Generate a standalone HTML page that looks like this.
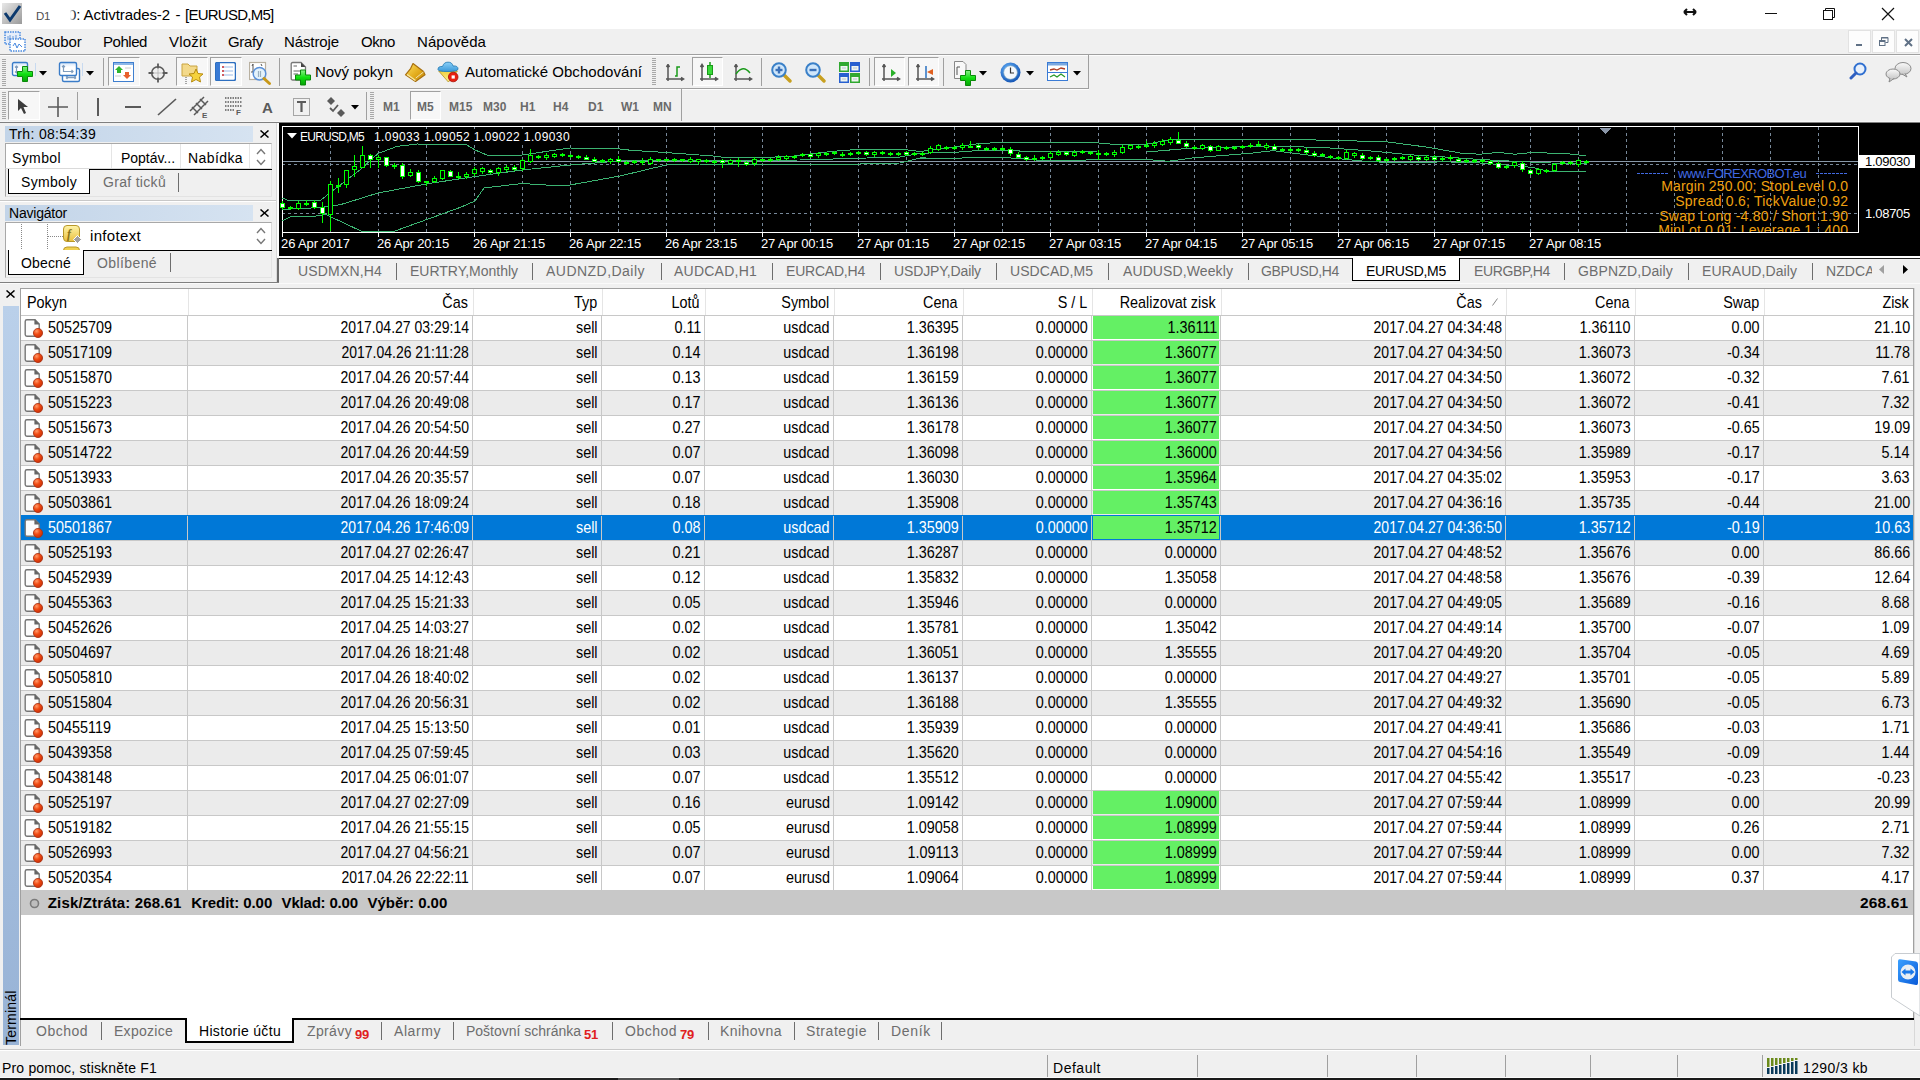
<!DOCTYPE html><html><head><meta charset="utf-8"><style>
html,body{margin:0;padding:0;}
body{width:1920px;height:1080px;overflow:hidden;position:relative;background:#f0f0f0;font-family:"Liberation Sans",sans-serif;}
.t{position:absolute;white-space:nowrap;}
.r{position:absolute;}
</style></head><body>

<div class="r" style="left:0px;top:0px;width:1920px;height:29px;background:#fff;"></div>
<svg class="r" style="left:2px;top:3px;" width="20" height="21" viewBox="0 0 20 21"><defs><linearGradient id="gi" x1="0" y1="0" x2="1" y2="1"><stop offset="0" stop-color="#e8e8e8"/><stop offset="1" stop-color="#9a9a9a"/></linearGradient></defs><rect x="0" y="0" width="20" height="21" fill="url(#gi)"/><path d="M3 10 L8 17 L18 3" stroke="#0d3a6e" stroke-width="3" fill="none"/></svg>
<div class="t" style="top:8.75px;font-size:11.5px;line-height:15.5px;color:#505050;letter-spacing:-0.351px;left:36px;">D1</div>
<div class="t" style="top:5.00px;font-size:15px;line-height:19px;color:#000;letter-spacing:-0.086px;left:68px;">0: Activtrades-2</div>
<div class="t" style="top:5.00px;font-size:15px;line-height:19px;color:#000;left:175.5px;">-</div>
<div class="t" style="top:5.00px;font-size:15px;line-height:19px;color:#000;letter-spacing:-0.744px;left:185px;">[EURUSD,M5]</div>
<div class="r" style="left:50px;top:0px;width:26px;height:29px;background:linear-gradient(90deg,#fff 76%,rgba(255,255,255,0));"></div>
<svg class="r" style="left:1683px;top:7px;" width="14" height="10" viewBox="0 0 14 10"><path d="M1 5 H13 M1 5 L4 2 M1 5 L4 8 M13 5 L10 2 M13 5 L10 8" stroke="#111" stroke-width="2" fill="none"/></svg>
<div class="r" style="left:1765px;top:13px;width:12px;height:1px;background:#111;"></div>
<svg class="r" style="left:1822px;top:7px;" width="14" height="14" viewBox="0 0 14 14"><rect x="1.5" y="3.5" width="9" height="9" fill="none" stroke="#111"/><path d="M3.5 3.5 V1.5 H12.5 V10.5 H10.5" fill="none" stroke="#111"/></svg>
<svg class="r" style="left:1881px;top:7px;" width="14" height="14" viewBox="0 0 14 14"><path d="M1 1 L13 13 M13 1 L1 13" stroke="#111" stroke-width="1.2"/></svg>
<svg class="r" style="left:4px;top:31px;" width="22" height="21" viewBox="0 0 22 21"><rect x="1" y="1" width="15" height="12" fill="#e6eefa" stroke="#4a8ae0" stroke-width="1.5" stroke-dasharray="1.5 1"/><path d="M4 5 V9 M6 4 V8 M9 5 V10 M12 4 V8" stroke="#6a9ad8" stroke-width="1"/><rect x="6" y="8" width="15" height="12" fill="#fff" stroke="#4a8ae0" stroke-width="1.5" stroke-dasharray="1.5 1"/><path d="M9 15 L11 12 L13 17 L15 13 L18 16" stroke="#4a8ae0" fill="none"/></svg>
<div class="t" style="top:32.30px;font-size:15px;line-height:19px;color:#000;letter-spacing:-0.145px;left:34px;">Soubor</div>
<div class="t" style="top:32.30px;font-size:15px;line-height:19px;color:#000;letter-spacing:-0.451px;left:103px;">Pohled</div>
<div class="t" style="top:32.30px;font-size:15px;line-height:19px;color:#000;letter-spacing:0.220px;left:169px;">Vložit</div>
<div class="t" style="top:32.30px;font-size:15px;line-height:19px;color:#000;letter-spacing:-0.335px;left:228px;">Grafy</div>
<div class="t" style="top:32.30px;font-size:15px;line-height:19px;color:#000;letter-spacing:-0.107px;left:284px;">Nástroje</div>
<div class="t" style="top:32.30px;font-size:15px;line-height:19px;color:#000;letter-spacing:-0.463px;left:361px;">Okno</div>
<div class="t" style="top:32.30px;font-size:15px;line-height:19px;color:#000;letter-spacing:0.076px;left:417px;">Nápověda</div>
<div class="r" style="left:1848px;top:30px;width:23px;height:23px;background:#fdfdfd;box-sizing:border-box;border:1px solid #e2e2e2;"></div>
<div class="r" style="left:1872px;top:30px;width:23px;height:23px;background:#fdfdfd;box-sizing:border-box;border:1px solid #e2e2e2;"></div>
<div class="r" style="left:1896px;top:30px;width:23px;height:23px;background:#fdfdfd;box-sizing:border-box;border:1px solid #e2e2e2;"></div>
<div class="r" style="left:1856px;top:44px;width:6px;height:2px;background:#5f7085;"></div>
<svg class="r" style="left:1879px;top:37px;" width="10" height="9" viewBox="0 0 10 9"><rect x="0.5" y="3.5" width="5.5" height="5" fill="none" stroke="#5f7085"/><rect x="0.5" y="3.5" width="5.5" height="1.5" fill="#5f7085"/><path d="M2.5 3 V0.5 H9 V5.5 H6.5" fill="none" stroke="#5f7085"/><rect x="2.5" y="0" width="6.5" height="1.5" fill="#5f7085"/></svg>
<svg class="r" style="left:1904px;top:38px;" width="9" height="9" viewBox="0 0 9 9"><path d="M1 1 L8 8 M8 1 L1 8" stroke="#5f7085" stroke-width="2"/></svg>
<div class="r" style="left:0px;top:54px;width:1920px;height:1px;background:#a0a0a0;"></div>
<div class="r" style="left:0px;top:55px;width:1920px;height:1px;background:#fdfdfd;"></div>
<div class="r" style="left:2px;top:59px;width:4px;height:27px;background:repeating-linear-gradient(#a8a8a8 0 1px,transparent 1px 2px);"></div>
<svg class="r" style="left:11px;top:61px;" width="24" height="22" viewBox="0 0 24 22"><defs><linearGradient id="wg" x1="0" y1="0" x2="0" y2="1"><stop offset="0" stop-color="#cfe2f8"/><stop offset="0.35" stop-color="#fff"/></linearGradient><linearGradient id="pg" x1="0" y1="0" x2="0" y2="1"><stop offset="0" stop-color="#8af08a"/><stop offset="0.5" stop-color="#10e010"/><stop offset="1" stop-color="#08a008"/></linearGradient></defs><rect x="1.5" y="1.5" width="15" height="13" rx="1.5" fill="url(#wg)" stroke="#3a7cc8" stroke-width="1.4"/><path d="M5.5 5 V12 M4 6.5 L5.5 5 L7 6.5 M4 10.5 L5.5 12 L7 10.5" stroke="#7f9cbc" stroke-width="1.2" fill="none"/><path d="M11.5 5.5 H16.5 V10.5 H21.5 V15.5 H16.5 V20.5 H11.5 V15.5 H6.5 V10.5 H11.5 Z" fill="url(#pg)" stroke="#0a8a0a" stroke-width="1"/></svg>
<div class="r" style="left:35px;top:63px;width:1px;height:13px;background:#c8daf0;"></div>
<svg class="r" style="left:39px;top:71px;" width="8" height="5" viewBox="0 0 8 5"><path d="M0 0 H8 L4 4.5 Z" fill="#000"/></svg>
<svg class="r" style="left:58px;top:61px;" width="23" height="22" viewBox="0 0 23 22"><rect x="4.5" y="7.5" width="17" height="13" rx="1.5" fill="#fff" stroke="#3a7cc8" stroke-width="1.4"/><path d="M8 16.5 H18 M8 16.5 L9.5 15 M8 16.5 L9.5 18 M18 16.5 L16.5 15 M18 16.5 L16.5 18" stroke="#7f9cbc" stroke-width="1.3" fill="none"/><rect x="1.5" y="1.5" width="17" height="13" rx="1.5" fill="url(#wg)" stroke="#3a7cc8" stroke-width="1.4"/><path d="M5.5 4.5 V10.5 H15 M4 6 L5.5 4.5 L7 6 M13.5 9 L15 10.5 L13.5 12" stroke="#7f9cbc" stroke-width="1.2" fill="none"/></svg>
<div class="r" style="left:82px;top:63px;width:1px;height:13px;background:#c8daf0;"></div>
<svg class="r" style="left:86px;top:71px;" width="8" height="5" viewBox="0 0 8 5"><path d="M0 0 H8 L4 4.5 Z" fill="#000"/></svg>
<div class="r" style="left:103px;top:58px;width:1px;height:28px;background:#a0a0a0;"></div>
<div class="r" style="left:108px;top:57px;width:32px;height:29px;box-sizing:border-box;border-top:1px solid #a0a0a0;border-left:1px solid #a0a0a0;border-right:1px solid #fff;border-bottom:1px solid #fff;background:#f7f7f7;"></div>
<svg class="r" style="left:113px;top:62px;" width="21" height="20" viewBox="0 0 21 20"><rect x="0.5" y="0.5" width="20" height="19" fill="#fff" stroke="#3f7fcf"/><rect x="1" y="1" width="19" height="2" fill="#8db7e8"/><path d="M6 4 L10 8 H8 V11 H4 V8 H2 Z" fill="#2fb52f"/><path d="M14 17 L18 13 H16 V10 H12 V13 H10 Z" fill="#e8602c"/><path d="M12 6 H18 M2 14 H8" stroke="#ccc"/></svg>
<svg class="r" style="left:148px;top:63px;" width="20" height="20" viewBox="0 0 20 20"><circle cx="10" cy="10" r="6.3" fill="none" stroke="#5a5a5a" stroke-width="1.6"/><path d="M10 0.5 V5.5 M10 14.5 V19.5 M0.5 10 H5.5 M14.5 10 H19.5" stroke="#5a5a5a" stroke-width="1.8"/><path d="M10 6 V14 M6 10 H14" stroke="#b0b0b0" stroke-width="0.8"/></svg>
<div class="r" style="left:176px;top:57px;width:32px;height:29px;box-sizing:border-box;border-top:1px solid #a0a0a0;border-left:1px solid #a0a0a0;border-right:1px solid #fff;border-bottom:1px solid #fff;background:#f7f7f7;"></div>
<svg class="r" style="left:181px;top:61px;" width="23" height="24" viewBox="0 0 23 24"><path d="M1 3 H7 L9 5 H16 V15 H1 Z" fill="#f3d98a" stroke="#c9a440"/><path d="M15 8 L17 12.5 L22 13 L18.5 16 L19.5 21 L15 18.5 L10.5 21 L11.5 16 L8 13 L13 12.5 Z" fill="#f5d23c" stroke="#b88c10"/><path d="M5 16 V23" stroke="#555" stroke-dasharray="1 1"/></svg>
<div class="r" style="left:210px;top:57px;width:32px;height:29px;box-sizing:border-box;border-top:1px solid #a0a0a0;border-left:1px solid #a0a0a0;border-right:1px solid #fff;border-bottom:1px solid #fff;background:#f7f7f7;"></div>
<svg class="r" style="left:215px;top:62px;" width="21" height="19" viewBox="0 0 21 19"><rect x="0.5" y="0.5" width="20" height="18" rx="2" fill="#fff" stroke="#2d6fc0" stroke-width="1.5"/><rect x="1" y="1" width="4" height="17" fill="#3a7bd5"/><path d="M7 5 H18 M7 9 H18 M7 13 H18" stroke="#9cbbe6"/><path d="M7 5 H9 M7 9 H9 M7 13 H9" stroke="#d03030" stroke-width="1.5"/></svg>
<svg class="r" style="left:249px;top:61px;" width="24" height="26" viewBox="0 0 24 26"><rect x="0.5" y="1.5" width="16" height="17" fill="#fff" stroke="#b8b0a0" stroke-width="1.2"/><path d="M4 3 V11 M4 3 L3 5 M4 11 H2 M12 3 L13 5" stroke="#555" stroke-width="1"/><circle cx="10.5" cy="12.7" r="6.3" fill="#e4f2fb" stroke="#5a90d8" stroke-width="1.5"/><path d="M9.5 10 V16 M11.5 10 V16" stroke="#9ab0c0" stroke-width="1.2"/><path d="M15 17.5 L20.5 22.5" stroke="#c89818" stroke-width="3" stroke-linecap="round"/></svg>
<div class="r" style="left:279px;top:58px;width:1px;height:28px;background:#a0a0a0;"></div>
<svg class="r" style="left:289px;top:61px;" width="23" height="25" viewBox="0 0 23 25"><path d="M2.2 3 Q2.2 1.5 3.7 1.5 H12 L16.5 6 V17.5 Q16.5 19 15 19 H3.7 Q2.2 19 2.2 17.5 Z" fill="#fff" stroke="#777" stroke-width="1.3"/><path d="M12 1.5 V6 H16.5 Z" fill="#444"/><path d="M4.5 5 H8 M4.5 10 H12 M4.5 13 H9" stroke="#999" stroke-width="1.3"/><path d="M9 9 H14 V14 H19 V19 H14 V24 H9 V19 H4 V14 H9 Z" transform="translate(2.5,0)" fill="url(#pg)" stroke="#0a8a0a" stroke-width="1"/></svg>
<div class="t" style="top:62.20px;font-size:15px;line-height:19px;color:#000;letter-spacing:-0.037px;left:315px;">Nový pokyn</div>
<svg class="r" style="left:404px;top:62px;" width="22" height="21" viewBox="0 0 22 21"><defs><linearGradient id="gold" x1="0" y1="0" x2="1" y2="1"><stop offset="0" stop-color="#ffe060"/><stop offset="0.6" stop-color="#e0a818"/><stop offset="1" stop-color="#c08810"/></linearGradient></defs><path d="M9 1.5 L19.5 9.5 L21 12.8 L11.5 19.5 L1.5 12.8 L6.6 6.6 Z" fill="url(#gold)" stroke="#a87010" stroke-width="1.2" stroke-linejoin="round"/><path d="M3 12.5 L11.5 18.5" stroke="#f8e8a0" stroke-width="1.5"/><path d="M19.5 10 L11.8 16" stroke="#f0e0b0" stroke-width="1"/></svg>
<svg class="r" style="left:437px;top:61px;" width="22" height="22" viewBox="0 0 22 22"><defs><linearGradient id="hat" x1="0" y1="0" x2="0" y2="1"><stop offset="0" stop-color="#8ad0f8"/><stop offset="1" stop-color="#3a98d8"/></linearGradient><linearGradient id="sack" x1="0" y1="0" x2="0" y2="1"><stop offset="0" stop-color="#f0d040"/><stop offset="1" stop-color="#fff090"/></linearGradient></defs><path d="M1.7 10 L20.4 10 L11.4 21 Z" fill="url(#sack)" stroke="#b09020" stroke-width="0.8"/><path d="M1 8.5 Q1 5 5.5 5.5 Q7 1 11 1.2 Q15 1 16 5 Q21 4.5 21 8 Q21 10.5 11 10.5 Q1 10.5 1 8.5 Z" fill="url(#hat)" stroke="#2a80b8" stroke-width="0.9"/><circle cx="16.2" cy="16" r="4.8" fill="#e82010" stroke="#a81008" stroke-width="0.8"/><rect x="14.6" y="14.4" width="3.2" height="3.2" fill="#fff"/></svg>
<div class="t" style="top:62.20px;font-size:15px;line-height:19px;color:#000;letter-spacing:0.046px;left:465px;">Automatické Obchodování</div>
<div class="r" style="left:652px;top:58px;width:4px;height:28px;background:repeating-linear-gradient(#a8a8a8 0 1px,transparent 1px 2px);"></div>
<svg class="r" style="left:665px;top:64px;" width="20" height="19" viewBox="0 0 20 19"><path d="M3 1 V17 M1 15 H18 M1.5 3 L3 0.5 L4.5 3 M16 13.5 L18.5 15 L16 16.5" stroke="#555" stroke-width="1.5" fill="none"/><path d="M10 12 H12 V3 H15" stroke="#1a9a1a" stroke-width="1.5" fill="none"/></svg>
<div class="r" style="left:692px;top:57px;width:31px;height:29px;box-sizing:border-box;border-top:1px solid #a0a0a0;border-left:1px solid #a0a0a0;border-right:1px solid #fff;border-bottom:1px solid #fff;background:#f7f7f7;"></div>
<svg class="r" style="left:699px;top:62px;" width="20" height="21" viewBox="0 0 20 21"><path d="M3 3 V19 M1 17 H18 M1.5 5 L3 2.5 L4.5 5 M16 15.5 L18.5 17 L16 18.5" stroke="#555" stroke-width="1.5" fill="none"/><path d="M11 0 V16" stroke="#1a9a1a" stroke-width="1.5"/><rect x="8.5" y="3.5" width="5" height="9" fill="#3ada3a" stroke="#1a9a1a"/></svg>
<svg class="r" style="left:733px;top:64px;" width="20" height="19" viewBox="0 0 20 19"><path d="M3 1 V17 M1 15 H18 M1.5 3 L3 0.5 L4.5 3 M16 13.5 L18.5 15 L16 16.5" stroke="#555" stroke-width="1.5" fill="none"/><path d="M3 10 Q10 0 17 9" stroke="#1a9a1a" stroke-width="1.5" fill="none"/></svg>
<div class="r" style="left:761px;top:58px;width:1px;height:28px;background:#a0a0a0;"></div>
<svg class="r" style="left:771px;top:62px;" width="21" height="21" viewBox="0 0 21 21"><path d="M12.5 12.5 L19 19" stroke="#c8a020" stroke-width="3.4" stroke-linecap="round"/><circle cx="8" cy="8" r="6.8" fill="#cfe6fa" stroke="#3a80c8" stroke-width="2"/><path d="M4.5 8 H11.5" stroke="#3a70b8" stroke-width="2.4"/><path d="M8 4.5 V11.5" stroke="#3a70b8" stroke-width="2.4"/></svg>
<svg class="r" style="left:805px;top:62px;" width="21" height="21" viewBox="0 0 21 21"><path d="M12.5 12.5 L19 19" stroke="#c8a020" stroke-width="3.4" stroke-linecap="round"/><circle cx="8" cy="8" r="6.8" fill="#cfe6fa" stroke="#3a80c8" stroke-width="2"/><path d="M4.5 8 H11.5" stroke="#3a70b8" stroke-width="2.4"/></svg>
<svg class="r" style="left:839px;top:62px;" width="21" height="21" viewBox="0 0 21 21"><rect x="0" y="0" width="10" height="10" fill="#30a830"/><rect x="11" y="0" width="10" height="10" fill="#2860d0"/><rect x="0" y="11" width="10" height="10" fill="#2860d0"/><rect x="11" y="11" width="10" height="10" fill="#30a830"/><path d="M1.5 4 H8.5 V8.5 H1.5 Z M12.5 4 H19.5 V8.5 H12.5 Z M1.5 15 H8.5 V19.5 H1.5 Z M12.5 15 H19.5 V19.5 H12.5 Z" fill="#f0f6f0"/><path d="M3 6 H7 M14 6 H18 M3 17 H7 M14 17 H18" stroke="#a8b8c8" stroke-width="0.8"/></svg>
<div class="r" style="left:869px;top:58px;width:1px;height:28px;background:#a0a0a0;"></div>
<div class="r" style="left:874px;top:57px;width:31px;height:29px;box-sizing:border-box;border-top:1px solid #a0a0a0;border-left:1px solid #a0a0a0;border-right:1px solid #fff;border-bottom:1px solid #fff;background:#f7f7f7;"></div>
<svg class="r" style="left:882px;top:64px;" width="19" height="19" viewBox="0 0 19 19"><path d="M2 1 V17 M0 15 H17 M0.5 3 L2 0.5 L3.5 3 M15 13.5 L17.5 15 L15 16.5" stroke="#555" stroke-width="1.5" fill="none"/><path d="M9 5 L14 9 L9 13 Z" fill="#2ab02a"/></svg>
<div class="r" style="left:908px;top:57px;width:31px;height:29px;box-sizing:border-box;border-top:1px solid #a0a0a0;border-left:1px solid #a0a0a0;border-right:1px solid #fff;border-bottom:1px solid #fff;background:#f7f7f7;"></div>
<svg class="r" style="left:916px;top:64px;" width="19" height="19" viewBox="0 0 19 19"><path d="M2 1 V17 M0 15 H17 M0.5 3 L2 0.5 L3.5 3 M15 13.5 L17.5 15 L15 16.5" stroke="#555" stroke-width="1.5" fill="none"/><path d="M10 2 V14" stroke="#2a70c0" stroke-width="1.5"/><path d="M11 8 L17 5 V11 Z" fill="#e06020"/></svg>
<div class="r" style="left:943px;top:58px;width:1px;height:28px;background:#a0a0a0;"></div>
<svg class="r" style="left:954px;top:61px;" width="23" height="25" viewBox="0 0 23 25"><path d="M0.5 0.5 H9 L12 3.5 V17.5 H0.5 Z" fill="#f8f8f8" stroke="#888"/><path d="M3 6 V14 M3 6 H6" stroke="#555"/><path d="M11.5 9.5 H16.5 V14.5 H21.5 V19.5 H16.5 V24.5 H11.5 V19.5 H6.5 V14.5 H11.5 Z" fill="url(#pg)" stroke="#0a8a0a"/></svg>
<svg class="r" style="left:979px;top:71px;" width="8" height="5" viewBox="0 0 8 5"><path d="M0 0 H8 L4 4.5 Z" fill="#000"/></svg>
<svg class="r" style="left:1000px;top:62px;" width="21" height="21" viewBox="0 0 21 21"><defs><radialGradient id="clk" cx="0.4" cy="0.35" r="0.7"><stop offset="0" stop-color="#6ab8ff"/><stop offset="1" stop-color="#1050b0"/></radialGradient></defs><circle cx="10.5" cy="10.5" r="10" fill="url(#clk)"/><circle cx="10.5" cy="10.5" r="6.8" fill="#f4f8fc" stroke="#8ab" stroke-width="0.6"/><path d="M10.5 5.5 V11 H14" stroke="#333" stroke-width="1.2" fill="none"/></svg>
<svg class="r" style="left:1026px;top:71px;" width="8" height="5" viewBox="0 0 8 5"><path d="M0 0 H8 L4 4.5 Z" fill="#000"/></svg>
<svg class="r" style="left:1047px;top:62px;" width="21" height="19" viewBox="0 0 21 19"><rect x="0.5" y="0.5" width="20" height="18" fill="#fff" stroke="#3a7bd5"/><rect x="1" y="1" width="19" height="2.5" fill="#7aa8e0"/><path d="M3 8 L7 7 L10 8 L14 6 L18 7" stroke="#b03a20" stroke-width="1.3" fill="none"/><path d="M1 10.5 H20" stroke="#3a7bd5"/><path d="M3 15 L7 13 L10 15 L14 12 L18 15" stroke="#2a9a2a" stroke-width="1.3" fill="none"/></svg>
<svg class="r" style="left:1073px;top:71px;" width="8" height="5" viewBox="0 0 8 5"><path d="M0 0 H8 L4 4.5 Z" fill="#000"/></svg>
<div class="r" style="left:1088px;top:55px;width:1px;height:33px;background:#a0a0a0;"></div>
<svg class="r" style="left:1849px;top:62px;" width="18" height="18" viewBox="0 0 18 18"><circle cx="11" cy="7" r="5.5" fill="#e8f0fb" stroke="#2f6fd0" stroke-width="2"/><path d="M7 11 L2 16" stroke="#2f5fc0" stroke-width="3" stroke-linecap="round"/></svg>
<svg class="r" style="left:1884px;top:61px;" width="28" height="22" viewBox="0 0 28 22"><defs><linearGradient id="chg" x1="0" y1="0" x2="0" y2="1"><stop offset="0" stop-color="#fafafa"/><stop offset="1" stop-color="#c8c8c8"/></linearGradient></defs><ellipse cx="19" cy="7.5" rx="8" ry="6" fill="url(#chg)" stroke="#8a8a8a"/><path d="M21 12.5 L23 16 L18 13" fill="#ccc" stroke="#8a8a8a"/><ellipse cx="9" cy="13" rx="7" ry="5" fill="url(#chg)" stroke="#8a8a8a"/><path d="M6 17 L5 21 L10 17.5" fill="#ccc" stroke="#8a8a8a"/></svg>
<div class="r" style="left:0px;top:88px;width:1089px;height:1px;background:#a0a0a0;"></div>
<div class="r" style="left:0px;top:89px;width:1089px;height:1px;background:#fdfdfd;"></div>
<div class="r" style="left:2px;top:92px;width:4px;height:28px;background:repeating-linear-gradient(#a8a8a8 0 1px,transparent 1px 2px);"></div>
<div class="r" style="left:8px;top:91px;width:32px;height:29px;box-sizing:border-box;border-top:1px solid #a0a0a0;border-left:1px solid #a0a0a0;border-right:1px solid #fff;border-bottom:1px solid #fff;background:#f7f7f7;"></div>
<svg class="r" style="left:17px;top:98px;" width="13" height="17" viewBox="0 0 13 17"><path d="M1 1 L1 13 L4 10 L7 16 L9 15 L6.5 9 L11 9 Z" fill="#3c3c3c"/></svg>
<svg class="r" style="left:48px;top:97px;" width="20" height="20" viewBox="0 0 20 20"><path d="M10 0 V20 M0 10 H20" stroke="#5a5a5a" stroke-width="1.6"/></svg>
<div class="r" style="left:77px;top:92px;width:1px;height:28px;background:#a0a0a0;"></div>
<div class="r" style="left:97px;top:98px;width:2px;height:18px;background:#5a5a5a;"></div>
<div class="r" style="left:125px;top:106px;width:16px;height:2px;background:#5a5a5a;"></div>
<svg class="r" style="left:157px;top:98px;" width="20" height="18" viewBox="0 0 20 18"><path d="M1 17 L19 1" stroke="#5a5a5a" stroke-width="1.6"/></svg>
<svg class="r" style="left:189px;top:96px;" width="22" height="23" viewBox="0 0 22 23"><path d="M1 15 L15 1 M5 19 L19 5 M3 11 L9 17 M7 7 L13 13 M11 3 L17 9" stroke="#5a5a5a" stroke-width="1.5"/><text x="13" y="22" font-size="8" font-weight="bold" fill="#5a5a5a" font-family="Liberation Sans">E</text></svg>
<svg class="r" style="left:225px;top:97px;" width="19" height="19" viewBox="0 0 19 19"><path d="M0 1 H17 M0 5 H17 M0 9 H17 M0 13 H10" stroke="#5a5a5a" stroke-width="1.3" stroke-dasharray="1.5 1"/><text x="11" y="18" font-size="8" font-weight="bold" fill="#5a5a5a" font-family="Liberation Sans">F</text></svg>
<div class="t" style="top:97.50px;font-size:15px;line-height:19px;color:#5a5a5a;font-weight:bold;left:262px;">A</div>
<svg class="r" style="left:293px;top:97px;" width="17" height="19" viewBox="0 0 17 19"><rect x="0.5" y="1.5" width="16" height="17" fill="none" stroke="#5a5a5a" stroke-dasharray="1 1"/><path d="M4 5 H13 M8.5 5 V15" stroke="#5a5a5a" stroke-width="2.2"/></svg>
<svg class="r" style="left:327px;top:97px;" width="19" height="21" viewBox="0 0 19 21"><path d="M4 0 L8 4 L4 8 L0 4 Z M14 12 L18 16 L14 20 L10 16 Z" fill="#5a5a5a"/><path d="M3 11 L6 14 L11 8" stroke="#5a5a5a" stroke-width="1.8" fill="none"/></svg>
<svg class="r" style="left:351px;top:105px;" width="8" height="5" viewBox="0 0 8 5"><path d="M0 0 H8 L4 4.5 Z" fill="#000"/></svg>
<div class="r" style="left:366px;top:92px;width:1px;height:28px;background:#a0a0a0;"></div>
<div class="r" style="left:370px;top:92px;width:4px;height:28px;background:repeating-linear-gradient(#a8a8a8 0 1px,transparent 1px 2px);"></div>
<div class="r" style="left:410px;top:91px;width:31px;height:29px;box-sizing:border-box;border-top:1px solid #a0a0a0;border-left:1px solid #a0a0a0;border-right:1px solid #fff;border-bottom:1px solid #fff;background:#f7f7f7;"></div>
<div class="t" style="top:99.00px;font-size:12px;line-height:16px;color:#6a6a6a;font-weight:bold;left:383px;">M1</div>
<div class="t" style="top:99.00px;font-size:12px;line-height:16px;color:#6a6a6a;font-weight:bold;left:417px;">M5</div>
<div class="t" style="top:99.00px;font-size:12px;line-height:16px;color:#6a6a6a;font-weight:bold;left:449px;">M15</div>
<div class="t" style="top:99.00px;font-size:12px;line-height:16px;color:#6a6a6a;font-weight:bold;left:483px;">M30</div>
<div class="t" style="top:99.00px;font-size:12px;line-height:16px;color:#6a6a6a;font-weight:bold;left:520px;">H1</div>
<div class="t" style="top:99.00px;font-size:12px;line-height:16px;color:#6a6a6a;font-weight:bold;left:553px;">H4</div>
<div class="t" style="top:99.00px;font-size:12px;line-height:16px;color:#6a6a6a;font-weight:bold;left:588px;">D1</div>
<div class="t" style="top:99.00px;font-size:12px;line-height:16px;color:#6a6a6a;font-weight:bold;left:621px;">W1</div>
<div class="t" style="top:99.00px;font-size:12px;line-height:16px;color:#6a6a6a;font-weight:bold;left:653px;">MN</div>
<div class="r" style="left:681px;top:89px;width:1px;height:33px;background:#a0a0a0;"></div>
<div class="r" style="left:0px;top:121px;width:1920px;height:1px;background:#f6f6f6;"></div>
<div class="r" style="left:0px;top:122px;width:1920px;height:1px;background:#808080;"></div>
<div class="r" style="left:5px;top:126px;width:248px;height:16px;background:linear-gradient(90deg,#c2d4e8,#d6e3f1);"></div>
<div class="t" style="top:125.20px;font-size:14px;line-height:18px;color:#000;letter-spacing:0.326px;left:9px;">Trh: 08:54:39</div>
<svg class="r" style="left:260px;top:130px;" width="9" height="8" viewBox="0 0 9 8"><path d="M0.5 0.5 L8.5 7.5 M8.5 0.5 L0.5 7.5" stroke="#000" stroke-width="1.5"/></svg>
<div class="r" style="left:5px;top:143px;width:267px;height:26px;background:#fff;box-sizing:border-box;border:1px solid #dadada;border-top-color:#a8a8a8;border-left-color:#a8a8a8;"></div>
<div class="t" style="top:148.50px;font-size:14px;line-height:18px;color:#000;letter-spacing:0.386px;left:12px;">Symbol</div>
<div class="t" style="top:148.50px;font-size:14px;line-height:18px;color:#000;letter-spacing:-0.024px;left:121px;">Poptáv...</div>
<div class="t" style="top:148.50px;font-size:14px;line-height:18px;color:#000;letter-spacing:0.408px;left:188px;">Nabídka</div>
<div class="r" style="left:111px;top:144px;width:1px;height:24px;background:#e5e5e5;"></div>
<div class="r" style="left:180px;top:144px;width:1px;height:24px;background:#e5e5e5;"></div>
<div class="r" style="left:249px;top:144px;width:1px;height:24px;background:#e5e5e5;"></div>
<svg class="r" style="left:256px;top:148px;" width="10" height="18" viewBox="0 0 10 18"><path d="M1 6 L5 1.5 L9 6 M1 12 L5 16.5 L9 12" stroke="#777" stroke-width="1.4" fill="none"/></svg>
<div class="r" style="left:5px;top:169px;width:267px;height:28px;background:#f0f0f0;box-sizing:border-box;border:1px solid #e3e3e3;border-left-color:#a8a8a8;border-top:none;"></div>
<div class="r" style="left:90px;top:169px;width:182px;height:1px;background:#000;"></div>
<div class="r" style="left:8px;top:169px;width:82px;height:25px;background:#fff;box-sizing:border-box;border:1px solid #000;border-top:none;"></div>
<div class="t" style="top:172.70px;font-size:14px;line-height:18px;color:#000;letter-spacing:0.331px;left:21px;">Symboly</div>
<div class="t" style="top:172.70px;font-size:14px;line-height:18px;color:#6d6d6d;letter-spacing:0.310px;left:103px;">Graf ticků</div>
<div class="r" style="left:178px;top:173px;width:1px;height:19px;background:#6d6d6d;"></div>
<div class="r" style="left:0px;top:200px;width:278px;height:1px;background:#c8c8c8;"></div>
<div class="r" style="left:0px;top:201px;width:278px;height:1px;background:#fff;"></div>
<div class="r" style="left:5px;top:205px;width:248px;height:16px;background:linear-gradient(90deg,#c2d4e8,#d6e3f1);"></div>
<div class="t" style="top:204.30px;font-size:14px;line-height:18px;color:#000;letter-spacing:-0.213px;left:9px;">Navigátor</div>
<svg class="r" style="left:260px;top:209px;" width="9" height="8" viewBox="0 0 9 8"><path d="M0.5 0.5 L8.5 7.5 M8.5 0.5 L0.5 7.5" stroke="#000" stroke-width="1.5"/></svg>
<div class="r" style="left:5px;top:222px;width:267px;height:29px;background:#fff;box-sizing:border-box;border:1px solid #dadada;border-top-color:#a8a8a8;border-left-color:#a8a8a8;"></div>
<div class="r" style="left:21px;top:224px;width:1px;height:25px;background:repeating-linear-gradient(#888 0 1px,transparent 1px 2px);"></div>
<div class="r" style="left:47px;top:224px;width:1px;height:25px;background:repeating-linear-gradient(#888 0 1px,transparent 1px 2px);"></div>
<div class="r" style="left:48px;top:236px;width:15px;height:1px;background:repeating-linear-gradient(90deg,#888 0 1px,transparent 1px 2px);"></div>
<svg class="r" style="left:62px;top:224px;" width="21" height="20" viewBox="0 0 21 20"><defs><linearGradient id="yic" x1="0" y1="0" x2="0" y2="1"><stop offset="0" stop-color="#fff4a8"/><stop offset="1" stop-color="#e8c040"/></linearGradient></defs><rect x="1.5" y="1.5" width="16" height="16" rx="3.5" fill="url(#yic)" stroke="#b8982a"/><text x="5" y="13.5" font-size="12" font-weight="bold" font-style="italic" fill="#8a7418" font-family="Liberation Serif">f</text><path d="M15.5 11.5 L19.5 15.5 L15.5 19.5 L11.5 15.5 Z" fill="#a0a0a0" stroke="#fff" stroke-width="1"/></svg>
<svg class="r" style="left:62px;top:246px;" width="21" height="5" viewBox="0 0 21 5"><path d="M1.5 5 V4.5 Q1.5 1 5 1 H14 Q17.5 1 17.5 4.5 V5 Z" fill="#f0d050" stroke="#b8982a"/></svg>
<div class="t" style="top:226.30px;font-size:15px;line-height:19px;color:#000;letter-spacing:0.330px;left:90px;">infotext</div>
<svg class="r" style="left:256px;top:227px;" width="10" height="18" viewBox="0 0 10 18"><path d="M1 6 L5 1.5 L9 6 M1 12 L5 16.5 L9 12" stroke="#777" stroke-width="1.4" fill="none"/></svg>
<div class="r" style="left:5px;top:250px;width:267px;height:28px;background:#f0f0f0;box-sizing:border-box;border:1px solid #e3e3e3;border-left-color:#a8a8a8;border-top:none;"></div>
<div class="r" style="left:84px;top:250px;width:188px;height:1px;background:#000;"></div>
<div class="r" style="left:8px;top:250px;width:76px;height:25px;background:#fff;box-sizing:border-box;border:1px solid #000;border-top:none;"></div>
<div class="t" style="top:253.50px;font-size:14px;line-height:18px;color:#000;letter-spacing:0.161px;left:21px;">Obecné</div>
<div class="t" style="top:253.50px;font-size:14px;line-height:18px;color:#6d6d6d;letter-spacing:0.397px;left:97px;">Oblíbené</div>
<div class="r" style="left:170px;top:253px;width:1px;height:19px;background:#6d6d6d;"></div>
<div class="r" style="left:276px;top:123px;width:1px;height:159px;background:#d8d8d8;"></div>
<div class="r" style="left:277px;top:123px;width:2px;height:135px;background:#fdfdfd;"></div>
<div class="r" style="left:277px;top:258px;width:2px;height:24px;background:#6a6a6a;"></div>
<div class="r" style="left:0px;top:282px;width:279px;height:1px;background:#808080;"></div>
<div class="r" style="left:0px;top:283px;width:1920px;height:1px;background:#fafafa;"></div>
<div class="r" style="left:279px;top:123px;width:1641px;height:134px;background:#000;"></div>
<svg class="r" style="left:279px;top:123px" width="1641" height="134" viewBox="0 0 1641 134" shape-rendering="crispEdges"><path d="M51.5 4 V109" stroke="#778899" stroke-dasharray="3 3"/><path d="M99.5 4 V109" stroke="#778899" stroke-dasharray="3 3"/><path d="M147.5 4 V109" stroke="#778899" stroke-dasharray="3 3"/><path d="M195.5 4 V109" stroke="#778899" stroke-dasharray="3 3"/><path d="M243.5 4 V109" stroke="#778899" stroke-dasharray="3 3"/><path d="M291.5 4 V109" stroke="#778899" stroke-dasharray="3 3"/><path d="M339.5 4 V109" stroke="#778899" stroke-dasharray="3 3"/><path d="M387.5 4 V109" stroke="#778899" stroke-dasharray="3 3"/><path d="M435.5 4 V109" stroke="#778899" stroke-dasharray="3 3"/><path d="M483.5 4 V109" stroke="#778899" stroke-dasharray="3 3"/><path d="M531.5 4 V109" stroke="#778899" stroke-dasharray="3 3"/><path d="M579.5 4 V109" stroke="#778899" stroke-dasharray="3 3"/><path d="M627.5 4 V109" stroke="#778899" stroke-dasharray="3 3"/><path d="M675.5 4 V109" stroke="#778899" stroke-dasharray="3 3"/><path d="M723.5 4 V109" stroke="#778899" stroke-dasharray="3 3"/><path d="M771.5 4 V109" stroke="#778899" stroke-dasharray="3 3"/><path d="M819.5 4 V109" stroke="#778899" stroke-dasharray="3 3"/><path d="M867.5 4 V109" stroke="#778899" stroke-dasharray="3 3"/><path d="M915.5 4 V109" stroke="#778899" stroke-dasharray="3 3"/><path d="M963.5 4 V109" stroke="#778899" stroke-dasharray="3 3"/><path d="M1011.5 4 V109" stroke="#778899" stroke-dasharray="3 3"/><path d="M1059.5 4 V109" stroke="#778899" stroke-dasharray="3 3"/><path d="M1107.5 4 V109" stroke="#778899" stroke-dasharray="3 3"/><path d="M1155.5 4 V109" stroke="#778899" stroke-dasharray="3 3"/><path d="M1203.5 4 V109" stroke="#778899" stroke-dasharray="3 3"/><path d="M1251.5 4 V109" stroke="#778899" stroke-dasharray="3 3"/><path d="M1299.5 4 V109" stroke="#778899" stroke-dasharray="3 3"/><path d="M1347.5 4 V109" stroke="#778899" stroke-dasharray="3 3"/><path d="M1395.5 4 V109" stroke="#778899" stroke-dasharray="3 3"/><path d="M1443.5 4 V109" stroke="#778899" stroke-dasharray="3 3"/><path d="M1491.5 4 V109" stroke="#778899" stroke-dasharray="3 3"/><path d="M1539.5 4 V109" stroke="#778899" stroke-dasharray="3 3"/><path d="M3 41.5 H1579" stroke="#778899" stroke-dasharray="3 3"/><path d="M3 90.5 H1579" stroke="#778899" stroke-dasharray="3 3"/><path d="M3 38.5 H1579" stroke="#8898a8"/><rect x="3.5" y="3.5" width="1576" height="106" fill="none" stroke="#fff"/><path d="M1320 5 H1332 L1326 11 Z" fill="#8a96a8"/><path d="M3.0 75.0 L11.0 78.0 L42.0 77.0 L52.0 69.0 L82.0 46.0 L99.0 30.5 L118.0 23.4 L138.0 21.0 L164.0 21.4 L187.0 21.5 L196.0 27.0 L208.0 32.0 L243.0 32.0 L291.0 25.0 L341.0 26.0 L352.0 27.3 L385.0 29.4 L434.0 33.0 L448.0 34.8 L480.0 34.8 L516.0 33.0 L551.0 28.6 L583.0 26.0 L622.0 26.0 L641.0 28.6 L703.0 20.2 L744.0 19.2 L816.0 19.7 L832.0 21.1 L868.0 21.1 L892.0 16.5 L1031.0 16.2 L1042.0 17.6 L1104.0 18.3 L1121.0 20.6 L1148.0 24.1 L1183.0 30.3 L1201.0 31.2 L1219.0 29.4 L1236.0 31.2 L1254.0 29.4 L1295.0 31.2 L1307.0 33.0" stroke="#3cb371" stroke-width="1" fill="none"/><path d="M3.0 86.5 L42.0 84.5 L62.0 81.5 L99.0 70.0 L147.0 61.0 L196.0 53.5 L243.0 47.0 L291.0 42.0 L341.0 38.0 L421.0 37.5 L521.0 37.0 L621.0 34.0 L641.0 30.3 L680.0 29.0 L703.0 27.3 L751.0 28.2 L818.0 29.0 L868.0 29.0 L903.0 25.9 L971.0 23.3 L1006.0 23.3 L1051.0 25.0 L1095.0 28.2 L1130.0 31.7 L1166.0 34.0 L1201.0 36.5 L1236.0 38.3 L1272.0 40.0 L1307.0 41.0" stroke="#3cb371" stroke-width="1" fill="none"/><path d="M3.0 98.0 L11.0 94.0 L37.0 93.0 L47.0 91.6 L82.0 108.0 L116.0 108.0 L181.0 84.5 L196.0 78.0 L205.0 65.0 L243.0 60.5 L267.0 62.0 L291.0 62.0 L341.0 53.0 L387.0 42.0 L421.0 41.0 L521.0 41.0 L581.0 41.0 L621.0 40.0 L641.0 35.0 L680.0 35.1 L703.0 34.4 L736.0 35.1 L761.0 37.4 L868.0 36.5 L889.0 38.3 L915.0 34.8 L971.0 30.3 L994.0 27.7 L1059.0 35.6 L1086.0 38.3 L1121.0 40.0 L1166.0 38.8 L1201.0 40.0 L1236.0 42.7 L1254.0 44.5 L1272.0 49.0 L1307.0 48.4" stroke="#3cb371" stroke-width="1" fill="none"/><path d="M3.5 78 V87" stroke="#00ff00" stroke-width="1"/><rect x="1.5" y="80.5" width="4" height="4" fill="#fff" stroke="#00ff00" stroke-width="1"/><path d="M11.5 83 V87" stroke="#00ff00" stroke-width="1"/><rect x="9.0" y="84" width="5" height="2" fill="#00ff00"/><path d="M19.5 78 V87" stroke="#00ff00" stroke-width="1"/><rect x="17.5" y="80.5" width="4" height="5" fill="#000" stroke="#00ff00" stroke-width="1"/><path d="M27.5 77 V83" stroke="#00ff00" stroke-width="1"/><rect x="25.0" y="80" width="5" height="2" fill="#00ff00"/><path d="M35.5 77 V86" stroke="#00ff00" stroke-width="1"/><rect x="33.5" y="79.5" width="4" height="5" fill="#fff" stroke="#00ff00" stroke-width="1"/><path d="M43.5 79 V100" stroke="#00ff00" stroke-width="1"/><rect x="41.5" y="84.5" width="4" height="6" fill="#fff" stroke="#00ff00" stroke-width="1"/><path d="M51.5 58 V108" stroke="#00ff00" stroke-width="1"/><rect x="49.5" y="61.5" width="4" height="30" fill="#000" stroke="#00ff00" stroke-width="1"/><path d="M59.5 55 V70" stroke="#00ff00" stroke-width="1"/><rect x="57.0" y="62" width="5" height="2" fill="#00ff00"/><path d="M67.5 47 V65" stroke="#00ff00" stroke-width="1"/><rect x="65.5" y="47.5" width="4" height="14" fill="#000" stroke="#00ff00" stroke-width="1"/><path d="M75.5 32 V54" stroke="#00ff00" stroke-width="1"/><rect x="73.5" y="43.5" width="4" height="3" fill="#000" stroke="#00ff00" stroke-width="1"/><path d="M83.5 23 V45" stroke="#00ff00" stroke-width="1"/><rect x="81.5" y="32.5" width="4" height="12" fill="#000" stroke="#00ff00" stroke-width="1"/><path d="M91.5 31 V45" stroke="#00ff00" stroke-width="1"/><rect x="89.5" y="32.5" width="4" height="4" fill="#fff" stroke="#00ff00" stroke-width="1"/><path d="M99.5 32 V45" stroke="#00ff00" stroke-width="1"/><rect x="97.5" y="34.5" width="4" height="2" fill="#000" stroke="#00ff00" stroke-width="1"/><path d="M107.5 34 V44" stroke="#00ff00" stroke-width="1"/><rect x="105.5" y="34.5" width="4" height="8" fill="#fff" stroke="#00ff00" stroke-width="1"/><path d="M115.5 40 V46" stroke="#00ff00" stroke-width="1"/><rect x="113.0" y="42" width="5" height="2" fill="#00ff00"/><path d="M123.5 40 V56" stroke="#00ff00" stroke-width="1"/><rect x="121.5" y="42.5" width="4" height="11" fill="#fff" stroke="#00ff00" stroke-width="1"/><path d="M131.5 46 V54" stroke="#00ff00" stroke-width="1"/><rect x="129.5" y="49.5" width="4" height="3" fill="#000" stroke="#00ff00" stroke-width="1"/><path d="M139.5 47 V60" stroke="#00ff00" stroke-width="1"/><rect x="137.5" y="49.5" width="4" height="9" fill="#fff" stroke="#00ff00" stroke-width="1"/><path d="M147.5 58 V63" stroke="#00ff00" stroke-width="1"/><rect x="145.0" y="58" width="5" height="2" fill="#00ff00"/><path d="M155.5 53 V60" stroke="#00ff00" stroke-width="1"/><rect x="153.5" y="55.5" width="4" height="3" fill="#000" stroke="#00ff00" stroke-width="1"/><path d="M163.5 47 V57" stroke="#00ff00" stroke-width="1"/><rect x="161.5" y="47.5" width="4" height="8" fill="#000" stroke="#00ff00" stroke-width="1"/><path d="M171.5 47 V54" stroke="#00ff00" stroke-width="1"/><rect x="169.5" y="48.5" width="4" height="5" fill="#fff" stroke="#00ff00" stroke-width="1"/><path d="M179.5 49 V56" stroke="#00ff00" stroke-width="1"/><rect x="177.0" y="53" width="5" height="2" fill="#00ff00"/><path d="M187.5 49 V56" stroke="#00ff00" stroke-width="1"/><rect x="185.5" y="51.5" width="4" height="2" fill="#000" stroke="#00ff00" stroke-width="1"/><path d="M195.5 44 V53" stroke="#00ff00" stroke-width="1"/><rect x="193.5" y="46.5" width="4" height="4" fill="#000" stroke="#00ff00" stroke-width="1"/><path d="M203.5 44 V51" stroke="#00ff00" stroke-width="1"/><rect x="201.5" y="45.5" width="4" height="3" fill="#000" stroke="#00ff00" stroke-width="1"/><path d="M211.5 46 V51" stroke="#00ff00" stroke-width="1"/><rect x="209.5" y="47.5" width="4" height="2" fill="#fff" stroke="#00ff00" stroke-width="1"/><path d="M219.5 44 V53" stroke="#00ff00" stroke-width="1"/><rect x="217.5" y="45.5" width="4" height="4" fill="#000" stroke="#00ff00" stroke-width="1"/><path d="M227.5 42 V49" stroke="#00ff00" stroke-width="1"/><rect x="225.5" y="44.5" width="4" height="2" fill="#000" stroke="#00ff00" stroke-width="1"/><path d="M235.5 42 V48" stroke="#00ff00" stroke-width="1"/><rect x="233.5" y="44.5" width="4" height="2" fill="#fff" stroke="#00ff00" stroke-width="1"/><path d="M243.5 36 V48" stroke="#00ff00" stroke-width="1"/><rect x="241.5" y="37.5" width="4" height="8" fill="#000" stroke="#00ff00" stroke-width="1"/><path d="M251.5 26 V40" stroke="#00ff00" stroke-width="1"/><rect x="249.5" y="32.5" width="4" height="6" fill="#000" stroke="#00ff00" stroke-width="1"/><path d="M259.5 32 V36" stroke="#00ff00" stroke-width="1"/><rect x="257.0" y="33" width="5" height="2" fill="#00ff00"/><path d="M267.5 30 V37" stroke="#00ff00" stroke-width="1"/><rect x="265.5" y="32.5" width="4" height="2" fill="#000" stroke="#00ff00" stroke-width="1"/><path d="M275.5 30 V35" stroke="#00ff00" stroke-width="1"/><rect x="273.5" y="31.5" width="4" height="2" fill="#000" stroke="#00ff00" stroke-width="1"/><path d="M283.5 30 V34" stroke="#00ff00" stroke-width="1"/><rect x="281.0" y="31" width="5" height="2" fill="#00ff00"/><path d="M291.5 31 V35" stroke="#00ff00" stroke-width="1"/><rect x="289.0" y="32" width="5" height="2" fill="#00ff00"/><path d="M299.5 32 V36" stroke="#00ff00" stroke-width="1"/><rect x="297.0" y="33" width="5" height="2" fill="#00ff00"/><path d="M307.5 32 V37" stroke="#00ff00" stroke-width="1"/><rect x="305.5" y="34.5" width="4" height="2" fill="#fff" stroke="#00ff00" stroke-width="1"/><path d="M315.5 34 V39" stroke="#00ff00" stroke-width="1"/><rect x="313.5" y="36.5" width="4" height="2" fill="#fff" stroke="#00ff00" stroke-width="1"/><path d="M323.5 36 V40" stroke="#00ff00" stroke-width="1"/><rect x="321.0" y="37" width="5" height="2" fill="#00ff00"/><path d="M331.5 35 V41" stroke="#00ff00" stroke-width="1"/><rect x="329.5" y="36.5" width="4" height="2" fill="#000" stroke="#00ff00" stroke-width="1"/><path d="M339.5 33 V40" stroke="#00ff00" stroke-width="1"/><rect x="337.5" y="36.5" width="4" height="2" fill="#fff" stroke="#00ff00" stroke-width="1"/><path d="M347.5 38 V42" stroke="#00ff00" stroke-width="1"/><rect x="345.0" y="39" width="5" height="2" fill="#00ff00"/><path d="M355.5 37 V41" stroke="#00ff00" stroke-width="1"/><rect x="353.0" y="38" width="5" height="2" fill="#00ff00"/><path d="M363.5 35 V42" stroke="#00ff00" stroke-width="1"/><rect x="361.0" y="38" width="5" height="2" fill="#00ff00"/><path d="M371.5 34 V42" stroke="#00ff00" stroke-width="1"/><rect x="369.5" y="36.5" width="4" height="4" fill="#000" stroke="#00ff00" stroke-width="1"/><path d="M379.5 36 V39" stroke="#00ff00" stroke-width="1"/><rect x="377.0" y="36" width="5" height="2" fill="#00ff00"/><path d="M387.5 36 V39" stroke="#00ff00" stroke-width="1"/><rect x="385.0" y="36" width="5" height="2" fill="#00ff00"/><path d="M395.5 35 V39" stroke="#00ff00" stroke-width="1"/><rect x="393.0" y="36" width="5" height="2" fill="#00ff00"/><path d="M403.5 36 V39" stroke="#00ff00" stroke-width="1"/><rect x="401.0" y="36" width="5" height="2" fill="#00ff00"/><path d="M411.5 34 V40" stroke="#00ff00" stroke-width="1"/><rect x="409.5" y="36.5" width="4" height="2" fill="#000" stroke="#00ff00" stroke-width="1"/><path d="M419.5 36 V41" stroke="#00ff00" stroke-width="1"/><rect x="417.5" y="36.5" width="4" height="2" fill="#000" stroke="#00ff00" stroke-width="1"/><path d="M427.5 36 V40" stroke="#00ff00" stroke-width="1"/><rect x="425.0" y="37" width="5" height="2" fill="#00ff00"/><path d="M435.5 37 V41" stroke="#00ff00" stroke-width="1"/><rect x="433.0" y="38" width="5" height="2" fill="#00ff00"/><path d="M443.5 36 V45" stroke="#00ff00" stroke-width="1"/><rect x="441.5" y="37.5" width="4" height="2" fill="#fff" stroke="#00ff00" stroke-width="1"/><path d="M451.5 36 V42" stroke="#00ff00" stroke-width="1"/><rect x="449.5" y="37.5" width="4" height="3" fill="#000" stroke="#00ff00" stroke-width="1"/><path d="M459.5 35 V44" stroke="#00ff00" stroke-width="1"/><rect x="457.0" y="37" width="5" height="2" fill="#00ff00"/><path d="M467.5 38 V43" stroke="#00ff00" stroke-width="1"/><rect x="465.5" y="39.5" width="4" height="2" fill="#fff" stroke="#00ff00" stroke-width="1"/><path d="M475.5 34 V43" stroke="#00ff00" stroke-width="1"/><rect x="473.5" y="36.5" width="4" height="4" fill="#000" stroke="#00ff00" stroke-width="1"/><path d="M483.5 36 V39" stroke="#00ff00" stroke-width="1"/><rect x="481.0" y="36" width="5" height="2" fill="#00ff00"/><path d="M491.5 35 V39" stroke="#00ff00" stroke-width="1"/><rect x="489.0" y="36" width="5" height="2" fill="#00ff00"/><path d="M499.5 32 V38" stroke="#00ff00" stroke-width="1"/><rect x="497.5" y="34.5" width="4" height="2" fill="#000" stroke="#00ff00" stroke-width="1"/><path d="M507.5 32 V37" stroke="#00ff00" stroke-width="1"/><rect x="505.5" y="33.5" width="4" height="2" fill="#000" stroke="#00ff00" stroke-width="1"/><path d="M515.5 32 V36" stroke="#00ff00" stroke-width="1"/><rect x="513.0" y="33" width="5" height="2" fill="#00ff00"/><path d="M523.5 30 V34" stroke="#00ff00" stroke-width="1"/><rect x="521.0" y="31" width="5" height="2" fill="#00ff00"/><path d="M531.5 30 V35" stroke="#00ff00" stroke-width="1"/><rect x="529.5" y="31.5" width="4" height="2" fill="#fff" stroke="#00ff00" stroke-width="1"/><path d="M539.5 29 V35" stroke="#00ff00" stroke-width="1"/><rect x="537.5" y="30.5" width="4" height="2" fill="#000" stroke="#00ff00" stroke-width="1"/><path d="M547.5 29 V33" stroke="#00ff00" stroke-width="1"/><rect x="545.0" y="30" width="5" height="2" fill="#00ff00"/><path d="M555.5 28 V32" stroke="#00ff00" stroke-width="1"/><rect x="553.0" y="29" width="5" height="2" fill="#00ff00"/><path d="M563.5 29 V34" stroke="#00ff00" stroke-width="1"/><rect x="561.0" y="31" width="5" height="2" fill="#00ff00"/><path d="M571.5 29 V33" stroke="#00ff00" stroke-width="1"/><rect x="569.0" y="30" width="5" height="2" fill="#00ff00"/><path d="M579.5 28 V32" stroke="#00ff00" stroke-width="1"/><rect x="577.0" y="29" width="5" height="2" fill="#00ff00"/><path d="M587.5 28 V33" stroke="#00ff00" stroke-width="1"/><rect x="585.5" y="29.5" width="4" height="2" fill="#fff" stroke="#00ff00" stroke-width="1"/><path d="M595.5 28 V34" stroke="#00ff00" stroke-width="1"/><rect x="593.5" y="29.5" width="4" height="2" fill="#000" stroke="#00ff00" stroke-width="1"/><path d="M603.5 28 V32" stroke="#00ff00" stroke-width="1"/><rect x="601.0" y="29" width="5" height="2" fill="#00ff00"/><path d="M611.5 29 V33" stroke="#00ff00" stroke-width="1"/><rect x="609.0" y="30" width="5" height="2" fill="#00ff00"/><path d="M619.5 29 V33" stroke="#00ff00" stroke-width="1"/><rect x="617.0" y="30" width="5" height="2" fill="#00ff00"/><path d="M627.5 28 V33" stroke="#00ff00" stroke-width="1"/><rect x="625.5" y="29.5" width="4" height="2" fill="#fff" stroke="#00ff00" stroke-width="1"/><path d="M635.5 29 V33" stroke="#00ff00" stroke-width="1"/><rect x="633.0" y="30" width="5" height="2" fill="#00ff00"/><path d="M643.5 29 V33" stroke="#00ff00" stroke-width="1"/><rect x="641.0" y="30" width="5" height="2" fill="#00ff00"/><path d="M651.5 23 V31" stroke="#00ff00" stroke-width="1"/><rect x="649.5" y="25.5" width="4" height="4" fill="#000" stroke="#00ff00" stroke-width="1"/><path d="M659.5 21 V28" stroke="#00ff00" stroke-width="1"/><rect x="657.5" y="22.5" width="4" height="4" fill="#000" stroke="#00ff00" stroke-width="1"/><path d="M667.5 23 V27" stroke="#00ff00" stroke-width="1"/><rect x="665.0" y="24" width="5" height="2" fill="#00ff00"/><path d="M675.5 23 V27" stroke="#00ff00" stroke-width="1"/><rect x="673.0" y="24" width="5" height="2" fill="#00ff00"/><path d="M683.5 20 V27" stroke="#00ff00" stroke-width="1"/><rect x="681.5" y="22.5" width="4" height="2" fill="#000" stroke="#00ff00" stroke-width="1"/><path d="M691.5 18 V25" stroke="#00ff00" stroke-width="1"/><rect x="689.0" y="23" width="5" height="2" fill="#00ff00"/><path d="M699.5 21 V27" stroke="#00ff00" stroke-width="1"/><rect x="697.5" y="22.5" width="4" height="2" fill="#fff" stroke="#00ff00" stroke-width="1"/><path d="M707.5 24 V28" stroke="#00ff00" stroke-width="1"/><rect x="705.0" y="25" width="5" height="2" fill="#00ff00"/><path d="M715.5 24 V28" stroke="#00ff00" stroke-width="1"/><rect x="713.0" y="25" width="5" height="2" fill="#00ff00"/><path d="M723.5 24 V28" stroke="#00ff00" stroke-width="1"/><rect x="721.0" y="25" width="5" height="2" fill="#00ff00"/><path d="M731.5 24 V33" stroke="#00ff00" stroke-width="1"/><rect x="729.5" y="26.5" width="4" height="4" fill="#fff" stroke="#00ff00" stroke-width="1"/><path d="M739.5 29 V35" stroke="#00ff00" stroke-width="1"/><rect x="737.5" y="31.5" width="4" height="3" fill="#fff" stroke="#00ff00" stroke-width="1"/><path d="M747.5 33 V38" stroke="#00ff00" stroke-width="1"/><rect x="745.5" y="34.5" width="4" height="2" fill="#fff" stroke="#00ff00" stroke-width="1"/><path d="M755.5 32 V38" stroke="#00ff00" stroke-width="1"/><rect x="753.0" y="35" width="5" height="2" fill="#00ff00"/><path d="M763.5 33 V37" stroke="#00ff00" stroke-width="1"/><rect x="761.0" y="34" width="5" height="2" fill="#00ff00"/><path d="M771.5 28 V36" stroke="#00ff00" stroke-width="1"/><rect x="769.5" y="30.5" width="4" height="4" fill="#000" stroke="#00ff00" stroke-width="1"/><path d="M779.5 27 V33" stroke="#00ff00" stroke-width="1"/><rect x="777.5" y="29.5" width="4" height="2" fill="#000" stroke="#00ff00" stroke-width="1"/><path d="M787.5 28 V33" stroke="#00ff00" stroke-width="1"/><rect x="785.5" y="29.5" width="4" height="2" fill="#fff" stroke="#00ff00" stroke-width="1"/><path d="M795.5 27 V34" stroke="#00ff00" stroke-width="1"/><rect x="793.5" y="29.5" width="4" height="3" fill="#000" stroke="#00ff00" stroke-width="1"/><path d="M803.5 27 V31" stroke="#00ff00" stroke-width="1"/><rect x="801.0" y="28" width="5" height="2" fill="#00ff00"/><path d="M811.5 28 V32" stroke="#00ff00" stroke-width="1"/><rect x="809.0" y="29" width="5" height="2" fill="#00ff00"/><path d="M819.5 27 V37" stroke="#00ff00" stroke-width="1"/><rect x="817.0" y="30" width="5" height="2" fill="#00ff00"/><path d="M827.5 29 V33" stroke="#00ff00" stroke-width="1"/><rect x="825.0" y="30" width="5" height="2" fill="#00ff00"/><path d="M835.5 27 V34" stroke="#00ff00" stroke-width="1"/><rect x="833.5" y="29.5" width="4" height="2" fill="#000" stroke="#00ff00" stroke-width="1"/><path d="M843.5 22 V31" stroke="#00ff00" stroke-width="1"/><rect x="841.5" y="24.5" width="4" height="5" fill="#000" stroke="#00ff00" stroke-width="1"/><path d="M851.5 21 V27" stroke="#00ff00" stroke-width="1"/><rect x="849.5" y="22.5" width="4" height="3" fill="#000" stroke="#00ff00" stroke-width="1"/><path d="M859.5 22 V26" stroke="#00ff00" stroke-width="1"/><rect x="857.0" y="23" width="5" height="2" fill="#00ff00"/><path d="M867.5 18 V25" stroke="#00ff00" stroke-width="1"/><rect x="865.0" y="22" width="5" height="2" fill="#00ff00"/><path d="M875.5 18 V25" stroke="#00ff00" stroke-width="1"/><rect x="873.5" y="20.5" width="4" height="2" fill="#000" stroke="#00ff00" stroke-width="1"/><path d="M883.5 16 V23" stroke="#00ff00" stroke-width="1"/><rect x="881.5" y="18.5" width="4" height="3" fill="#000" stroke="#00ff00" stroke-width="1"/><path d="M891.5 14 V22" stroke="#00ff00" stroke-width="1"/><rect x="889.5" y="16.5" width="4" height="3" fill="#000" stroke="#00ff00" stroke-width="1"/><path d="M899.5 9 V21" stroke="#00ff00" stroke-width="1"/><rect x="897.5" y="17.5" width="4" height="3" fill="#fff" stroke="#00ff00" stroke-width="1"/><path d="M907.5 18 V25" stroke="#00ff00" stroke-width="1"/><rect x="905.5" y="20.5" width="4" height="3" fill="#fff" stroke="#00ff00" stroke-width="1"/><path d="M915.5 23 V27" stroke="#00ff00" stroke-width="1"/><rect x="913.0" y="24" width="5" height="2" fill="#00ff00"/><path d="M923.5 21 V27" stroke="#00ff00" stroke-width="1"/><rect x="921.5" y="22.5" width="4" height="3" fill="#000" stroke="#00ff00" stroke-width="1"/><path d="M931.5 22 V29" stroke="#00ff00" stroke-width="1"/><rect x="929.5" y="23.5" width="4" height="4" fill="#fff" stroke="#00ff00" stroke-width="1"/><path d="M939.5 22 V28" stroke="#00ff00" stroke-width="1"/><rect x="937.5" y="23.5" width="4" height="4" fill="#000" stroke="#00ff00" stroke-width="1"/><path d="M947.5 23 V27" stroke="#00ff00" stroke-width="1"/><rect x="945.0" y="24" width="5" height="2" fill="#00ff00"/><path d="M955.5 23 V27" stroke="#00ff00" stroke-width="1"/><rect x="953.0" y="24" width="5" height="2" fill="#00ff00"/><path d="M963.5 22 V26" stroke="#00ff00" stroke-width="1"/><rect x="961.0" y="23" width="5" height="2" fill="#00ff00"/><path d="M971.5 20 V25" stroke="#00ff00" stroke-width="1"/><rect x="969.0" y="22" width="5" height="2" fill="#00ff00"/><path d="M979.5 18 V24" stroke="#00ff00" stroke-width="1"/><rect x="977.0" y="21" width="5" height="2" fill="#00ff00"/><path d="M987.5 20 V27" stroke="#00ff00" stroke-width="1"/><rect x="985.5" y="22.5" width="4" height="2" fill="#000" stroke="#00ff00" stroke-width="1"/><path d="M995.5 21 V27" stroke="#00ff00" stroke-width="1"/><rect x="993.5" y="23.5" width="4" height="3" fill="#fff" stroke="#00ff00" stroke-width="1"/><path d="M1003.5 25 V29" stroke="#00ff00" stroke-width="1"/><rect x="1001.0" y="26" width="5" height="2" fill="#00ff00"/><path d="M1011.5 25 V29" stroke="#00ff00" stroke-width="1"/><rect x="1009.0" y="26" width="5" height="2" fill="#00ff00"/><path d="M1019.5 25 V29" stroke="#00ff00" stroke-width="1"/><rect x="1017.0" y="26" width="5" height="2" fill="#00ff00"/><path d="M1027.5 25 V32" stroke="#00ff00" stroke-width="1"/><rect x="1025.5" y="27.5" width="4" height="2" fill="#fff" stroke="#00ff00" stroke-width="1"/><path d="M1035.5 28 V34" stroke="#00ff00" stroke-width="1"/><rect x="1033.5" y="30.5" width="4" height="2" fill="#fff" stroke="#00ff00" stroke-width="1"/><path d="M1043.5 30 V34" stroke="#00ff00" stroke-width="1"/><rect x="1041.0" y="31" width="5" height="2" fill="#00ff00"/><path d="M1051.5 32 V36" stroke="#00ff00" stroke-width="1"/><rect x="1049.0" y="33" width="5" height="2" fill="#00ff00"/><path d="M1059.5 33 V37" stroke="#00ff00" stroke-width="1"/><rect x="1057.0" y="34" width="5" height="2" fill="#00ff00"/><path d="M1067.5 27 V37" stroke="#00ff00" stroke-width="1"/><rect x="1065.5" y="29.5" width="4" height="6" fill="#000" stroke="#00ff00" stroke-width="1"/><path d="M1075.5 29 V35" stroke="#00ff00" stroke-width="1"/><rect x="1073.5" y="30.5" width="4" height="2" fill="#000" stroke="#00ff00" stroke-width="1"/><path d="M1083.5 30 V37" stroke="#00ff00" stroke-width="1"/><rect x="1081.5" y="32.5" width="4" height="3" fill="#fff" stroke="#00ff00" stroke-width="1"/><path d="M1091.5 33 V37" stroke="#00ff00" stroke-width="1"/><rect x="1089.0" y="34" width="5" height="2" fill="#00ff00"/><path d="M1099.5 32 V39" stroke="#00ff00" stroke-width="1"/><rect x="1097.5" y="34.5" width="4" height="3" fill="#fff" stroke="#00ff00" stroke-width="1"/><path d="M1107.5 35 V39" stroke="#00ff00" stroke-width="1"/><rect x="1105.0" y="36" width="5" height="2" fill="#00ff00"/><path d="M1115.5 34 V38" stroke="#00ff00" stroke-width="1"/><rect x="1113.0" y="35" width="5" height="2" fill="#00ff00"/><path d="M1123.5 33 V37" stroke="#00ff00" stroke-width="1"/><rect x="1121.0" y="34" width="5" height="2" fill="#00ff00"/><path d="M1131.5 32 V38" stroke="#00ff00" stroke-width="1"/><rect x="1129.5" y="33.5" width="4" height="3" fill="#000" stroke="#00ff00" stroke-width="1"/><path d="M1139.5 32 V38" stroke="#00ff00" stroke-width="1"/><rect x="1137.5" y="34.5" width="4" height="2" fill="#fff" stroke="#00ff00" stroke-width="1"/><path d="M1147.5 32 V38" stroke="#00ff00" stroke-width="1"/><rect x="1145.5" y="34.5" width="4" height="2" fill="#000" stroke="#00ff00" stroke-width="1"/><path d="M1155.5 32 V38" stroke="#00ff00" stroke-width="1"/><rect x="1153.5" y="34.5" width="4" height="2" fill="#fff" stroke="#00ff00" stroke-width="1"/><path d="M1163.5 34 V38" stroke="#00ff00" stroke-width="1"/><rect x="1161.0" y="35" width="5" height="2" fill="#00ff00"/><path d="M1171.5 32 V38" stroke="#00ff00" stroke-width="1"/><rect x="1169.0" y="34" width="5" height="2" fill="#00ff00"/><path d="M1179.5 34 V39" stroke="#00ff00" stroke-width="1"/><rect x="1177.5" y="36.5" width="4" height="2" fill="#fff" stroke="#00ff00" stroke-width="1"/><path d="M1187.5 36 V40" stroke="#00ff00" stroke-width="1"/><rect x="1185.0" y="37" width="5" height="2" fill="#00ff00"/><path d="M1195.5 36 V40" stroke="#00ff00" stroke-width="1"/><rect x="1193.0" y="37" width="5" height="2" fill="#00ff00"/><path d="M1203.5 36 V40" stroke="#00ff00" stroke-width="1"/><rect x="1201.0" y="37" width="5" height="2" fill="#00ff00"/><path d="M1211.5 37 V42" stroke="#00ff00" stroke-width="1"/><rect x="1209.5" y="38.5" width="4" height="2" fill="#fff" stroke="#00ff00" stroke-width="1"/><path d="M1219.5 38 V46" stroke="#00ff00" stroke-width="1"/><rect x="1217.5" y="40.5" width="4" height="4" fill="#fff" stroke="#00ff00" stroke-width="1"/><path d="M1227.5 42 V46" stroke="#00ff00" stroke-width="1"/><rect x="1225.0" y="43" width="5" height="2" fill="#00ff00"/><path d="M1235.5 38 V45" stroke="#00ff00" stroke-width="1"/><rect x="1233.5" y="39.5" width="4" height="3" fill="#000" stroke="#00ff00" stroke-width="1"/><path d="M1243.5 38 V49" stroke="#00ff00" stroke-width="1"/><rect x="1241.5" y="40.5" width="4" height="6" fill="#fff" stroke="#00ff00" stroke-width="1"/><path d="M1251.5 46 V52" stroke="#00ff00" stroke-width="1"/><rect x="1249.5" y="47.5" width="4" height="3" fill="#fff" stroke="#00ff00" stroke-width="1"/><path d="M1259.5 45 V52" stroke="#00ff00" stroke-width="1"/><rect x="1257.5" y="46.5" width="4" height="4" fill="#000" stroke="#00ff00" stroke-width="1"/><path d="M1267.5 46 V50" stroke="#00ff00" stroke-width="1"/><rect x="1265.0" y="47" width="5" height="2" fill="#00ff00"/><path d="M1275.5 40 V49" stroke="#00ff00" stroke-width="1"/><rect x="1273.5" y="41.5" width="4" height="6" fill="#000" stroke="#00ff00" stroke-width="1"/><path d="M1283.5 38 V42" stroke="#00ff00" stroke-width="1"/><rect x="1281.0" y="39" width="5" height="2" fill="#00ff00"/><path d="M1291.5 38 V42" stroke="#00ff00" stroke-width="1"/><rect x="1289.0" y="39" width="5" height="2" fill="#00ff00"/><path d="M1299.5 36 V44" stroke="#00ff00" stroke-width="1"/><rect x="1297.5" y="37.5" width="4" height="4" fill="#000" stroke="#00ff00" stroke-width="1"/><path d="M1307.5 37 V41" stroke="#00ff00" stroke-width="1"/><rect x="1305.0" y="38" width="5" height="2" fill="#00ff00"/><path d="M3.5 109 V114" stroke="#fff"/><path d="M99.5 109 V114" stroke="#fff"/><path d="M195.5 109 V114" stroke="#fff"/><path d="M291.5 109 V114" stroke="#fff"/><path d="M387.5 109 V114" stroke="#fff"/><path d="M483.5 109 V114" stroke="#fff"/><path d="M579.5 109 V114" stroke="#fff"/><path d="M675.5 109 V114" stroke="#fff"/><path d="M771.5 109 V114" stroke="#fff"/><path d="M867.5 109 V114" stroke="#fff"/><path d="M963.5 109 V114" stroke="#fff"/><path d="M1059.5 109 V114" stroke="#fff"/><path d="M1155.5 109 V114" stroke="#fff"/><path d="M1251.5 109 V114" stroke="#fff"/><rect x="1580" y="32" width="56" height="13" fill="#fff"/></svg>
<div class="r" style="left:284px;top:129px;width:288px;height:14px;background:#000;"></div>
<svg class="r" style="left:287px;top:133px;" width="10" height="6" viewBox="0 0 10 6"><path d="M0 0 H10 L5 5.5 Z" fill="#fff"/></svg>
<div class="t" style="top:128.50px;font-size:12px;line-height:16px;color:#fff;letter-spacing:-0.742px;left:300px;">EURUSD,M5</div>
<div class="t" style="top:128.50px;font-size:12px;line-height:16px;color:#fff;letter-spacing:0.403px;left:374px;">1.09033 1.09052 1.09022 1.09030</div>
<div class="t" style="top:235.00px;font-size:13px;line-height:17px;color:#fff;letter-spacing:-0.102px;left:281px;">26 Apr 2017</div>
<div class="t" style="top:235.00px;font-size:13px;line-height:17px;color:#fff;letter-spacing:-0.144px;left:377px;">26 Apr 20:15</div>
<div class="t" style="top:235.00px;font-size:13px;line-height:17px;color:#fff;letter-spacing:-0.144px;left:473px;">26 Apr 21:15</div>
<div class="t" style="top:235.00px;font-size:13px;line-height:17px;color:#fff;letter-spacing:-0.144px;left:569px;">26 Apr 22:15</div>
<div class="t" style="top:235.00px;font-size:13px;line-height:17px;color:#fff;letter-spacing:-0.144px;left:665px;">26 Apr 23:15</div>
<div class="t" style="top:235.00px;font-size:13px;line-height:17px;color:#fff;letter-spacing:-0.144px;left:761px;">27 Apr 00:15</div>
<div class="t" style="top:235.00px;font-size:13px;line-height:17px;color:#fff;letter-spacing:-0.144px;left:857px;">27 Apr 01:15</div>
<div class="t" style="top:235.00px;font-size:13px;line-height:17px;color:#fff;letter-spacing:-0.144px;left:953px;">27 Apr 02:15</div>
<div class="t" style="top:235.00px;font-size:13px;line-height:17px;color:#fff;letter-spacing:-0.144px;left:1049px;">27 Apr 03:15</div>
<div class="t" style="top:235.00px;font-size:13px;line-height:17px;color:#fff;letter-spacing:-0.144px;left:1145px;">27 Apr 04:15</div>
<div class="t" style="top:235.00px;font-size:13px;line-height:17px;color:#fff;letter-spacing:-0.144px;left:1241px;">27 Apr 05:15</div>
<div class="t" style="top:235.00px;font-size:13px;line-height:17px;color:#fff;letter-spacing:-0.144px;left:1337px;">27 Apr 06:15</div>
<div class="t" style="top:235.00px;font-size:13px;line-height:17px;color:#fff;letter-spacing:-0.144px;left:1433px;">27 Apr 07:15</div>
<div class="t" style="top:235.00px;font-size:13px;line-height:17px;color:#fff;letter-spacing:-0.144px;left:1529px;">27 Apr 08:15</div>
<div class="t" style="top:153.00px;font-size:13px;line-height:17px;color:#000;letter-spacing:-0.285px;left:1865px;">1.09030</div>
<div class="t" style="top:204.50px;font-size:13px;line-height:17px;color:#fff;letter-spacing:-0.285px;left:1865px;">1.08705</div>
<div class="r" style="left:1637px;top:173px;width:31px;height:1px;background:repeating-linear-gradient(90deg,#4169e1 0 3px,transparent 3px 4px);"></div>
<div class="r" style="left:1816px;top:173px;width:32px;height:1px;background:repeating-linear-gradient(90deg,#4169e1 0 3px,transparent 3px 4px);"></div>
<div class="t" style="top:164.90px;font-size:13px;line-height:17px;color:#4169e1;letter-spacing:-0.629px;left:1678px;">www.FOREXROBOT.eu</div>
<div class="r" style="left:1500px;top:127px;width:358px;height:105px;overflow:hidden;">
<div class="t" style="right:9.85px;top:49.60px;font-size:14px;line-height:18px;color:#f0a010;letter-spacing:0.146px;">Margin 250.00; StopLevel 0.0</div>
<div class="t" style="right:9.77px;top:64.80px;font-size:14px;line-height:18px;color:#f0a010;letter-spacing:0.228px;">Spread 0.6; TickValue 0.92</div>
<div class="t" style="right:9.75px;top:79.50px;font-size:14px;line-height:18px;color:#f0a010;letter-spacing:0.245px;">Swap Long -4.80 / Short 1.90</div>
<div class="t" style="right:9.86px;top:94.00px;font-size:14px;line-height:18px;color:#f0a010;letter-spacing:0.137px;">MinLot 0.01; Leverage 1 : 400</div>
</div>
<div class="r" style="left:279px;top:256px;width:1641px;height:2px;background:#fff;"></div>
<div class="r" style="left:279px;top:258px;width:1641px;height:1px;background:#202020;"></div>
<div class="t" style="top:262.00px;font-size:14px;line-height:18px;color:#6d6d6d;letter-spacing:0.171px;left:298px;">USDMXN,H4</div>
<div class="t" style="top:262.00px;font-size:14px;line-height:18px;color:#6d6d6d;letter-spacing:-0.012px;left:410px;">EURTRY,Monthly</div>
<div class="t" style="top:262.00px;font-size:14px;line-height:18px;color:#6d6d6d;letter-spacing:0.472px;left:546px;">AUDNZD,Daily</div>
<div class="t" style="top:262.00px;font-size:14px;line-height:18px;color:#6d6d6d;letter-spacing:0.233px;left:674px;">AUDCAD,H1</div>
<div class="t" style="top:262.00px;font-size:14px;line-height:18px;color:#6d6d6d;letter-spacing:-0.212px;left:786px;">EURCAD,H4</div>
<div class="t" style="top:262.00px;font-size:14px;line-height:18px;color:#6d6d6d;letter-spacing:-0.120px;left:894px;">USDJPY,Daily</div>
<div class="t" style="top:262.00px;font-size:14px;line-height:18px;color:#6d6d6d;letter-spacing:0.060px;left:1010px;">USDCAD,M5</div>
<div class="t" style="top:262.00px;font-size:14px;line-height:18px;color:#6d6d6d;letter-spacing:0.104px;left:1123px;">AUDUSD,Weekly</div>
<div class="t" style="top:262.00px;font-size:14px;line-height:18px;color:#6d6d6d;letter-spacing:-0.324px;left:1261px;">GBPUSD,H4</div>
<div class="r" style="left:396px;top:263px;width:1px;height:17px;background:#6d6d6d;"></div>
<div class="r" style="left:532px;top:263px;width:1px;height:17px;background:#6d6d6d;"></div>
<div class="r" style="left:661px;top:263px;width:1px;height:17px;background:#6d6d6d;"></div>
<div class="r" style="left:772px;top:263px;width:1px;height:17px;background:#6d6d6d;"></div>
<div class="r" style="left:880px;top:263px;width:1px;height:17px;background:#6d6d6d;"></div>
<div class="r" style="left:996px;top:263px;width:1px;height:17px;background:#6d6d6d;"></div>
<div class="r" style="left:1108px;top:263px;width:1px;height:17px;background:#6d6d6d;"></div>
<div class="r" style="left:1248px;top:263px;width:1px;height:17px;background:#6d6d6d;"></div>
<div class="r" style="left:1564px;top:263px;width:1px;height:17px;background:#6d6d6d;"></div>
<div class="r" style="left:1688px;top:263px;width:1px;height:17px;background:#6d6d6d;"></div>
<div class="r" style="left:1812px;top:263px;width:1px;height:17px;background:#6d6d6d;"></div>
<div class="r" style="left:1352px;top:258px;width:108px;height:23px;background:#fff;box-sizing:border-box;border:1px solid #000;border-top:none;"></div>
<div class="t" style="top:262.00px;font-size:14px;line-height:18px;color:#000;letter-spacing:-0.273px;left:1366px;">EURUSD,M5</div>
<div class="t" style="top:262.00px;font-size:14px;line-height:18px;color:#6d6d6d;letter-spacing:-0.345px;left:1474px;">EURGBP,H4</div>
<div class="t" style="top:262.00px;font-size:14px;line-height:18px;color:#6d6d6d;letter-spacing:0.138px;left:1578px;">GBPNZD,Daily</div>
<div class="t" style="top:262.00px;font-size:14px;line-height:18px;color:#6d6d6d;letter-spacing:0.073px;left:1702px;">EURAUD,Daily</div>
<div class="r" style="left:1826px;top:259px;width:46px;height:22px;overflow:hidden;">
<div class="t" style="left:0px;top:3px;font-size:14px;line-height:18px;color:#6d6d6d;letter-spacing:0.1px;">NZDCAD,H1</div>
</div>
<svg class="r" style="left:1879px;top:265px;" width="5" height="9" viewBox="0 0 5 9"><path d="M5 0 V9 L0 4.5 Z" fill="#a0a0a0"/></svg>
<svg class="r" style="left:1903px;top:265px;" width="5" height="9" viewBox="0 0 5 9"><path d="M0 0 V9 L5 4.5 Z" fill="#000"/></svg>
<svg class="r" style="left:6px;top:290px;" width="9" height="8" viewBox="0 0 9 8"><path d="M0.5 0.5 L8.5 7.5 M8.5 0.5 L0.5 7.5" stroke="#000" stroke-width="1.5"/></svg>
<div class="r" style="left:3px;top:306px;width:16px;height:739px;background:linear-gradient(#bad0ea,#98b3d6);"></div>
<div class="t" style="left:-18px;top:1008px;width:58px;height:16px;font-size:14px;line-height:16px;color:#000;transform:rotate(-90deg);letter-spacing:0.2px;">Terminál</div>
<div class="r" style="left:20px;top:288px;width:1894px;height:731px;background:#fff;box-sizing:border-box;border:1px solid #a0a0a0;border-bottom:none;"></div>
<div class="r" style="left:188px;top:289px;width:1px;height:26px;background:#e5e5e5;"></div>
<div class="r" style="left:473px;top:289px;width:1px;height:26px;background:#e5e5e5;"></div>
<div class="r" style="left:602px;top:289px;width:1px;height:26px;background:#e5e5e5;"></div>
<div class="r" style="left:705px;top:289px;width:1px;height:26px;background:#e5e5e5;"></div>
<div class="r" style="left:834px;top:289px;width:1px;height:26px;background:#e5e5e5;"></div>
<div class="r" style="left:963px;top:289px;width:1px;height:26px;background:#e5e5e5;"></div>
<div class="r" style="left:1092px;top:289px;width:1px;height:26px;background:#e5e5e5;"></div>
<div class="r" style="left:1221px;top:289px;width:1px;height:26px;background:#e5e5e5;"></div>
<div class="r" style="left:1506px;top:289px;width:1px;height:26px;background:#e5e5e5;"></div>
<div class="r" style="left:1635px;top:289px;width:1px;height:26px;background:#e5e5e5;"></div>
<div class="r" style="left:1764px;top:289px;width:1px;height:26px;background:#e5e5e5;"></div>
<div class="t" style="top:292.65px;font-size:15.7px;line-height:19.7px;color:#000;left:27px;transform-origin:0 50%;transform:scaleX(0.9172);">Pokyn</div>
<div class="t" style="top:292.65px;font-size:15.7px;line-height:19.7px;color:#000;right:1452.00px;transform-origin:100% 50%;transform:scaleX(0.9172);">Čas</div>
<div class="t" style="top:292.65px;font-size:15.7px;line-height:19.7px;color:#000;right:1323.00px;transform-origin:100% 50%;transform:scaleX(0.9172);">Typ</div>
<div class="t" style="top:292.65px;font-size:15.7px;line-height:19.7px;color:#000;right:1220.00px;transform-origin:100% 50%;transform:scaleX(0.9172);">Lotů</div>
<div class="t" style="top:292.65px;font-size:15.7px;line-height:19.7px;color:#000;right:1091.00px;transform-origin:100% 50%;transform:scaleX(0.9172);">Symbol</div>
<div class="t" style="top:292.65px;font-size:15.7px;line-height:19.7px;color:#000;right:962.00px;transform-origin:100% 50%;transform:scaleX(0.9172);">Cena</div>
<div class="t" style="top:292.65px;font-size:15.7px;line-height:19.7px;color:#000;right:833.00px;transform-origin:100% 50%;transform:scaleX(0.9172);">S / L</div>
<div class="t" style="top:292.65px;font-size:15.7px;line-height:19.7px;color:#000;right:704.00px;transform-origin:100% 50%;transform:scaleX(0.9172);">Realizovat zisk</div>
<div class="t" style="top:292.65px;font-size:15.7px;line-height:19.7px;color:#000;right:438.00px;transform-origin:100% 50%;transform:scaleX(0.9172);">Čas</div>
<div class="t" style="top:292.65px;font-size:15.7px;line-height:19.7px;color:#000;right:290.00px;transform-origin:100% 50%;transform:scaleX(0.9172);">Cena</div>
<div class="t" style="top:292.65px;font-size:15.7px;line-height:19.7px;color:#000;right:161.00px;transform-origin:100% 50%;transform:scaleX(0.9172);">Swap</div>
<div class="t" style="top:292.65px;font-size:15.7px;line-height:19.7px;color:#000;right:11.00px;transform-origin:100% 50%;transform:scaleX(0.9172);">Zisk</div>
<svg class="r" style="left:1492px;top:298px;" width="6" height="8" viewBox="0 0 6 8"><path d="M0.5 7.5 L5.5 0.5" stroke="#888"/></svg>
<div class="r" style="left:21px;top:315px;width:1892px;height:1px;background:#c8c8c8;"></div>
<div class="r" style="left:21px;top:340px;width:1892px;height:1px;background:#c8c8c8;"></div>
<div class="r" style="left:187px;top:316px;width:1px;height:24px;background:#c8c8c8;"></div>
<div class="r" style="left:472px;top:316px;width:1px;height:24px;background:#c8c8c8;"></div>
<div class="r" style="left:601px;top:316px;width:1px;height:24px;background:#c8c8c8;"></div>
<div class="r" style="left:704px;top:316px;width:1px;height:24px;background:#c8c8c8;"></div>
<div class="r" style="left:833px;top:316px;width:1px;height:24px;background:#c8c8c8;"></div>
<div class="r" style="left:962px;top:316px;width:1px;height:24px;background:#c8c8c8;"></div>
<div class="r" style="left:1091px;top:316px;width:1px;height:24px;background:#c8c8c8;"></div>
<div class="r" style="left:1220px;top:316px;width:1px;height:24px;background:#c8c8c8;"></div>
<div class="r" style="left:1505px;top:316px;width:1px;height:24px;background:#c8c8c8;"></div>
<div class="r" style="left:1634px;top:316px;width:1px;height:24px;background:#c8c8c8;"></div>
<div class="r" style="left:1763px;top:316px;width:1px;height:24px;background:#c8c8c8;"></div>
<div class="r" style="left:1093px;top:316px;width:126px;height:23px;background:#64f064;"></div>
<svg class="r" style="left:23px;top:318px;" width="21" height="22" viewBox="0 0 21 22"><defs><radialGradient id="rg" cx="0.35" cy="0.3" r="0.7"><stop offset="0" stop-color="#ff9a6a"/><stop offset="0.5" stop-color="#f04a12"/><stop offset="1" stop-color="#c83008"/></radialGradient></defs><path d="M2.2 3.5 Q2.2 1.8 3.9 1.8 H12 L16.2 6 V16.5 Q16.2 18.2 14.5 18.2 H3.9 Q2.2 18.2 2.2 16.5 Z" fill="#fdfdfd" stroke="#777" stroke-width="1.4"/><path d="M12 1.8 V6 H16.2" fill="#666" stroke="#666" stroke-width="1.2"/><circle cx="15" cy="15" r="4.6" fill="url(#rg)" stroke="#a83010" stroke-width="0.8"/></svg>
<div class="t" style="top:318.05px;font-size:15.7px;line-height:19.7px;color:#000;left:48px;transform-origin:0 50%;transform:scaleX(0.9172);">50525709</div>
<div class="t" style="top:318.05px;font-size:15.7px;line-height:19.7px;color:#000;right:1451.00px;transform-origin:100% 50%;transform:scaleX(0.8917);">2017.04.27 03:29:14</div>
<div class="t" style="top:318.05px;font-size:15.7px;line-height:19.7px;color:#000;right:1322.00px;transform-origin:100% 50%;transform:scaleX(0.9172);">sell</div>
<div class="t" style="top:318.05px;font-size:15.7px;line-height:19.7px;color:#000;right:1219.00px;transform-origin:100% 50%;transform:scaleX(0.9172);">0.11</div>
<div class="t" style="top:318.05px;font-size:15.7px;line-height:19.7px;color:#000;right:1090.00px;transform-origin:100% 50%;transform:scaleX(0.9172);">usdcad</div>
<div class="t" style="top:318.05px;font-size:15.7px;line-height:19.7px;color:#000;right:961.00px;transform-origin:100% 50%;transform:scaleX(0.9172);">1.36395</div>
<div class="t" style="top:318.05px;font-size:15.7px;line-height:19.7px;color:#000;right:832.00px;transform-origin:100% 50%;transform:scaleX(0.9172);">0.00000</div>
<div class="t" style="top:318.05px;font-size:15.7px;line-height:19.7px;color:#000;right:703.00px;transform-origin:100% 50%;transform:scaleX(0.9172);">1.36111</div>
<div class="t" style="top:318.05px;font-size:15.7px;line-height:19.7px;color:#000;right:418.00px;transform-origin:100% 50%;transform:scaleX(0.8917);">2017.04.27 04:34:48</div>
<div class="t" style="top:318.05px;font-size:15.7px;line-height:19.7px;color:#000;right:289.00px;transform-origin:100% 50%;transform:scaleX(0.9172);">1.36110</div>
<div class="t" style="top:318.05px;font-size:15.7px;line-height:19.7px;color:#000;right:160.00px;transform-origin:100% 50%;transform:scaleX(0.9172);">0.00</div>
<div class="t" style="top:318.05px;font-size:15.7px;line-height:19.7px;color:#000;right:10.00px;transform-origin:100% 50%;transform:scaleX(0.9172);">21.10</div>
<div class="r" style="left:21px;top:341px;width:1892px;height:24px;background:#ebebeb;"></div>
<div class="r" style="left:21px;top:365px;width:1892px;height:1px;background:#c8c8c8;"></div>
<div class="r" style="left:187px;top:341px;width:1px;height:24px;background:#c8c8c8;"></div>
<div class="r" style="left:472px;top:341px;width:1px;height:24px;background:#c8c8c8;"></div>
<div class="r" style="left:601px;top:341px;width:1px;height:24px;background:#c8c8c8;"></div>
<div class="r" style="left:704px;top:341px;width:1px;height:24px;background:#c8c8c8;"></div>
<div class="r" style="left:833px;top:341px;width:1px;height:24px;background:#c8c8c8;"></div>
<div class="r" style="left:962px;top:341px;width:1px;height:24px;background:#c8c8c8;"></div>
<div class="r" style="left:1091px;top:341px;width:1px;height:24px;background:#c8c8c8;"></div>
<div class="r" style="left:1220px;top:341px;width:1px;height:24px;background:#c8c8c8;"></div>
<div class="r" style="left:1505px;top:341px;width:1px;height:24px;background:#c8c8c8;"></div>
<div class="r" style="left:1634px;top:341px;width:1px;height:24px;background:#c8c8c8;"></div>
<div class="r" style="left:1763px;top:341px;width:1px;height:24px;background:#c8c8c8;"></div>
<div class="r" style="left:1093px;top:341px;width:126px;height:23px;background:#64f064;"></div>
<svg class="r" style="left:23px;top:343px;" width="21" height="22" viewBox="0 0 21 22"><defs><radialGradient id="rg" cx="0.35" cy="0.3" r="0.7"><stop offset="0" stop-color="#ff9a6a"/><stop offset="0.5" stop-color="#f04a12"/><stop offset="1" stop-color="#c83008"/></radialGradient></defs><path d="M2.2 3.5 Q2.2 1.8 3.9 1.8 H12 L16.2 6 V16.5 Q16.2 18.2 14.5 18.2 H3.9 Q2.2 18.2 2.2 16.5 Z" fill="#fdfdfd" stroke="#777" stroke-width="1.4"/><path d="M12 1.8 V6 H16.2" fill="#666" stroke="#666" stroke-width="1.2"/><circle cx="15" cy="15" r="4.6" fill="url(#rg)" stroke="#a83010" stroke-width="0.8"/></svg>
<div class="t" style="top:343.05px;font-size:15.7px;line-height:19.7px;color:#000;left:48px;transform-origin:0 50%;transform:scaleX(0.9172);">50517109</div>
<div class="t" style="top:343.05px;font-size:15.7px;line-height:19.7px;color:#000;right:1451.00px;transform-origin:100% 50%;transform:scaleX(0.8917);">2017.04.26 21:11:28</div>
<div class="t" style="top:343.05px;font-size:15.7px;line-height:19.7px;color:#000;right:1322.00px;transform-origin:100% 50%;transform:scaleX(0.9172);">sell</div>
<div class="t" style="top:343.05px;font-size:15.7px;line-height:19.7px;color:#000;right:1219.00px;transform-origin:100% 50%;transform:scaleX(0.9172);">0.14</div>
<div class="t" style="top:343.05px;font-size:15.7px;line-height:19.7px;color:#000;right:1090.00px;transform-origin:100% 50%;transform:scaleX(0.9172);">usdcad</div>
<div class="t" style="top:343.05px;font-size:15.7px;line-height:19.7px;color:#000;right:961.00px;transform-origin:100% 50%;transform:scaleX(0.9172);">1.36198</div>
<div class="t" style="top:343.05px;font-size:15.7px;line-height:19.7px;color:#000;right:832.00px;transform-origin:100% 50%;transform:scaleX(0.9172);">0.00000</div>
<div class="t" style="top:343.05px;font-size:15.7px;line-height:19.7px;color:#000;right:703.00px;transform-origin:100% 50%;transform:scaleX(0.9172);">1.36077</div>
<div class="t" style="top:343.05px;font-size:15.7px;line-height:19.7px;color:#000;right:418.00px;transform-origin:100% 50%;transform:scaleX(0.8917);">2017.04.27 04:34:50</div>
<div class="t" style="top:343.05px;font-size:15.7px;line-height:19.7px;color:#000;right:289.00px;transform-origin:100% 50%;transform:scaleX(0.9172);">1.36073</div>
<div class="t" style="top:343.05px;font-size:15.7px;line-height:19.7px;color:#000;right:160.00px;transform-origin:100% 50%;transform:scaleX(0.9172);">-0.34</div>
<div class="t" style="top:343.05px;font-size:15.7px;line-height:19.7px;color:#000;right:10.00px;transform-origin:100% 50%;transform:scaleX(0.9172);">11.78</div>
<div class="r" style="left:21px;top:390px;width:1892px;height:1px;background:#c8c8c8;"></div>
<div class="r" style="left:187px;top:366px;width:1px;height:24px;background:#c8c8c8;"></div>
<div class="r" style="left:472px;top:366px;width:1px;height:24px;background:#c8c8c8;"></div>
<div class="r" style="left:601px;top:366px;width:1px;height:24px;background:#c8c8c8;"></div>
<div class="r" style="left:704px;top:366px;width:1px;height:24px;background:#c8c8c8;"></div>
<div class="r" style="left:833px;top:366px;width:1px;height:24px;background:#c8c8c8;"></div>
<div class="r" style="left:962px;top:366px;width:1px;height:24px;background:#c8c8c8;"></div>
<div class="r" style="left:1091px;top:366px;width:1px;height:24px;background:#c8c8c8;"></div>
<div class="r" style="left:1220px;top:366px;width:1px;height:24px;background:#c8c8c8;"></div>
<div class="r" style="left:1505px;top:366px;width:1px;height:24px;background:#c8c8c8;"></div>
<div class="r" style="left:1634px;top:366px;width:1px;height:24px;background:#c8c8c8;"></div>
<div class="r" style="left:1763px;top:366px;width:1px;height:24px;background:#c8c8c8;"></div>
<div class="r" style="left:1093px;top:366px;width:126px;height:23px;background:#64f064;"></div>
<svg class="r" style="left:23px;top:368px;" width="21" height="22" viewBox="0 0 21 22"><defs><radialGradient id="rg" cx="0.35" cy="0.3" r="0.7"><stop offset="0" stop-color="#ff9a6a"/><stop offset="0.5" stop-color="#f04a12"/><stop offset="1" stop-color="#c83008"/></radialGradient></defs><path d="M2.2 3.5 Q2.2 1.8 3.9 1.8 H12 L16.2 6 V16.5 Q16.2 18.2 14.5 18.2 H3.9 Q2.2 18.2 2.2 16.5 Z" fill="#fdfdfd" stroke="#777" stroke-width="1.4"/><path d="M12 1.8 V6 H16.2" fill="#666" stroke="#666" stroke-width="1.2"/><circle cx="15" cy="15" r="4.6" fill="url(#rg)" stroke="#a83010" stroke-width="0.8"/></svg>
<div class="t" style="top:368.05px;font-size:15.7px;line-height:19.7px;color:#000;left:48px;transform-origin:0 50%;transform:scaleX(0.9172);">50515870</div>
<div class="t" style="top:368.05px;font-size:15.7px;line-height:19.7px;color:#000;right:1451.00px;transform-origin:100% 50%;transform:scaleX(0.8917);">2017.04.26 20:57:44</div>
<div class="t" style="top:368.05px;font-size:15.7px;line-height:19.7px;color:#000;right:1322.00px;transform-origin:100% 50%;transform:scaleX(0.9172);">sell</div>
<div class="t" style="top:368.05px;font-size:15.7px;line-height:19.7px;color:#000;right:1219.00px;transform-origin:100% 50%;transform:scaleX(0.9172);">0.13</div>
<div class="t" style="top:368.05px;font-size:15.7px;line-height:19.7px;color:#000;right:1090.00px;transform-origin:100% 50%;transform:scaleX(0.9172);">usdcad</div>
<div class="t" style="top:368.05px;font-size:15.7px;line-height:19.7px;color:#000;right:961.00px;transform-origin:100% 50%;transform:scaleX(0.9172);">1.36159</div>
<div class="t" style="top:368.05px;font-size:15.7px;line-height:19.7px;color:#000;right:832.00px;transform-origin:100% 50%;transform:scaleX(0.9172);">0.00000</div>
<div class="t" style="top:368.05px;font-size:15.7px;line-height:19.7px;color:#000;right:703.00px;transform-origin:100% 50%;transform:scaleX(0.9172);">1.36077</div>
<div class="t" style="top:368.05px;font-size:15.7px;line-height:19.7px;color:#000;right:418.00px;transform-origin:100% 50%;transform:scaleX(0.8917);">2017.04.27 04:34:50</div>
<div class="t" style="top:368.05px;font-size:15.7px;line-height:19.7px;color:#000;right:289.00px;transform-origin:100% 50%;transform:scaleX(0.9172);">1.36072</div>
<div class="t" style="top:368.05px;font-size:15.7px;line-height:19.7px;color:#000;right:160.00px;transform-origin:100% 50%;transform:scaleX(0.9172);">-0.32</div>
<div class="t" style="top:368.05px;font-size:15.7px;line-height:19.7px;color:#000;right:10.00px;transform-origin:100% 50%;transform:scaleX(0.9172);">7.61</div>
<div class="r" style="left:21px;top:391px;width:1892px;height:24px;background:#ebebeb;"></div>
<div class="r" style="left:21px;top:415px;width:1892px;height:1px;background:#c8c8c8;"></div>
<div class="r" style="left:187px;top:391px;width:1px;height:24px;background:#c8c8c8;"></div>
<div class="r" style="left:472px;top:391px;width:1px;height:24px;background:#c8c8c8;"></div>
<div class="r" style="left:601px;top:391px;width:1px;height:24px;background:#c8c8c8;"></div>
<div class="r" style="left:704px;top:391px;width:1px;height:24px;background:#c8c8c8;"></div>
<div class="r" style="left:833px;top:391px;width:1px;height:24px;background:#c8c8c8;"></div>
<div class="r" style="left:962px;top:391px;width:1px;height:24px;background:#c8c8c8;"></div>
<div class="r" style="left:1091px;top:391px;width:1px;height:24px;background:#c8c8c8;"></div>
<div class="r" style="left:1220px;top:391px;width:1px;height:24px;background:#c8c8c8;"></div>
<div class="r" style="left:1505px;top:391px;width:1px;height:24px;background:#c8c8c8;"></div>
<div class="r" style="left:1634px;top:391px;width:1px;height:24px;background:#c8c8c8;"></div>
<div class="r" style="left:1763px;top:391px;width:1px;height:24px;background:#c8c8c8;"></div>
<div class="r" style="left:1093px;top:391px;width:126px;height:23px;background:#64f064;"></div>
<svg class="r" style="left:23px;top:393px;" width="21" height="22" viewBox="0 0 21 22"><defs><radialGradient id="rg" cx="0.35" cy="0.3" r="0.7"><stop offset="0" stop-color="#ff9a6a"/><stop offset="0.5" stop-color="#f04a12"/><stop offset="1" stop-color="#c83008"/></radialGradient></defs><path d="M2.2 3.5 Q2.2 1.8 3.9 1.8 H12 L16.2 6 V16.5 Q16.2 18.2 14.5 18.2 H3.9 Q2.2 18.2 2.2 16.5 Z" fill="#fdfdfd" stroke="#777" stroke-width="1.4"/><path d="M12 1.8 V6 H16.2" fill="#666" stroke="#666" stroke-width="1.2"/><circle cx="15" cy="15" r="4.6" fill="url(#rg)" stroke="#a83010" stroke-width="0.8"/></svg>
<div class="t" style="top:393.05px;font-size:15.7px;line-height:19.7px;color:#000;left:48px;transform-origin:0 50%;transform:scaleX(0.9172);">50515223</div>
<div class="t" style="top:393.05px;font-size:15.7px;line-height:19.7px;color:#000;right:1451.00px;transform-origin:100% 50%;transform:scaleX(0.8917);">2017.04.26 20:49:08</div>
<div class="t" style="top:393.05px;font-size:15.7px;line-height:19.7px;color:#000;right:1322.00px;transform-origin:100% 50%;transform:scaleX(0.9172);">sell</div>
<div class="t" style="top:393.05px;font-size:15.7px;line-height:19.7px;color:#000;right:1219.00px;transform-origin:100% 50%;transform:scaleX(0.9172);">0.17</div>
<div class="t" style="top:393.05px;font-size:15.7px;line-height:19.7px;color:#000;right:1090.00px;transform-origin:100% 50%;transform:scaleX(0.9172);">usdcad</div>
<div class="t" style="top:393.05px;font-size:15.7px;line-height:19.7px;color:#000;right:961.00px;transform-origin:100% 50%;transform:scaleX(0.9172);">1.36136</div>
<div class="t" style="top:393.05px;font-size:15.7px;line-height:19.7px;color:#000;right:832.00px;transform-origin:100% 50%;transform:scaleX(0.9172);">0.00000</div>
<div class="t" style="top:393.05px;font-size:15.7px;line-height:19.7px;color:#000;right:703.00px;transform-origin:100% 50%;transform:scaleX(0.9172);">1.36077</div>
<div class="t" style="top:393.05px;font-size:15.7px;line-height:19.7px;color:#000;right:418.00px;transform-origin:100% 50%;transform:scaleX(0.8917);">2017.04.27 04:34:50</div>
<div class="t" style="top:393.05px;font-size:15.7px;line-height:19.7px;color:#000;right:289.00px;transform-origin:100% 50%;transform:scaleX(0.9172);">1.36072</div>
<div class="t" style="top:393.05px;font-size:15.7px;line-height:19.7px;color:#000;right:160.00px;transform-origin:100% 50%;transform:scaleX(0.9172);">-0.41</div>
<div class="t" style="top:393.05px;font-size:15.7px;line-height:19.7px;color:#000;right:10.00px;transform-origin:100% 50%;transform:scaleX(0.9172);">7.32</div>
<div class="r" style="left:21px;top:440px;width:1892px;height:1px;background:#c8c8c8;"></div>
<div class="r" style="left:187px;top:416px;width:1px;height:24px;background:#c8c8c8;"></div>
<div class="r" style="left:472px;top:416px;width:1px;height:24px;background:#c8c8c8;"></div>
<div class="r" style="left:601px;top:416px;width:1px;height:24px;background:#c8c8c8;"></div>
<div class="r" style="left:704px;top:416px;width:1px;height:24px;background:#c8c8c8;"></div>
<div class="r" style="left:833px;top:416px;width:1px;height:24px;background:#c8c8c8;"></div>
<div class="r" style="left:962px;top:416px;width:1px;height:24px;background:#c8c8c8;"></div>
<div class="r" style="left:1091px;top:416px;width:1px;height:24px;background:#c8c8c8;"></div>
<div class="r" style="left:1220px;top:416px;width:1px;height:24px;background:#c8c8c8;"></div>
<div class="r" style="left:1505px;top:416px;width:1px;height:24px;background:#c8c8c8;"></div>
<div class="r" style="left:1634px;top:416px;width:1px;height:24px;background:#c8c8c8;"></div>
<div class="r" style="left:1763px;top:416px;width:1px;height:24px;background:#c8c8c8;"></div>
<div class="r" style="left:1093px;top:416px;width:126px;height:23px;background:#64f064;"></div>
<svg class="r" style="left:23px;top:418px;" width="21" height="22" viewBox="0 0 21 22"><defs><radialGradient id="rg" cx="0.35" cy="0.3" r="0.7"><stop offset="0" stop-color="#ff9a6a"/><stop offset="0.5" stop-color="#f04a12"/><stop offset="1" stop-color="#c83008"/></radialGradient></defs><path d="M2.2 3.5 Q2.2 1.8 3.9 1.8 H12 L16.2 6 V16.5 Q16.2 18.2 14.5 18.2 H3.9 Q2.2 18.2 2.2 16.5 Z" fill="#fdfdfd" stroke="#777" stroke-width="1.4"/><path d="M12 1.8 V6 H16.2" fill="#666" stroke="#666" stroke-width="1.2"/><circle cx="15" cy="15" r="4.6" fill="url(#rg)" stroke="#a83010" stroke-width="0.8"/></svg>
<div class="t" style="top:418.05px;font-size:15.7px;line-height:19.7px;color:#000;left:48px;transform-origin:0 50%;transform:scaleX(0.9172);">50515673</div>
<div class="t" style="top:418.05px;font-size:15.7px;line-height:19.7px;color:#000;right:1451.00px;transform-origin:100% 50%;transform:scaleX(0.8917);">2017.04.26 20:54:50</div>
<div class="t" style="top:418.05px;font-size:15.7px;line-height:19.7px;color:#000;right:1322.00px;transform-origin:100% 50%;transform:scaleX(0.9172);">sell</div>
<div class="t" style="top:418.05px;font-size:15.7px;line-height:19.7px;color:#000;right:1219.00px;transform-origin:100% 50%;transform:scaleX(0.9172);">0.27</div>
<div class="t" style="top:418.05px;font-size:15.7px;line-height:19.7px;color:#000;right:1090.00px;transform-origin:100% 50%;transform:scaleX(0.9172);">usdcad</div>
<div class="t" style="top:418.05px;font-size:15.7px;line-height:19.7px;color:#000;right:961.00px;transform-origin:100% 50%;transform:scaleX(0.9172);">1.36178</div>
<div class="t" style="top:418.05px;font-size:15.7px;line-height:19.7px;color:#000;right:832.00px;transform-origin:100% 50%;transform:scaleX(0.9172);">0.00000</div>
<div class="t" style="top:418.05px;font-size:15.7px;line-height:19.7px;color:#000;right:703.00px;transform-origin:100% 50%;transform:scaleX(0.9172);">1.36077</div>
<div class="t" style="top:418.05px;font-size:15.7px;line-height:19.7px;color:#000;right:418.00px;transform-origin:100% 50%;transform:scaleX(0.8917);">2017.04.27 04:34:50</div>
<div class="t" style="top:418.05px;font-size:15.7px;line-height:19.7px;color:#000;right:289.00px;transform-origin:100% 50%;transform:scaleX(0.9172);">1.36073</div>
<div class="t" style="top:418.05px;font-size:15.7px;line-height:19.7px;color:#000;right:160.00px;transform-origin:100% 50%;transform:scaleX(0.9172);">-0.65</div>
<div class="t" style="top:418.05px;font-size:15.7px;line-height:19.7px;color:#000;right:10.00px;transform-origin:100% 50%;transform:scaleX(0.9172);">19.09</div>
<div class="r" style="left:21px;top:441px;width:1892px;height:24px;background:#ebebeb;"></div>
<div class="r" style="left:21px;top:465px;width:1892px;height:1px;background:#c8c8c8;"></div>
<div class="r" style="left:187px;top:441px;width:1px;height:24px;background:#c8c8c8;"></div>
<div class="r" style="left:472px;top:441px;width:1px;height:24px;background:#c8c8c8;"></div>
<div class="r" style="left:601px;top:441px;width:1px;height:24px;background:#c8c8c8;"></div>
<div class="r" style="left:704px;top:441px;width:1px;height:24px;background:#c8c8c8;"></div>
<div class="r" style="left:833px;top:441px;width:1px;height:24px;background:#c8c8c8;"></div>
<div class="r" style="left:962px;top:441px;width:1px;height:24px;background:#c8c8c8;"></div>
<div class="r" style="left:1091px;top:441px;width:1px;height:24px;background:#c8c8c8;"></div>
<div class="r" style="left:1220px;top:441px;width:1px;height:24px;background:#c8c8c8;"></div>
<div class="r" style="left:1505px;top:441px;width:1px;height:24px;background:#c8c8c8;"></div>
<div class="r" style="left:1634px;top:441px;width:1px;height:24px;background:#c8c8c8;"></div>
<div class="r" style="left:1763px;top:441px;width:1px;height:24px;background:#c8c8c8;"></div>
<div class="r" style="left:1093px;top:441px;width:126px;height:23px;background:#64f064;"></div>
<svg class="r" style="left:23px;top:443px;" width="21" height="22" viewBox="0 0 21 22"><defs><radialGradient id="rg" cx="0.35" cy="0.3" r="0.7"><stop offset="0" stop-color="#ff9a6a"/><stop offset="0.5" stop-color="#f04a12"/><stop offset="1" stop-color="#c83008"/></radialGradient></defs><path d="M2.2 3.5 Q2.2 1.8 3.9 1.8 H12 L16.2 6 V16.5 Q16.2 18.2 14.5 18.2 H3.9 Q2.2 18.2 2.2 16.5 Z" fill="#fdfdfd" stroke="#777" stroke-width="1.4"/><path d="M12 1.8 V6 H16.2" fill="#666" stroke="#666" stroke-width="1.2"/><circle cx="15" cy="15" r="4.6" fill="url(#rg)" stroke="#a83010" stroke-width="0.8"/></svg>
<div class="t" style="top:443.05px;font-size:15.7px;line-height:19.7px;color:#000;left:48px;transform-origin:0 50%;transform:scaleX(0.9172);">50514722</div>
<div class="t" style="top:443.05px;font-size:15.7px;line-height:19.7px;color:#000;right:1451.00px;transform-origin:100% 50%;transform:scaleX(0.8917);">2017.04.26 20:44:59</div>
<div class="t" style="top:443.05px;font-size:15.7px;line-height:19.7px;color:#000;right:1322.00px;transform-origin:100% 50%;transform:scaleX(0.9172);">sell</div>
<div class="t" style="top:443.05px;font-size:15.7px;line-height:19.7px;color:#000;right:1219.00px;transform-origin:100% 50%;transform:scaleX(0.9172);">0.07</div>
<div class="t" style="top:443.05px;font-size:15.7px;line-height:19.7px;color:#000;right:1090.00px;transform-origin:100% 50%;transform:scaleX(0.9172);">usdcad</div>
<div class="t" style="top:443.05px;font-size:15.7px;line-height:19.7px;color:#000;right:961.00px;transform-origin:100% 50%;transform:scaleX(0.9172);">1.36098</div>
<div class="t" style="top:443.05px;font-size:15.7px;line-height:19.7px;color:#000;right:832.00px;transform-origin:100% 50%;transform:scaleX(0.9172);">0.00000</div>
<div class="t" style="top:443.05px;font-size:15.7px;line-height:19.7px;color:#000;right:703.00px;transform-origin:100% 50%;transform:scaleX(0.9172);">1.36000</div>
<div class="t" style="top:443.05px;font-size:15.7px;line-height:19.7px;color:#000;right:418.00px;transform-origin:100% 50%;transform:scaleX(0.8917);">2017.04.27 04:34:56</div>
<div class="t" style="top:443.05px;font-size:15.7px;line-height:19.7px;color:#000;right:289.00px;transform-origin:100% 50%;transform:scaleX(0.9172);">1.35989</div>
<div class="t" style="top:443.05px;font-size:15.7px;line-height:19.7px;color:#000;right:160.00px;transform-origin:100% 50%;transform:scaleX(0.9172);">-0.17</div>
<div class="t" style="top:443.05px;font-size:15.7px;line-height:19.7px;color:#000;right:10.00px;transform-origin:100% 50%;transform:scaleX(0.9172);">5.14</div>
<div class="r" style="left:21px;top:490px;width:1892px;height:1px;background:#c8c8c8;"></div>
<div class="r" style="left:187px;top:466px;width:1px;height:24px;background:#c8c8c8;"></div>
<div class="r" style="left:472px;top:466px;width:1px;height:24px;background:#c8c8c8;"></div>
<div class="r" style="left:601px;top:466px;width:1px;height:24px;background:#c8c8c8;"></div>
<div class="r" style="left:704px;top:466px;width:1px;height:24px;background:#c8c8c8;"></div>
<div class="r" style="left:833px;top:466px;width:1px;height:24px;background:#c8c8c8;"></div>
<div class="r" style="left:962px;top:466px;width:1px;height:24px;background:#c8c8c8;"></div>
<div class="r" style="left:1091px;top:466px;width:1px;height:24px;background:#c8c8c8;"></div>
<div class="r" style="left:1220px;top:466px;width:1px;height:24px;background:#c8c8c8;"></div>
<div class="r" style="left:1505px;top:466px;width:1px;height:24px;background:#c8c8c8;"></div>
<div class="r" style="left:1634px;top:466px;width:1px;height:24px;background:#c8c8c8;"></div>
<div class="r" style="left:1763px;top:466px;width:1px;height:24px;background:#c8c8c8;"></div>
<div class="r" style="left:1093px;top:466px;width:126px;height:23px;background:#64f064;"></div>
<svg class="r" style="left:23px;top:468px;" width="21" height="22" viewBox="0 0 21 22"><defs><radialGradient id="rg" cx="0.35" cy="0.3" r="0.7"><stop offset="0" stop-color="#ff9a6a"/><stop offset="0.5" stop-color="#f04a12"/><stop offset="1" stop-color="#c83008"/></radialGradient></defs><path d="M2.2 3.5 Q2.2 1.8 3.9 1.8 H12 L16.2 6 V16.5 Q16.2 18.2 14.5 18.2 H3.9 Q2.2 18.2 2.2 16.5 Z" fill="#fdfdfd" stroke="#777" stroke-width="1.4"/><path d="M12 1.8 V6 H16.2" fill="#666" stroke="#666" stroke-width="1.2"/><circle cx="15" cy="15" r="4.6" fill="url(#rg)" stroke="#a83010" stroke-width="0.8"/></svg>
<div class="t" style="top:468.05px;font-size:15.7px;line-height:19.7px;color:#000;left:48px;transform-origin:0 50%;transform:scaleX(0.9172);">50513933</div>
<div class="t" style="top:468.05px;font-size:15.7px;line-height:19.7px;color:#000;right:1451.00px;transform-origin:100% 50%;transform:scaleX(0.8917);">2017.04.26 20:35:57</div>
<div class="t" style="top:468.05px;font-size:15.7px;line-height:19.7px;color:#000;right:1322.00px;transform-origin:100% 50%;transform:scaleX(0.9172);">sell</div>
<div class="t" style="top:468.05px;font-size:15.7px;line-height:19.7px;color:#000;right:1219.00px;transform-origin:100% 50%;transform:scaleX(0.9172);">0.07</div>
<div class="t" style="top:468.05px;font-size:15.7px;line-height:19.7px;color:#000;right:1090.00px;transform-origin:100% 50%;transform:scaleX(0.9172);">usdcad</div>
<div class="t" style="top:468.05px;font-size:15.7px;line-height:19.7px;color:#000;right:961.00px;transform-origin:100% 50%;transform:scaleX(0.9172);">1.36030</div>
<div class="t" style="top:468.05px;font-size:15.7px;line-height:19.7px;color:#000;right:832.00px;transform-origin:100% 50%;transform:scaleX(0.9172);">0.00000</div>
<div class="t" style="top:468.05px;font-size:15.7px;line-height:19.7px;color:#000;right:703.00px;transform-origin:100% 50%;transform:scaleX(0.9172);">1.35964</div>
<div class="t" style="top:468.05px;font-size:15.7px;line-height:19.7px;color:#000;right:418.00px;transform-origin:100% 50%;transform:scaleX(0.8917);">2017.04.27 04:35:02</div>
<div class="t" style="top:468.05px;font-size:15.7px;line-height:19.7px;color:#000;right:289.00px;transform-origin:100% 50%;transform:scaleX(0.9172);">1.35953</div>
<div class="t" style="top:468.05px;font-size:15.7px;line-height:19.7px;color:#000;right:160.00px;transform-origin:100% 50%;transform:scaleX(0.9172);">-0.17</div>
<div class="t" style="top:468.05px;font-size:15.7px;line-height:19.7px;color:#000;right:10.00px;transform-origin:100% 50%;transform:scaleX(0.9172);">3.63</div>
<div class="r" style="left:21px;top:491px;width:1892px;height:24px;background:#ebebeb;"></div>
<div class="r" style="left:21px;top:515px;width:1892px;height:1px;background:#c8c8c8;"></div>
<div class="r" style="left:187px;top:491px;width:1px;height:24px;background:#c8c8c8;"></div>
<div class="r" style="left:472px;top:491px;width:1px;height:24px;background:#c8c8c8;"></div>
<div class="r" style="left:601px;top:491px;width:1px;height:24px;background:#c8c8c8;"></div>
<div class="r" style="left:704px;top:491px;width:1px;height:24px;background:#c8c8c8;"></div>
<div class="r" style="left:833px;top:491px;width:1px;height:24px;background:#c8c8c8;"></div>
<div class="r" style="left:962px;top:491px;width:1px;height:24px;background:#c8c8c8;"></div>
<div class="r" style="left:1091px;top:491px;width:1px;height:24px;background:#c8c8c8;"></div>
<div class="r" style="left:1220px;top:491px;width:1px;height:24px;background:#c8c8c8;"></div>
<div class="r" style="left:1505px;top:491px;width:1px;height:24px;background:#c8c8c8;"></div>
<div class="r" style="left:1634px;top:491px;width:1px;height:24px;background:#c8c8c8;"></div>
<div class="r" style="left:1763px;top:491px;width:1px;height:24px;background:#c8c8c8;"></div>
<div class="r" style="left:1093px;top:491px;width:126px;height:23px;background:#64f064;"></div>
<svg class="r" style="left:23px;top:493px;" width="21" height="22" viewBox="0 0 21 22"><defs><radialGradient id="rg" cx="0.35" cy="0.3" r="0.7"><stop offset="0" stop-color="#ff9a6a"/><stop offset="0.5" stop-color="#f04a12"/><stop offset="1" stop-color="#c83008"/></radialGradient></defs><path d="M2.2 3.5 Q2.2 1.8 3.9 1.8 H12 L16.2 6 V16.5 Q16.2 18.2 14.5 18.2 H3.9 Q2.2 18.2 2.2 16.5 Z" fill="#fdfdfd" stroke="#777" stroke-width="1.4"/><path d="M12 1.8 V6 H16.2" fill="#666" stroke="#666" stroke-width="1.2"/><circle cx="15" cy="15" r="4.6" fill="url(#rg)" stroke="#a83010" stroke-width="0.8"/></svg>
<div class="t" style="top:493.05px;font-size:15.7px;line-height:19.7px;color:#000;left:48px;transform-origin:0 50%;transform:scaleX(0.9172);">50503861</div>
<div class="t" style="top:493.05px;font-size:15.7px;line-height:19.7px;color:#000;right:1451.00px;transform-origin:100% 50%;transform:scaleX(0.8917);">2017.04.26 18:09:24</div>
<div class="t" style="top:493.05px;font-size:15.7px;line-height:19.7px;color:#000;right:1322.00px;transform-origin:100% 50%;transform:scaleX(0.9172);">sell</div>
<div class="t" style="top:493.05px;font-size:15.7px;line-height:19.7px;color:#000;right:1219.00px;transform-origin:100% 50%;transform:scaleX(0.9172);">0.18</div>
<div class="t" style="top:493.05px;font-size:15.7px;line-height:19.7px;color:#000;right:1090.00px;transform-origin:100% 50%;transform:scaleX(0.9172);">usdcad</div>
<div class="t" style="top:493.05px;font-size:15.7px;line-height:19.7px;color:#000;right:961.00px;transform-origin:100% 50%;transform:scaleX(0.9172);">1.35908</div>
<div class="t" style="top:493.05px;font-size:15.7px;line-height:19.7px;color:#000;right:832.00px;transform-origin:100% 50%;transform:scaleX(0.9172);">0.00000</div>
<div class="t" style="top:493.05px;font-size:15.7px;line-height:19.7px;color:#000;right:703.00px;transform-origin:100% 50%;transform:scaleX(0.9172);">1.35743</div>
<div class="t" style="top:493.05px;font-size:15.7px;line-height:19.7px;color:#000;right:418.00px;transform-origin:100% 50%;transform:scaleX(0.8917);">2017.04.27 04:36:16</div>
<div class="t" style="top:493.05px;font-size:15.7px;line-height:19.7px;color:#000;right:289.00px;transform-origin:100% 50%;transform:scaleX(0.9172);">1.35735</div>
<div class="t" style="top:493.05px;font-size:15.7px;line-height:19.7px;color:#000;right:160.00px;transform-origin:100% 50%;transform:scaleX(0.9172);">-0.44</div>
<div class="t" style="top:493.05px;font-size:15.7px;line-height:19.7px;color:#000;right:10.00px;transform-origin:100% 50%;transform:scaleX(0.9172);">21.00</div>
<div class="r" style="left:21px;top:515px;width:1892px;height:25px;background:#0078d7;"></div>
<div class="r" style="left:21px;top:540px;width:1892px;height:1px;background:#c8c8c8;"></div>
<div class="r" style="left:187px;top:516px;width:1px;height:24px;background:#c8c8c8;"></div>
<div class="r" style="left:472px;top:516px;width:1px;height:24px;background:#c8c8c8;"></div>
<div class="r" style="left:601px;top:516px;width:1px;height:24px;background:#c8c8c8;"></div>
<div class="r" style="left:704px;top:516px;width:1px;height:24px;background:#c8c8c8;"></div>
<div class="r" style="left:833px;top:516px;width:1px;height:24px;background:#c8c8c8;"></div>
<div class="r" style="left:962px;top:516px;width:1px;height:24px;background:#c8c8c8;"></div>
<div class="r" style="left:1091px;top:516px;width:1px;height:24px;background:#c8c8c8;"></div>
<div class="r" style="left:1220px;top:516px;width:1px;height:24px;background:#c8c8c8;"></div>
<div class="r" style="left:1505px;top:516px;width:1px;height:24px;background:#c8c8c8;"></div>
<div class="r" style="left:1634px;top:516px;width:1px;height:24px;background:#c8c8c8;"></div>
<div class="r" style="left:1763px;top:516px;width:1px;height:24px;background:#c8c8c8;"></div>
<div class="r" style="left:1093px;top:516px;width:126px;height:23px;background:#64f064;"></div>
<svg class="r" style="left:23px;top:518px;" width="21" height="22" viewBox="0 0 21 22"><defs><radialGradient id="rg" cx="0.35" cy="0.3" r="0.7"><stop offset="0" stop-color="#ff9a6a"/><stop offset="0.5" stop-color="#f04a12"/><stop offset="1" stop-color="#c83008"/></radialGradient></defs><path d="M2.2 3.5 Q2.2 1.8 3.9 1.8 H12 L16.2 6 V16.5 Q16.2 18.2 14.5 18.2 H3.9 Q2.2 18.2 2.2 16.5 Z" fill="#fdfdfd" stroke="#777" stroke-width="1.4"/><path d="M12 1.8 V6 H16.2" fill="#666" stroke="#666" stroke-width="1.2"/><circle cx="15" cy="15" r="4.6" fill="url(#rg)" stroke="#a83010" stroke-width="0.8"/></svg>
<div class="t" style="top:518.05px;font-size:15.7px;line-height:19.7px;color:#fff;left:48px;transform-origin:0 50%;transform:scaleX(0.9172);">50501867</div>
<div class="t" style="top:518.05px;font-size:15.7px;line-height:19.7px;color:#fff;right:1451.00px;transform-origin:100% 50%;transform:scaleX(0.8917);">2017.04.26 17:46:09</div>
<div class="t" style="top:518.05px;font-size:15.7px;line-height:19.7px;color:#fff;right:1322.00px;transform-origin:100% 50%;transform:scaleX(0.9172);">sell</div>
<div class="t" style="top:518.05px;font-size:15.7px;line-height:19.7px;color:#fff;right:1219.00px;transform-origin:100% 50%;transform:scaleX(0.9172);">0.08</div>
<div class="t" style="top:518.05px;font-size:15.7px;line-height:19.7px;color:#fff;right:1090.00px;transform-origin:100% 50%;transform:scaleX(0.9172);">usdcad</div>
<div class="t" style="top:518.05px;font-size:15.7px;line-height:19.7px;color:#fff;right:961.00px;transform-origin:100% 50%;transform:scaleX(0.9172);">1.35909</div>
<div class="t" style="top:518.05px;font-size:15.7px;line-height:19.7px;color:#fff;right:832.00px;transform-origin:100% 50%;transform:scaleX(0.9172);">0.00000</div>
<div class="t" style="top:518.05px;font-size:15.7px;line-height:19.7px;color:#000;right:703.00px;transform-origin:100% 50%;transform:scaleX(0.9172);">1.35712</div>
<div class="t" style="top:518.05px;font-size:15.7px;line-height:19.7px;color:#fff;right:418.00px;transform-origin:100% 50%;transform:scaleX(0.8917);">2017.04.27 04:36:50</div>
<div class="t" style="top:518.05px;font-size:15.7px;line-height:19.7px;color:#fff;right:289.00px;transform-origin:100% 50%;transform:scaleX(0.9172);">1.35712</div>
<div class="t" style="top:518.05px;font-size:15.7px;line-height:19.7px;color:#fff;right:160.00px;transform-origin:100% 50%;transform:scaleX(0.9172);">-0.19</div>
<div class="t" style="top:518.05px;font-size:15.7px;line-height:19.7px;color:#fff;right:10.00px;transform-origin:100% 50%;transform:scaleX(0.9172);">10.63</div>
<div class="r" style="left:21px;top:541px;width:1892px;height:24px;background:#ebebeb;"></div>
<div class="r" style="left:21px;top:565px;width:1892px;height:1px;background:#c8c8c8;"></div>
<div class="r" style="left:187px;top:541px;width:1px;height:24px;background:#c8c8c8;"></div>
<div class="r" style="left:472px;top:541px;width:1px;height:24px;background:#c8c8c8;"></div>
<div class="r" style="left:601px;top:541px;width:1px;height:24px;background:#c8c8c8;"></div>
<div class="r" style="left:704px;top:541px;width:1px;height:24px;background:#c8c8c8;"></div>
<div class="r" style="left:833px;top:541px;width:1px;height:24px;background:#c8c8c8;"></div>
<div class="r" style="left:962px;top:541px;width:1px;height:24px;background:#c8c8c8;"></div>
<div class="r" style="left:1091px;top:541px;width:1px;height:24px;background:#c8c8c8;"></div>
<div class="r" style="left:1220px;top:541px;width:1px;height:24px;background:#c8c8c8;"></div>
<div class="r" style="left:1505px;top:541px;width:1px;height:24px;background:#c8c8c8;"></div>
<div class="r" style="left:1634px;top:541px;width:1px;height:24px;background:#c8c8c8;"></div>
<div class="r" style="left:1763px;top:541px;width:1px;height:24px;background:#c8c8c8;"></div>
<svg class="r" style="left:23px;top:543px;" width="21" height="22" viewBox="0 0 21 22"><defs><radialGradient id="rg" cx="0.35" cy="0.3" r="0.7"><stop offset="0" stop-color="#ff9a6a"/><stop offset="0.5" stop-color="#f04a12"/><stop offset="1" stop-color="#c83008"/></radialGradient></defs><path d="M2.2 3.5 Q2.2 1.8 3.9 1.8 H12 L16.2 6 V16.5 Q16.2 18.2 14.5 18.2 H3.9 Q2.2 18.2 2.2 16.5 Z" fill="#fdfdfd" stroke="#777" stroke-width="1.4"/><path d="M12 1.8 V6 H16.2" fill="#666" stroke="#666" stroke-width="1.2"/><circle cx="15" cy="15" r="4.6" fill="url(#rg)" stroke="#a83010" stroke-width="0.8"/></svg>
<div class="t" style="top:543.05px;font-size:15.7px;line-height:19.7px;color:#000;left:48px;transform-origin:0 50%;transform:scaleX(0.9172);">50525193</div>
<div class="t" style="top:543.05px;font-size:15.7px;line-height:19.7px;color:#000;right:1451.00px;transform-origin:100% 50%;transform:scaleX(0.8917);">2017.04.27 02:26:47</div>
<div class="t" style="top:543.05px;font-size:15.7px;line-height:19.7px;color:#000;right:1322.00px;transform-origin:100% 50%;transform:scaleX(0.9172);">sell</div>
<div class="t" style="top:543.05px;font-size:15.7px;line-height:19.7px;color:#000;right:1219.00px;transform-origin:100% 50%;transform:scaleX(0.9172);">0.21</div>
<div class="t" style="top:543.05px;font-size:15.7px;line-height:19.7px;color:#000;right:1090.00px;transform-origin:100% 50%;transform:scaleX(0.9172);">usdcad</div>
<div class="t" style="top:543.05px;font-size:15.7px;line-height:19.7px;color:#000;right:961.00px;transform-origin:100% 50%;transform:scaleX(0.9172);">1.36287</div>
<div class="t" style="top:543.05px;font-size:15.7px;line-height:19.7px;color:#000;right:832.00px;transform-origin:100% 50%;transform:scaleX(0.9172);">0.00000</div>
<div class="t" style="top:543.05px;font-size:15.7px;line-height:19.7px;color:#000;right:703.00px;transform-origin:100% 50%;transform:scaleX(0.9172);">0.00000</div>
<div class="t" style="top:543.05px;font-size:15.7px;line-height:19.7px;color:#000;right:418.00px;transform-origin:100% 50%;transform:scaleX(0.8917);">2017.04.27 04:48:52</div>
<div class="t" style="top:543.05px;font-size:15.7px;line-height:19.7px;color:#000;right:289.00px;transform-origin:100% 50%;transform:scaleX(0.9172);">1.35676</div>
<div class="t" style="top:543.05px;font-size:15.7px;line-height:19.7px;color:#000;right:160.00px;transform-origin:100% 50%;transform:scaleX(0.9172);">0.00</div>
<div class="t" style="top:543.05px;font-size:15.7px;line-height:19.7px;color:#000;right:10.00px;transform-origin:100% 50%;transform:scaleX(0.9172);">86.66</div>
<div class="r" style="left:21px;top:590px;width:1892px;height:1px;background:#c8c8c8;"></div>
<div class="r" style="left:187px;top:566px;width:1px;height:24px;background:#c8c8c8;"></div>
<div class="r" style="left:472px;top:566px;width:1px;height:24px;background:#c8c8c8;"></div>
<div class="r" style="left:601px;top:566px;width:1px;height:24px;background:#c8c8c8;"></div>
<div class="r" style="left:704px;top:566px;width:1px;height:24px;background:#c8c8c8;"></div>
<div class="r" style="left:833px;top:566px;width:1px;height:24px;background:#c8c8c8;"></div>
<div class="r" style="left:962px;top:566px;width:1px;height:24px;background:#c8c8c8;"></div>
<div class="r" style="left:1091px;top:566px;width:1px;height:24px;background:#c8c8c8;"></div>
<div class="r" style="left:1220px;top:566px;width:1px;height:24px;background:#c8c8c8;"></div>
<div class="r" style="left:1505px;top:566px;width:1px;height:24px;background:#c8c8c8;"></div>
<div class="r" style="left:1634px;top:566px;width:1px;height:24px;background:#c8c8c8;"></div>
<div class="r" style="left:1763px;top:566px;width:1px;height:24px;background:#c8c8c8;"></div>
<svg class="r" style="left:23px;top:568px;" width="21" height="22" viewBox="0 0 21 22"><defs><radialGradient id="rg" cx="0.35" cy="0.3" r="0.7"><stop offset="0" stop-color="#ff9a6a"/><stop offset="0.5" stop-color="#f04a12"/><stop offset="1" stop-color="#c83008"/></radialGradient></defs><path d="M2.2 3.5 Q2.2 1.8 3.9 1.8 H12 L16.2 6 V16.5 Q16.2 18.2 14.5 18.2 H3.9 Q2.2 18.2 2.2 16.5 Z" fill="#fdfdfd" stroke="#777" stroke-width="1.4"/><path d="M12 1.8 V6 H16.2" fill="#666" stroke="#666" stroke-width="1.2"/><circle cx="15" cy="15" r="4.6" fill="url(#rg)" stroke="#a83010" stroke-width="0.8"/></svg>
<div class="t" style="top:568.05px;font-size:15.7px;line-height:19.7px;color:#000;left:48px;transform-origin:0 50%;transform:scaleX(0.9172);">50452939</div>
<div class="t" style="top:568.05px;font-size:15.7px;line-height:19.7px;color:#000;right:1451.00px;transform-origin:100% 50%;transform:scaleX(0.8917);">2017.04.25 14:12:43</div>
<div class="t" style="top:568.05px;font-size:15.7px;line-height:19.7px;color:#000;right:1322.00px;transform-origin:100% 50%;transform:scaleX(0.9172);">sell</div>
<div class="t" style="top:568.05px;font-size:15.7px;line-height:19.7px;color:#000;right:1219.00px;transform-origin:100% 50%;transform:scaleX(0.9172);">0.12</div>
<div class="t" style="top:568.05px;font-size:15.7px;line-height:19.7px;color:#000;right:1090.00px;transform-origin:100% 50%;transform:scaleX(0.9172);">usdcad</div>
<div class="t" style="top:568.05px;font-size:15.7px;line-height:19.7px;color:#000;right:961.00px;transform-origin:100% 50%;transform:scaleX(0.9172);">1.35832</div>
<div class="t" style="top:568.05px;font-size:15.7px;line-height:19.7px;color:#000;right:832.00px;transform-origin:100% 50%;transform:scaleX(0.9172);">0.00000</div>
<div class="t" style="top:568.05px;font-size:15.7px;line-height:19.7px;color:#000;right:703.00px;transform-origin:100% 50%;transform:scaleX(0.9172);">1.35058</div>
<div class="t" style="top:568.05px;font-size:15.7px;line-height:19.7px;color:#000;right:418.00px;transform-origin:100% 50%;transform:scaleX(0.8917);">2017.04.27 04:48:58</div>
<div class="t" style="top:568.05px;font-size:15.7px;line-height:19.7px;color:#000;right:289.00px;transform-origin:100% 50%;transform:scaleX(0.9172);">1.35676</div>
<div class="t" style="top:568.05px;font-size:15.7px;line-height:19.7px;color:#000;right:160.00px;transform-origin:100% 50%;transform:scaleX(0.9172);">-0.39</div>
<div class="t" style="top:568.05px;font-size:15.7px;line-height:19.7px;color:#000;right:10.00px;transform-origin:100% 50%;transform:scaleX(0.9172);">12.64</div>
<div class="r" style="left:21px;top:591px;width:1892px;height:24px;background:#ebebeb;"></div>
<div class="r" style="left:21px;top:615px;width:1892px;height:1px;background:#c8c8c8;"></div>
<div class="r" style="left:187px;top:591px;width:1px;height:24px;background:#c8c8c8;"></div>
<div class="r" style="left:472px;top:591px;width:1px;height:24px;background:#c8c8c8;"></div>
<div class="r" style="left:601px;top:591px;width:1px;height:24px;background:#c8c8c8;"></div>
<div class="r" style="left:704px;top:591px;width:1px;height:24px;background:#c8c8c8;"></div>
<div class="r" style="left:833px;top:591px;width:1px;height:24px;background:#c8c8c8;"></div>
<div class="r" style="left:962px;top:591px;width:1px;height:24px;background:#c8c8c8;"></div>
<div class="r" style="left:1091px;top:591px;width:1px;height:24px;background:#c8c8c8;"></div>
<div class="r" style="left:1220px;top:591px;width:1px;height:24px;background:#c8c8c8;"></div>
<div class="r" style="left:1505px;top:591px;width:1px;height:24px;background:#c8c8c8;"></div>
<div class="r" style="left:1634px;top:591px;width:1px;height:24px;background:#c8c8c8;"></div>
<div class="r" style="left:1763px;top:591px;width:1px;height:24px;background:#c8c8c8;"></div>
<svg class="r" style="left:23px;top:593px;" width="21" height="22" viewBox="0 0 21 22"><defs><radialGradient id="rg" cx="0.35" cy="0.3" r="0.7"><stop offset="0" stop-color="#ff9a6a"/><stop offset="0.5" stop-color="#f04a12"/><stop offset="1" stop-color="#c83008"/></radialGradient></defs><path d="M2.2 3.5 Q2.2 1.8 3.9 1.8 H12 L16.2 6 V16.5 Q16.2 18.2 14.5 18.2 H3.9 Q2.2 18.2 2.2 16.5 Z" fill="#fdfdfd" stroke="#777" stroke-width="1.4"/><path d="M12 1.8 V6 H16.2" fill="#666" stroke="#666" stroke-width="1.2"/><circle cx="15" cy="15" r="4.6" fill="url(#rg)" stroke="#a83010" stroke-width="0.8"/></svg>
<div class="t" style="top:593.05px;font-size:15.7px;line-height:19.7px;color:#000;left:48px;transform-origin:0 50%;transform:scaleX(0.9172);">50455363</div>
<div class="t" style="top:593.05px;font-size:15.7px;line-height:19.7px;color:#000;right:1451.00px;transform-origin:100% 50%;transform:scaleX(0.8917);">2017.04.25 15:21:33</div>
<div class="t" style="top:593.05px;font-size:15.7px;line-height:19.7px;color:#000;right:1322.00px;transform-origin:100% 50%;transform:scaleX(0.9172);">sell</div>
<div class="t" style="top:593.05px;font-size:15.7px;line-height:19.7px;color:#000;right:1219.00px;transform-origin:100% 50%;transform:scaleX(0.9172);">0.05</div>
<div class="t" style="top:593.05px;font-size:15.7px;line-height:19.7px;color:#000;right:1090.00px;transform-origin:100% 50%;transform:scaleX(0.9172);">usdcad</div>
<div class="t" style="top:593.05px;font-size:15.7px;line-height:19.7px;color:#000;right:961.00px;transform-origin:100% 50%;transform:scaleX(0.9172);">1.35946</div>
<div class="t" style="top:593.05px;font-size:15.7px;line-height:19.7px;color:#000;right:832.00px;transform-origin:100% 50%;transform:scaleX(0.9172);">0.00000</div>
<div class="t" style="top:593.05px;font-size:15.7px;line-height:19.7px;color:#000;right:703.00px;transform-origin:100% 50%;transform:scaleX(0.9172);">0.00000</div>
<div class="t" style="top:593.05px;font-size:15.7px;line-height:19.7px;color:#000;right:418.00px;transform-origin:100% 50%;transform:scaleX(0.8917);">2017.04.27 04:49:05</div>
<div class="t" style="top:593.05px;font-size:15.7px;line-height:19.7px;color:#000;right:289.00px;transform-origin:100% 50%;transform:scaleX(0.9172);">1.35689</div>
<div class="t" style="top:593.05px;font-size:15.7px;line-height:19.7px;color:#000;right:160.00px;transform-origin:100% 50%;transform:scaleX(0.9172);">-0.16</div>
<div class="t" style="top:593.05px;font-size:15.7px;line-height:19.7px;color:#000;right:10.00px;transform-origin:100% 50%;transform:scaleX(0.9172);">8.68</div>
<div class="r" style="left:21px;top:640px;width:1892px;height:1px;background:#c8c8c8;"></div>
<div class="r" style="left:187px;top:616px;width:1px;height:24px;background:#c8c8c8;"></div>
<div class="r" style="left:472px;top:616px;width:1px;height:24px;background:#c8c8c8;"></div>
<div class="r" style="left:601px;top:616px;width:1px;height:24px;background:#c8c8c8;"></div>
<div class="r" style="left:704px;top:616px;width:1px;height:24px;background:#c8c8c8;"></div>
<div class="r" style="left:833px;top:616px;width:1px;height:24px;background:#c8c8c8;"></div>
<div class="r" style="left:962px;top:616px;width:1px;height:24px;background:#c8c8c8;"></div>
<div class="r" style="left:1091px;top:616px;width:1px;height:24px;background:#c8c8c8;"></div>
<div class="r" style="left:1220px;top:616px;width:1px;height:24px;background:#c8c8c8;"></div>
<div class="r" style="left:1505px;top:616px;width:1px;height:24px;background:#c8c8c8;"></div>
<div class="r" style="left:1634px;top:616px;width:1px;height:24px;background:#c8c8c8;"></div>
<div class="r" style="left:1763px;top:616px;width:1px;height:24px;background:#c8c8c8;"></div>
<svg class="r" style="left:23px;top:618px;" width="21" height="22" viewBox="0 0 21 22"><defs><radialGradient id="rg" cx="0.35" cy="0.3" r="0.7"><stop offset="0" stop-color="#ff9a6a"/><stop offset="0.5" stop-color="#f04a12"/><stop offset="1" stop-color="#c83008"/></radialGradient></defs><path d="M2.2 3.5 Q2.2 1.8 3.9 1.8 H12 L16.2 6 V16.5 Q16.2 18.2 14.5 18.2 H3.9 Q2.2 18.2 2.2 16.5 Z" fill="#fdfdfd" stroke="#777" stroke-width="1.4"/><path d="M12 1.8 V6 H16.2" fill="#666" stroke="#666" stroke-width="1.2"/><circle cx="15" cy="15" r="4.6" fill="url(#rg)" stroke="#a83010" stroke-width="0.8"/></svg>
<div class="t" style="top:618.05px;font-size:15.7px;line-height:19.7px;color:#000;left:48px;transform-origin:0 50%;transform:scaleX(0.9172);">50452626</div>
<div class="t" style="top:618.05px;font-size:15.7px;line-height:19.7px;color:#000;right:1451.00px;transform-origin:100% 50%;transform:scaleX(0.8917);">2017.04.25 14:03:27</div>
<div class="t" style="top:618.05px;font-size:15.7px;line-height:19.7px;color:#000;right:1322.00px;transform-origin:100% 50%;transform:scaleX(0.9172);">sell</div>
<div class="t" style="top:618.05px;font-size:15.7px;line-height:19.7px;color:#000;right:1219.00px;transform-origin:100% 50%;transform:scaleX(0.9172);">0.02</div>
<div class="t" style="top:618.05px;font-size:15.7px;line-height:19.7px;color:#000;right:1090.00px;transform-origin:100% 50%;transform:scaleX(0.9172);">usdcad</div>
<div class="t" style="top:618.05px;font-size:15.7px;line-height:19.7px;color:#000;right:961.00px;transform-origin:100% 50%;transform:scaleX(0.9172);">1.35781</div>
<div class="t" style="top:618.05px;font-size:15.7px;line-height:19.7px;color:#000;right:832.00px;transform-origin:100% 50%;transform:scaleX(0.9172);">0.00000</div>
<div class="t" style="top:618.05px;font-size:15.7px;line-height:19.7px;color:#000;right:703.00px;transform-origin:100% 50%;transform:scaleX(0.9172);">1.35042</div>
<div class="t" style="top:618.05px;font-size:15.7px;line-height:19.7px;color:#000;right:418.00px;transform-origin:100% 50%;transform:scaleX(0.8917);">2017.04.27 04:49:14</div>
<div class="t" style="top:618.05px;font-size:15.7px;line-height:19.7px;color:#000;right:289.00px;transform-origin:100% 50%;transform:scaleX(0.9172);">1.35700</div>
<div class="t" style="top:618.05px;font-size:15.7px;line-height:19.7px;color:#000;right:160.00px;transform-origin:100% 50%;transform:scaleX(0.9172);">-0.07</div>
<div class="t" style="top:618.05px;font-size:15.7px;line-height:19.7px;color:#000;right:10.00px;transform-origin:100% 50%;transform:scaleX(0.9172);">1.09</div>
<div class="r" style="left:21px;top:641px;width:1892px;height:24px;background:#ebebeb;"></div>
<div class="r" style="left:21px;top:665px;width:1892px;height:1px;background:#c8c8c8;"></div>
<div class="r" style="left:187px;top:641px;width:1px;height:24px;background:#c8c8c8;"></div>
<div class="r" style="left:472px;top:641px;width:1px;height:24px;background:#c8c8c8;"></div>
<div class="r" style="left:601px;top:641px;width:1px;height:24px;background:#c8c8c8;"></div>
<div class="r" style="left:704px;top:641px;width:1px;height:24px;background:#c8c8c8;"></div>
<div class="r" style="left:833px;top:641px;width:1px;height:24px;background:#c8c8c8;"></div>
<div class="r" style="left:962px;top:641px;width:1px;height:24px;background:#c8c8c8;"></div>
<div class="r" style="left:1091px;top:641px;width:1px;height:24px;background:#c8c8c8;"></div>
<div class="r" style="left:1220px;top:641px;width:1px;height:24px;background:#c8c8c8;"></div>
<div class="r" style="left:1505px;top:641px;width:1px;height:24px;background:#c8c8c8;"></div>
<div class="r" style="left:1634px;top:641px;width:1px;height:24px;background:#c8c8c8;"></div>
<div class="r" style="left:1763px;top:641px;width:1px;height:24px;background:#c8c8c8;"></div>
<svg class="r" style="left:23px;top:643px;" width="21" height="22" viewBox="0 0 21 22"><defs><radialGradient id="rg" cx="0.35" cy="0.3" r="0.7"><stop offset="0" stop-color="#ff9a6a"/><stop offset="0.5" stop-color="#f04a12"/><stop offset="1" stop-color="#c83008"/></radialGradient></defs><path d="M2.2 3.5 Q2.2 1.8 3.9 1.8 H12 L16.2 6 V16.5 Q16.2 18.2 14.5 18.2 H3.9 Q2.2 18.2 2.2 16.5 Z" fill="#fdfdfd" stroke="#777" stroke-width="1.4"/><path d="M12 1.8 V6 H16.2" fill="#666" stroke="#666" stroke-width="1.2"/><circle cx="15" cy="15" r="4.6" fill="url(#rg)" stroke="#a83010" stroke-width="0.8"/></svg>
<div class="t" style="top:643.05px;font-size:15.7px;line-height:19.7px;color:#000;left:48px;transform-origin:0 50%;transform:scaleX(0.9172);">50504697</div>
<div class="t" style="top:643.05px;font-size:15.7px;line-height:19.7px;color:#000;right:1451.00px;transform-origin:100% 50%;transform:scaleX(0.8917);">2017.04.26 18:21:48</div>
<div class="t" style="top:643.05px;font-size:15.7px;line-height:19.7px;color:#000;right:1322.00px;transform-origin:100% 50%;transform:scaleX(0.9172);">sell</div>
<div class="t" style="top:643.05px;font-size:15.7px;line-height:19.7px;color:#000;right:1219.00px;transform-origin:100% 50%;transform:scaleX(0.9172);">0.02</div>
<div class="t" style="top:643.05px;font-size:15.7px;line-height:19.7px;color:#000;right:1090.00px;transform-origin:100% 50%;transform:scaleX(0.9172);">usdcad</div>
<div class="t" style="top:643.05px;font-size:15.7px;line-height:19.7px;color:#000;right:961.00px;transform-origin:100% 50%;transform:scaleX(0.9172);">1.36051</div>
<div class="t" style="top:643.05px;font-size:15.7px;line-height:19.7px;color:#000;right:832.00px;transform-origin:100% 50%;transform:scaleX(0.9172);">0.00000</div>
<div class="t" style="top:643.05px;font-size:15.7px;line-height:19.7px;color:#000;right:703.00px;transform-origin:100% 50%;transform:scaleX(0.9172);">1.35555</div>
<div class="t" style="top:643.05px;font-size:15.7px;line-height:19.7px;color:#000;right:418.00px;transform-origin:100% 50%;transform:scaleX(0.8917);">2017.04.27 04:49:20</div>
<div class="t" style="top:643.05px;font-size:15.7px;line-height:19.7px;color:#000;right:289.00px;transform-origin:100% 50%;transform:scaleX(0.9172);">1.35704</div>
<div class="t" style="top:643.05px;font-size:15.7px;line-height:19.7px;color:#000;right:160.00px;transform-origin:100% 50%;transform:scaleX(0.9172);">-0.05</div>
<div class="t" style="top:643.05px;font-size:15.7px;line-height:19.7px;color:#000;right:10.00px;transform-origin:100% 50%;transform:scaleX(0.9172);">4.69</div>
<div class="r" style="left:21px;top:690px;width:1892px;height:1px;background:#c8c8c8;"></div>
<div class="r" style="left:187px;top:666px;width:1px;height:24px;background:#c8c8c8;"></div>
<div class="r" style="left:472px;top:666px;width:1px;height:24px;background:#c8c8c8;"></div>
<div class="r" style="left:601px;top:666px;width:1px;height:24px;background:#c8c8c8;"></div>
<div class="r" style="left:704px;top:666px;width:1px;height:24px;background:#c8c8c8;"></div>
<div class="r" style="left:833px;top:666px;width:1px;height:24px;background:#c8c8c8;"></div>
<div class="r" style="left:962px;top:666px;width:1px;height:24px;background:#c8c8c8;"></div>
<div class="r" style="left:1091px;top:666px;width:1px;height:24px;background:#c8c8c8;"></div>
<div class="r" style="left:1220px;top:666px;width:1px;height:24px;background:#c8c8c8;"></div>
<div class="r" style="left:1505px;top:666px;width:1px;height:24px;background:#c8c8c8;"></div>
<div class="r" style="left:1634px;top:666px;width:1px;height:24px;background:#c8c8c8;"></div>
<div class="r" style="left:1763px;top:666px;width:1px;height:24px;background:#c8c8c8;"></div>
<svg class="r" style="left:23px;top:668px;" width="21" height="22" viewBox="0 0 21 22"><defs><radialGradient id="rg" cx="0.35" cy="0.3" r="0.7"><stop offset="0" stop-color="#ff9a6a"/><stop offset="0.5" stop-color="#f04a12"/><stop offset="1" stop-color="#c83008"/></radialGradient></defs><path d="M2.2 3.5 Q2.2 1.8 3.9 1.8 H12 L16.2 6 V16.5 Q16.2 18.2 14.5 18.2 H3.9 Q2.2 18.2 2.2 16.5 Z" fill="#fdfdfd" stroke="#777" stroke-width="1.4"/><path d="M12 1.8 V6 H16.2" fill="#666" stroke="#666" stroke-width="1.2"/><circle cx="15" cy="15" r="4.6" fill="url(#rg)" stroke="#a83010" stroke-width="0.8"/></svg>
<div class="t" style="top:668.05px;font-size:15.7px;line-height:19.7px;color:#000;left:48px;transform-origin:0 50%;transform:scaleX(0.9172);">50505810</div>
<div class="t" style="top:668.05px;font-size:15.7px;line-height:19.7px;color:#000;right:1451.00px;transform-origin:100% 50%;transform:scaleX(0.8917);">2017.04.26 18:40:02</div>
<div class="t" style="top:668.05px;font-size:15.7px;line-height:19.7px;color:#000;right:1322.00px;transform-origin:100% 50%;transform:scaleX(0.9172);">sell</div>
<div class="t" style="top:668.05px;font-size:15.7px;line-height:19.7px;color:#000;right:1219.00px;transform-origin:100% 50%;transform:scaleX(0.9172);">0.02</div>
<div class="t" style="top:668.05px;font-size:15.7px;line-height:19.7px;color:#000;right:1090.00px;transform-origin:100% 50%;transform:scaleX(0.9172);">usdcad</div>
<div class="t" style="top:668.05px;font-size:15.7px;line-height:19.7px;color:#000;right:961.00px;transform-origin:100% 50%;transform:scaleX(0.9172);">1.36137</div>
<div class="t" style="top:668.05px;font-size:15.7px;line-height:19.7px;color:#000;right:832.00px;transform-origin:100% 50%;transform:scaleX(0.9172);">0.00000</div>
<div class="t" style="top:668.05px;font-size:15.7px;line-height:19.7px;color:#000;right:703.00px;transform-origin:100% 50%;transform:scaleX(0.9172);">0.00000</div>
<div class="t" style="top:668.05px;font-size:15.7px;line-height:19.7px;color:#000;right:418.00px;transform-origin:100% 50%;transform:scaleX(0.8917);">2017.04.27 04:49:27</div>
<div class="t" style="top:668.05px;font-size:15.7px;line-height:19.7px;color:#000;right:289.00px;transform-origin:100% 50%;transform:scaleX(0.9172);">1.35701</div>
<div class="t" style="top:668.05px;font-size:15.7px;line-height:19.7px;color:#000;right:160.00px;transform-origin:100% 50%;transform:scaleX(0.9172);">-0.05</div>
<div class="t" style="top:668.05px;font-size:15.7px;line-height:19.7px;color:#000;right:10.00px;transform-origin:100% 50%;transform:scaleX(0.9172);">5.89</div>
<div class="r" style="left:21px;top:691px;width:1892px;height:24px;background:#ebebeb;"></div>
<div class="r" style="left:21px;top:715px;width:1892px;height:1px;background:#c8c8c8;"></div>
<div class="r" style="left:187px;top:691px;width:1px;height:24px;background:#c8c8c8;"></div>
<div class="r" style="left:472px;top:691px;width:1px;height:24px;background:#c8c8c8;"></div>
<div class="r" style="left:601px;top:691px;width:1px;height:24px;background:#c8c8c8;"></div>
<div class="r" style="left:704px;top:691px;width:1px;height:24px;background:#c8c8c8;"></div>
<div class="r" style="left:833px;top:691px;width:1px;height:24px;background:#c8c8c8;"></div>
<div class="r" style="left:962px;top:691px;width:1px;height:24px;background:#c8c8c8;"></div>
<div class="r" style="left:1091px;top:691px;width:1px;height:24px;background:#c8c8c8;"></div>
<div class="r" style="left:1220px;top:691px;width:1px;height:24px;background:#c8c8c8;"></div>
<div class="r" style="left:1505px;top:691px;width:1px;height:24px;background:#c8c8c8;"></div>
<div class="r" style="left:1634px;top:691px;width:1px;height:24px;background:#c8c8c8;"></div>
<div class="r" style="left:1763px;top:691px;width:1px;height:24px;background:#c8c8c8;"></div>
<svg class="r" style="left:23px;top:693px;" width="21" height="22" viewBox="0 0 21 22"><defs><radialGradient id="rg" cx="0.35" cy="0.3" r="0.7"><stop offset="0" stop-color="#ff9a6a"/><stop offset="0.5" stop-color="#f04a12"/><stop offset="1" stop-color="#c83008"/></radialGradient></defs><path d="M2.2 3.5 Q2.2 1.8 3.9 1.8 H12 L16.2 6 V16.5 Q16.2 18.2 14.5 18.2 H3.9 Q2.2 18.2 2.2 16.5 Z" fill="#fdfdfd" stroke="#777" stroke-width="1.4"/><path d="M12 1.8 V6 H16.2" fill="#666" stroke="#666" stroke-width="1.2"/><circle cx="15" cy="15" r="4.6" fill="url(#rg)" stroke="#a83010" stroke-width="0.8"/></svg>
<div class="t" style="top:693.05px;font-size:15.7px;line-height:19.7px;color:#000;left:48px;transform-origin:0 50%;transform:scaleX(0.9172);">50515804</div>
<div class="t" style="top:693.05px;font-size:15.7px;line-height:19.7px;color:#000;right:1451.00px;transform-origin:100% 50%;transform:scaleX(0.8917);">2017.04.26 20:56:31</div>
<div class="t" style="top:693.05px;font-size:15.7px;line-height:19.7px;color:#000;right:1322.00px;transform-origin:100% 50%;transform:scaleX(0.9172);">sell</div>
<div class="t" style="top:693.05px;font-size:15.7px;line-height:19.7px;color:#000;right:1219.00px;transform-origin:100% 50%;transform:scaleX(0.9172);">0.02</div>
<div class="t" style="top:693.05px;font-size:15.7px;line-height:19.7px;color:#000;right:1090.00px;transform-origin:100% 50%;transform:scaleX(0.9172);">usdcad</div>
<div class="t" style="top:693.05px;font-size:15.7px;line-height:19.7px;color:#000;right:961.00px;transform-origin:100% 50%;transform:scaleX(0.9172);">1.36188</div>
<div class="t" style="top:693.05px;font-size:15.7px;line-height:19.7px;color:#000;right:832.00px;transform-origin:100% 50%;transform:scaleX(0.9172);">0.00000</div>
<div class="t" style="top:693.05px;font-size:15.7px;line-height:19.7px;color:#000;right:703.00px;transform-origin:100% 50%;transform:scaleX(0.9172);">1.35555</div>
<div class="t" style="top:693.05px;font-size:15.7px;line-height:19.7px;color:#000;right:418.00px;transform-origin:100% 50%;transform:scaleX(0.8917);">2017.04.27 04:49:32</div>
<div class="t" style="top:693.05px;font-size:15.7px;line-height:19.7px;color:#000;right:289.00px;transform-origin:100% 50%;transform:scaleX(0.9172);">1.35690</div>
<div class="t" style="top:693.05px;font-size:15.7px;line-height:19.7px;color:#000;right:160.00px;transform-origin:100% 50%;transform:scaleX(0.9172);">-0.05</div>
<div class="t" style="top:693.05px;font-size:15.7px;line-height:19.7px;color:#000;right:10.00px;transform-origin:100% 50%;transform:scaleX(0.9172);">6.73</div>
<div class="r" style="left:21px;top:740px;width:1892px;height:1px;background:#c8c8c8;"></div>
<div class="r" style="left:187px;top:716px;width:1px;height:24px;background:#c8c8c8;"></div>
<div class="r" style="left:472px;top:716px;width:1px;height:24px;background:#c8c8c8;"></div>
<div class="r" style="left:601px;top:716px;width:1px;height:24px;background:#c8c8c8;"></div>
<div class="r" style="left:704px;top:716px;width:1px;height:24px;background:#c8c8c8;"></div>
<div class="r" style="left:833px;top:716px;width:1px;height:24px;background:#c8c8c8;"></div>
<div class="r" style="left:962px;top:716px;width:1px;height:24px;background:#c8c8c8;"></div>
<div class="r" style="left:1091px;top:716px;width:1px;height:24px;background:#c8c8c8;"></div>
<div class="r" style="left:1220px;top:716px;width:1px;height:24px;background:#c8c8c8;"></div>
<div class="r" style="left:1505px;top:716px;width:1px;height:24px;background:#c8c8c8;"></div>
<div class="r" style="left:1634px;top:716px;width:1px;height:24px;background:#c8c8c8;"></div>
<div class="r" style="left:1763px;top:716px;width:1px;height:24px;background:#c8c8c8;"></div>
<svg class="r" style="left:23px;top:718px;" width="21" height="22" viewBox="0 0 21 22"><defs><radialGradient id="rg" cx="0.35" cy="0.3" r="0.7"><stop offset="0" stop-color="#ff9a6a"/><stop offset="0.5" stop-color="#f04a12"/><stop offset="1" stop-color="#c83008"/></radialGradient></defs><path d="M2.2 3.5 Q2.2 1.8 3.9 1.8 H12 L16.2 6 V16.5 Q16.2 18.2 14.5 18.2 H3.9 Q2.2 18.2 2.2 16.5 Z" fill="#fdfdfd" stroke="#777" stroke-width="1.4"/><path d="M12 1.8 V6 H16.2" fill="#666" stroke="#666" stroke-width="1.2"/><circle cx="15" cy="15" r="4.6" fill="url(#rg)" stroke="#a83010" stroke-width="0.8"/></svg>
<div class="t" style="top:718.05px;font-size:15.7px;line-height:19.7px;color:#000;left:48px;transform-origin:0 50%;transform:scaleX(0.9172);">50455119</div>
<div class="t" style="top:718.05px;font-size:15.7px;line-height:19.7px;color:#000;right:1451.00px;transform-origin:100% 50%;transform:scaleX(0.8917);">2017.04.25 15:13:50</div>
<div class="t" style="top:718.05px;font-size:15.7px;line-height:19.7px;color:#000;right:1322.00px;transform-origin:100% 50%;transform:scaleX(0.9172);">sell</div>
<div class="t" style="top:718.05px;font-size:15.7px;line-height:19.7px;color:#000;right:1219.00px;transform-origin:100% 50%;transform:scaleX(0.9172);">0.01</div>
<div class="t" style="top:718.05px;font-size:15.7px;line-height:19.7px;color:#000;right:1090.00px;transform-origin:100% 50%;transform:scaleX(0.9172);">usdcad</div>
<div class="t" style="top:718.05px;font-size:15.7px;line-height:19.7px;color:#000;right:961.00px;transform-origin:100% 50%;transform:scaleX(0.9172);">1.35939</div>
<div class="t" style="top:718.05px;font-size:15.7px;line-height:19.7px;color:#000;right:832.00px;transform-origin:100% 50%;transform:scaleX(0.9172);">0.00000</div>
<div class="t" style="top:718.05px;font-size:15.7px;line-height:19.7px;color:#000;right:703.00px;transform-origin:100% 50%;transform:scaleX(0.9172);">0.00000</div>
<div class="t" style="top:718.05px;font-size:15.7px;line-height:19.7px;color:#000;right:418.00px;transform-origin:100% 50%;transform:scaleX(0.8917);">2017.04.27 04:49:41</div>
<div class="t" style="top:718.05px;font-size:15.7px;line-height:19.7px;color:#000;right:289.00px;transform-origin:100% 50%;transform:scaleX(0.9172);">1.35686</div>
<div class="t" style="top:718.05px;font-size:15.7px;line-height:19.7px;color:#000;right:160.00px;transform-origin:100% 50%;transform:scaleX(0.9172);">-0.03</div>
<div class="t" style="top:718.05px;font-size:15.7px;line-height:19.7px;color:#000;right:10.00px;transform-origin:100% 50%;transform:scaleX(0.9172);">1.71</div>
<div class="r" style="left:21px;top:741px;width:1892px;height:24px;background:#ebebeb;"></div>
<div class="r" style="left:21px;top:765px;width:1892px;height:1px;background:#c8c8c8;"></div>
<div class="r" style="left:187px;top:741px;width:1px;height:24px;background:#c8c8c8;"></div>
<div class="r" style="left:472px;top:741px;width:1px;height:24px;background:#c8c8c8;"></div>
<div class="r" style="left:601px;top:741px;width:1px;height:24px;background:#c8c8c8;"></div>
<div class="r" style="left:704px;top:741px;width:1px;height:24px;background:#c8c8c8;"></div>
<div class="r" style="left:833px;top:741px;width:1px;height:24px;background:#c8c8c8;"></div>
<div class="r" style="left:962px;top:741px;width:1px;height:24px;background:#c8c8c8;"></div>
<div class="r" style="left:1091px;top:741px;width:1px;height:24px;background:#c8c8c8;"></div>
<div class="r" style="left:1220px;top:741px;width:1px;height:24px;background:#c8c8c8;"></div>
<div class="r" style="left:1505px;top:741px;width:1px;height:24px;background:#c8c8c8;"></div>
<div class="r" style="left:1634px;top:741px;width:1px;height:24px;background:#c8c8c8;"></div>
<div class="r" style="left:1763px;top:741px;width:1px;height:24px;background:#c8c8c8;"></div>
<svg class="r" style="left:23px;top:743px;" width="21" height="22" viewBox="0 0 21 22"><defs><radialGradient id="rg" cx="0.35" cy="0.3" r="0.7"><stop offset="0" stop-color="#ff9a6a"/><stop offset="0.5" stop-color="#f04a12"/><stop offset="1" stop-color="#c83008"/></radialGradient></defs><path d="M2.2 3.5 Q2.2 1.8 3.9 1.8 H12 L16.2 6 V16.5 Q16.2 18.2 14.5 18.2 H3.9 Q2.2 18.2 2.2 16.5 Z" fill="#fdfdfd" stroke="#777" stroke-width="1.4"/><path d="M12 1.8 V6 H16.2" fill="#666" stroke="#666" stroke-width="1.2"/><circle cx="15" cy="15" r="4.6" fill="url(#rg)" stroke="#a83010" stroke-width="0.8"/></svg>
<div class="t" style="top:743.05px;font-size:15.7px;line-height:19.7px;color:#000;left:48px;transform-origin:0 50%;transform:scaleX(0.9172);">50439358</div>
<div class="t" style="top:743.05px;font-size:15.7px;line-height:19.7px;color:#000;right:1451.00px;transform-origin:100% 50%;transform:scaleX(0.8917);">2017.04.25 07:59:45</div>
<div class="t" style="top:743.05px;font-size:15.7px;line-height:19.7px;color:#000;right:1322.00px;transform-origin:100% 50%;transform:scaleX(0.9172);">sell</div>
<div class="t" style="top:743.05px;font-size:15.7px;line-height:19.7px;color:#000;right:1219.00px;transform-origin:100% 50%;transform:scaleX(0.9172);">0.03</div>
<div class="t" style="top:743.05px;font-size:15.7px;line-height:19.7px;color:#000;right:1090.00px;transform-origin:100% 50%;transform:scaleX(0.9172);">usdcad</div>
<div class="t" style="top:743.05px;font-size:15.7px;line-height:19.7px;color:#000;right:961.00px;transform-origin:100% 50%;transform:scaleX(0.9172);">1.35620</div>
<div class="t" style="top:743.05px;font-size:15.7px;line-height:19.7px;color:#000;right:832.00px;transform-origin:100% 50%;transform:scaleX(0.9172);">0.00000</div>
<div class="t" style="top:743.05px;font-size:15.7px;line-height:19.7px;color:#000;right:703.00px;transform-origin:100% 50%;transform:scaleX(0.9172);">0.00000</div>
<div class="t" style="top:743.05px;font-size:15.7px;line-height:19.7px;color:#000;right:418.00px;transform-origin:100% 50%;transform:scaleX(0.8917);">2017.04.27 04:54:16</div>
<div class="t" style="top:743.05px;font-size:15.7px;line-height:19.7px;color:#000;right:289.00px;transform-origin:100% 50%;transform:scaleX(0.9172);">1.35549</div>
<div class="t" style="top:743.05px;font-size:15.7px;line-height:19.7px;color:#000;right:160.00px;transform-origin:100% 50%;transform:scaleX(0.9172);">-0.09</div>
<div class="t" style="top:743.05px;font-size:15.7px;line-height:19.7px;color:#000;right:10.00px;transform-origin:100% 50%;transform:scaleX(0.9172);">1.44</div>
<div class="r" style="left:21px;top:790px;width:1892px;height:1px;background:#c8c8c8;"></div>
<div class="r" style="left:187px;top:766px;width:1px;height:24px;background:#c8c8c8;"></div>
<div class="r" style="left:472px;top:766px;width:1px;height:24px;background:#c8c8c8;"></div>
<div class="r" style="left:601px;top:766px;width:1px;height:24px;background:#c8c8c8;"></div>
<div class="r" style="left:704px;top:766px;width:1px;height:24px;background:#c8c8c8;"></div>
<div class="r" style="left:833px;top:766px;width:1px;height:24px;background:#c8c8c8;"></div>
<div class="r" style="left:962px;top:766px;width:1px;height:24px;background:#c8c8c8;"></div>
<div class="r" style="left:1091px;top:766px;width:1px;height:24px;background:#c8c8c8;"></div>
<div class="r" style="left:1220px;top:766px;width:1px;height:24px;background:#c8c8c8;"></div>
<div class="r" style="left:1505px;top:766px;width:1px;height:24px;background:#c8c8c8;"></div>
<div class="r" style="left:1634px;top:766px;width:1px;height:24px;background:#c8c8c8;"></div>
<div class="r" style="left:1763px;top:766px;width:1px;height:24px;background:#c8c8c8;"></div>
<svg class="r" style="left:23px;top:768px;" width="21" height="22" viewBox="0 0 21 22"><defs><radialGradient id="rg" cx="0.35" cy="0.3" r="0.7"><stop offset="0" stop-color="#ff9a6a"/><stop offset="0.5" stop-color="#f04a12"/><stop offset="1" stop-color="#c83008"/></radialGradient></defs><path d="M2.2 3.5 Q2.2 1.8 3.9 1.8 H12 L16.2 6 V16.5 Q16.2 18.2 14.5 18.2 H3.9 Q2.2 18.2 2.2 16.5 Z" fill="#fdfdfd" stroke="#777" stroke-width="1.4"/><path d="M12 1.8 V6 H16.2" fill="#666" stroke="#666" stroke-width="1.2"/><circle cx="15" cy="15" r="4.6" fill="url(#rg)" stroke="#a83010" stroke-width="0.8"/></svg>
<div class="t" style="top:768.05px;font-size:15.7px;line-height:19.7px;color:#000;left:48px;transform-origin:0 50%;transform:scaleX(0.9172);">50438148</div>
<div class="t" style="top:768.05px;font-size:15.7px;line-height:19.7px;color:#000;right:1451.00px;transform-origin:100% 50%;transform:scaleX(0.8917);">2017.04.25 06:01:07</div>
<div class="t" style="top:768.05px;font-size:15.7px;line-height:19.7px;color:#000;right:1322.00px;transform-origin:100% 50%;transform:scaleX(0.9172);">sell</div>
<div class="t" style="top:768.05px;font-size:15.7px;line-height:19.7px;color:#000;right:1219.00px;transform-origin:100% 50%;transform:scaleX(0.9172);">0.07</div>
<div class="t" style="top:768.05px;font-size:15.7px;line-height:19.7px;color:#000;right:1090.00px;transform-origin:100% 50%;transform:scaleX(0.9172);">usdcad</div>
<div class="t" style="top:768.05px;font-size:15.7px;line-height:19.7px;color:#000;right:961.00px;transform-origin:100% 50%;transform:scaleX(0.9172);">1.35512</div>
<div class="t" style="top:768.05px;font-size:15.7px;line-height:19.7px;color:#000;right:832.00px;transform-origin:100% 50%;transform:scaleX(0.9172);">0.00000</div>
<div class="t" style="top:768.05px;font-size:15.7px;line-height:19.7px;color:#000;right:703.00px;transform-origin:100% 50%;transform:scaleX(0.9172);">0.00000</div>
<div class="t" style="top:768.05px;font-size:15.7px;line-height:19.7px;color:#000;right:418.00px;transform-origin:100% 50%;transform:scaleX(0.8917);">2017.04.27 04:55:42</div>
<div class="t" style="top:768.05px;font-size:15.7px;line-height:19.7px;color:#000;right:289.00px;transform-origin:100% 50%;transform:scaleX(0.9172);">1.35517</div>
<div class="t" style="top:768.05px;font-size:15.7px;line-height:19.7px;color:#000;right:160.00px;transform-origin:100% 50%;transform:scaleX(0.9172);">-0.23</div>
<div class="t" style="top:768.05px;font-size:15.7px;line-height:19.7px;color:#000;right:10.00px;transform-origin:100% 50%;transform:scaleX(0.9172);">-0.23</div>
<div class="r" style="left:21px;top:791px;width:1892px;height:24px;background:#ebebeb;"></div>
<div class="r" style="left:21px;top:815px;width:1892px;height:1px;background:#c8c8c8;"></div>
<div class="r" style="left:187px;top:791px;width:1px;height:24px;background:#c8c8c8;"></div>
<div class="r" style="left:472px;top:791px;width:1px;height:24px;background:#c8c8c8;"></div>
<div class="r" style="left:601px;top:791px;width:1px;height:24px;background:#c8c8c8;"></div>
<div class="r" style="left:704px;top:791px;width:1px;height:24px;background:#c8c8c8;"></div>
<div class="r" style="left:833px;top:791px;width:1px;height:24px;background:#c8c8c8;"></div>
<div class="r" style="left:962px;top:791px;width:1px;height:24px;background:#c8c8c8;"></div>
<div class="r" style="left:1091px;top:791px;width:1px;height:24px;background:#c8c8c8;"></div>
<div class="r" style="left:1220px;top:791px;width:1px;height:24px;background:#c8c8c8;"></div>
<div class="r" style="left:1505px;top:791px;width:1px;height:24px;background:#c8c8c8;"></div>
<div class="r" style="left:1634px;top:791px;width:1px;height:24px;background:#c8c8c8;"></div>
<div class="r" style="left:1763px;top:791px;width:1px;height:24px;background:#c8c8c8;"></div>
<div class="r" style="left:1093px;top:791px;width:126px;height:23px;background:#64f064;"></div>
<svg class="r" style="left:23px;top:793px;" width="21" height="22" viewBox="0 0 21 22"><defs><radialGradient id="rg" cx="0.35" cy="0.3" r="0.7"><stop offset="0" stop-color="#ff9a6a"/><stop offset="0.5" stop-color="#f04a12"/><stop offset="1" stop-color="#c83008"/></radialGradient></defs><path d="M2.2 3.5 Q2.2 1.8 3.9 1.8 H12 L16.2 6 V16.5 Q16.2 18.2 14.5 18.2 H3.9 Q2.2 18.2 2.2 16.5 Z" fill="#fdfdfd" stroke="#777" stroke-width="1.4"/><path d="M12 1.8 V6 H16.2" fill="#666" stroke="#666" stroke-width="1.2"/><circle cx="15" cy="15" r="4.6" fill="url(#rg)" stroke="#a83010" stroke-width="0.8"/></svg>
<div class="t" style="top:793.05px;font-size:15.7px;line-height:19.7px;color:#000;left:48px;transform-origin:0 50%;transform:scaleX(0.9172);">50525197</div>
<div class="t" style="top:793.05px;font-size:15.7px;line-height:19.7px;color:#000;right:1451.00px;transform-origin:100% 50%;transform:scaleX(0.8917);">2017.04.27 02:27:09</div>
<div class="t" style="top:793.05px;font-size:15.7px;line-height:19.7px;color:#000;right:1322.00px;transform-origin:100% 50%;transform:scaleX(0.9172);">sell</div>
<div class="t" style="top:793.05px;font-size:15.7px;line-height:19.7px;color:#000;right:1219.00px;transform-origin:100% 50%;transform:scaleX(0.9172);">0.16</div>
<div class="t" style="top:793.05px;font-size:15.7px;line-height:19.7px;color:#000;right:1090.00px;transform-origin:100% 50%;transform:scaleX(0.9172);">eurusd</div>
<div class="t" style="top:793.05px;font-size:15.7px;line-height:19.7px;color:#000;right:961.00px;transform-origin:100% 50%;transform:scaleX(0.9172);">1.09142</div>
<div class="t" style="top:793.05px;font-size:15.7px;line-height:19.7px;color:#000;right:832.00px;transform-origin:100% 50%;transform:scaleX(0.9172);">0.00000</div>
<div class="t" style="top:793.05px;font-size:15.7px;line-height:19.7px;color:#000;right:703.00px;transform-origin:100% 50%;transform:scaleX(0.9172);">1.09000</div>
<div class="t" style="top:793.05px;font-size:15.7px;line-height:19.7px;color:#000;right:418.00px;transform-origin:100% 50%;transform:scaleX(0.8917);">2017.04.27 07:59:44</div>
<div class="t" style="top:793.05px;font-size:15.7px;line-height:19.7px;color:#000;right:289.00px;transform-origin:100% 50%;transform:scaleX(0.9172);">1.08999</div>
<div class="t" style="top:793.05px;font-size:15.7px;line-height:19.7px;color:#000;right:160.00px;transform-origin:100% 50%;transform:scaleX(0.9172);">0.00</div>
<div class="t" style="top:793.05px;font-size:15.7px;line-height:19.7px;color:#000;right:10.00px;transform-origin:100% 50%;transform:scaleX(0.9172);">20.99</div>
<div class="r" style="left:21px;top:840px;width:1892px;height:1px;background:#c8c8c8;"></div>
<div class="r" style="left:187px;top:816px;width:1px;height:24px;background:#c8c8c8;"></div>
<div class="r" style="left:472px;top:816px;width:1px;height:24px;background:#c8c8c8;"></div>
<div class="r" style="left:601px;top:816px;width:1px;height:24px;background:#c8c8c8;"></div>
<div class="r" style="left:704px;top:816px;width:1px;height:24px;background:#c8c8c8;"></div>
<div class="r" style="left:833px;top:816px;width:1px;height:24px;background:#c8c8c8;"></div>
<div class="r" style="left:962px;top:816px;width:1px;height:24px;background:#c8c8c8;"></div>
<div class="r" style="left:1091px;top:816px;width:1px;height:24px;background:#c8c8c8;"></div>
<div class="r" style="left:1220px;top:816px;width:1px;height:24px;background:#c8c8c8;"></div>
<div class="r" style="left:1505px;top:816px;width:1px;height:24px;background:#c8c8c8;"></div>
<div class="r" style="left:1634px;top:816px;width:1px;height:24px;background:#c8c8c8;"></div>
<div class="r" style="left:1763px;top:816px;width:1px;height:24px;background:#c8c8c8;"></div>
<div class="r" style="left:1093px;top:816px;width:126px;height:23px;background:#64f064;"></div>
<svg class="r" style="left:23px;top:818px;" width="21" height="22" viewBox="0 0 21 22"><defs><radialGradient id="rg" cx="0.35" cy="0.3" r="0.7"><stop offset="0" stop-color="#ff9a6a"/><stop offset="0.5" stop-color="#f04a12"/><stop offset="1" stop-color="#c83008"/></radialGradient></defs><path d="M2.2 3.5 Q2.2 1.8 3.9 1.8 H12 L16.2 6 V16.5 Q16.2 18.2 14.5 18.2 H3.9 Q2.2 18.2 2.2 16.5 Z" fill="#fdfdfd" stroke="#777" stroke-width="1.4"/><path d="M12 1.8 V6 H16.2" fill="#666" stroke="#666" stroke-width="1.2"/><circle cx="15" cy="15" r="4.6" fill="url(#rg)" stroke="#a83010" stroke-width="0.8"/></svg>
<div class="t" style="top:818.05px;font-size:15.7px;line-height:19.7px;color:#000;left:48px;transform-origin:0 50%;transform:scaleX(0.9172);">50519182</div>
<div class="t" style="top:818.05px;font-size:15.7px;line-height:19.7px;color:#000;right:1451.00px;transform-origin:100% 50%;transform:scaleX(0.8917);">2017.04.26 21:55:15</div>
<div class="t" style="top:818.05px;font-size:15.7px;line-height:19.7px;color:#000;right:1322.00px;transform-origin:100% 50%;transform:scaleX(0.9172);">sell</div>
<div class="t" style="top:818.05px;font-size:15.7px;line-height:19.7px;color:#000;right:1219.00px;transform-origin:100% 50%;transform:scaleX(0.9172);">0.05</div>
<div class="t" style="top:818.05px;font-size:15.7px;line-height:19.7px;color:#000;right:1090.00px;transform-origin:100% 50%;transform:scaleX(0.9172);">eurusd</div>
<div class="t" style="top:818.05px;font-size:15.7px;line-height:19.7px;color:#000;right:961.00px;transform-origin:100% 50%;transform:scaleX(0.9172);">1.09058</div>
<div class="t" style="top:818.05px;font-size:15.7px;line-height:19.7px;color:#000;right:832.00px;transform-origin:100% 50%;transform:scaleX(0.9172);">0.00000</div>
<div class="t" style="top:818.05px;font-size:15.7px;line-height:19.7px;color:#000;right:703.00px;transform-origin:100% 50%;transform:scaleX(0.9172);">1.08999</div>
<div class="t" style="top:818.05px;font-size:15.7px;line-height:19.7px;color:#000;right:418.00px;transform-origin:100% 50%;transform:scaleX(0.8917);">2017.04.27 07:59:44</div>
<div class="t" style="top:818.05px;font-size:15.7px;line-height:19.7px;color:#000;right:289.00px;transform-origin:100% 50%;transform:scaleX(0.9172);">1.08999</div>
<div class="t" style="top:818.05px;font-size:15.7px;line-height:19.7px;color:#000;right:160.00px;transform-origin:100% 50%;transform:scaleX(0.9172);">0.26</div>
<div class="t" style="top:818.05px;font-size:15.7px;line-height:19.7px;color:#000;right:10.00px;transform-origin:100% 50%;transform:scaleX(0.9172);">2.71</div>
<div class="r" style="left:21px;top:841px;width:1892px;height:24px;background:#ebebeb;"></div>
<div class="r" style="left:21px;top:865px;width:1892px;height:1px;background:#c8c8c8;"></div>
<div class="r" style="left:187px;top:841px;width:1px;height:24px;background:#c8c8c8;"></div>
<div class="r" style="left:472px;top:841px;width:1px;height:24px;background:#c8c8c8;"></div>
<div class="r" style="left:601px;top:841px;width:1px;height:24px;background:#c8c8c8;"></div>
<div class="r" style="left:704px;top:841px;width:1px;height:24px;background:#c8c8c8;"></div>
<div class="r" style="left:833px;top:841px;width:1px;height:24px;background:#c8c8c8;"></div>
<div class="r" style="left:962px;top:841px;width:1px;height:24px;background:#c8c8c8;"></div>
<div class="r" style="left:1091px;top:841px;width:1px;height:24px;background:#c8c8c8;"></div>
<div class="r" style="left:1220px;top:841px;width:1px;height:24px;background:#c8c8c8;"></div>
<div class="r" style="left:1505px;top:841px;width:1px;height:24px;background:#c8c8c8;"></div>
<div class="r" style="left:1634px;top:841px;width:1px;height:24px;background:#c8c8c8;"></div>
<div class="r" style="left:1763px;top:841px;width:1px;height:24px;background:#c8c8c8;"></div>
<div class="r" style="left:1093px;top:841px;width:126px;height:23px;background:#64f064;"></div>
<svg class="r" style="left:23px;top:843px;" width="21" height="22" viewBox="0 0 21 22"><defs><radialGradient id="rg" cx="0.35" cy="0.3" r="0.7"><stop offset="0" stop-color="#ff9a6a"/><stop offset="0.5" stop-color="#f04a12"/><stop offset="1" stop-color="#c83008"/></radialGradient></defs><path d="M2.2 3.5 Q2.2 1.8 3.9 1.8 H12 L16.2 6 V16.5 Q16.2 18.2 14.5 18.2 H3.9 Q2.2 18.2 2.2 16.5 Z" fill="#fdfdfd" stroke="#777" stroke-width="1.4"/><path d="M12 1.8 V6 H16.2" fill="#666" stroke="#666" stroke-width="1.2"/><circle cx="15" cy="15" r="4.6" fill="url(#rg)" stroke="#a83010" stroke-width="0.8"/></svg>
<div class="t" style="top:843.05px;font-size:15.7px;line-height:19.7px;color:#000;left:48px;transform-origin:0 50%;transform:scaleX(0.9172);">50526993</div>
<div class="t" style="top:843.05px;font-size:15.7px;line-height:19.7px;color:#000;right:1451.00px;transform-origin:100% 50%;transform:scaleX(0.8917);">2017.04.27 04:56:21</div>
<div class="t" style="top:843.05px;font-size:15.7px;line-height:19.7px;color:#000;right:1322.00px;transform-origin:100% 50%;transform:scaleX(0.9172);">sell</div>
<div class="t" style="top:843.05px;font-size:15.7px;line-height:19.7px;color:#000;right:1219.00px;transform-origin:100% 50%;transform:scaleX(0.9172);">0.07</div>
<div class="t" style="top:843.05px;font-size:15.7px;line-height:19.7px;color:#000;right:1090.00px;transform-origin:100% 50%;transform:scaleX(0.9172);">eurusd</div>
<div class="t" style="top:843.05px;font-size:15.7px;line-height:19.7px;color:#000;right:961.00px;transform-origin:100% 50%;transform:scaleX(0.9172);">1.09113</div>
<div class="t" style="top:843.05px;font-size:15.7px;line-height:19.7px;color:#000;right:832.00px;transform-origin:100% 50%;transform:scaleX(0.9172);">0.00000</div>
<div class="t" style="top:843.05px;font-size:15.7px;line-height:19.7px;color:#000;right:703.00px;transform-origin:100% 50%;transform:scaleX(0.9172);">1.08999</div>
<div class="t" style="top:843.05px;font-size:15.7px;line-height:19.7px;color:#000;right:418.00px;transform-origin:100% 50%;transform:scaleX(0.8917);">2017.04.27 07:59:44</div>
<div class="t" style="top:843.05px;font-size:15.7px;line-height:19.7px;color:#000;right:289.00px;transform-origin:100% 50%;transform:scaleX(0.9172);">1.08999</div>
<div class="t" style="top:843.05px;font-size:15.7px;line-height:19.7px;color:#000;right:160.00px;transform-origin:100% 50%;transform:scaleX(0.9172);">0.00</div>
<div class="t" style="top:843.05px;font-size:15.7px;line-height:19.7px;color:#000;right:10.00px;transform-origin:100% 50%;transform:scaleX(0.9172);">7.32</div>
<div class="r" style="left:21px;top:890px;width:1892px;height:1px;background:#c8c8c8;"></div>
<div class="r" style="left:187px;top:866px;width:1px;height:24px;background:#c8c8c8;"></div>
<div class="r" style="left:472px;top:866px;width:1px;height:24px;background:#c8c8c8;"></div>
<div class="r" style="left:601px;top:866px;width:1px;height:24px;background:#c8c8c8;"></div>
<div class="r" style="left:704px;top:866px;width:1px;height:24px;background:#c8c8c8;"></div>
<div class="r" style="left:833px;top:866px;width:1px;height:24px;background:#c8c8c8;"></div>
<div class="r" style="left:962px;top:866px;width:1px;height:24px;background:#c8c8c8;"></div>
<div class="r" style="left:1091px;top:866px;width:1px;height:24px;background:#c8c8c8;"></div>
<div class="r" style="left:1220px;top:866px;width:1px;height:24px;background:#c8c8c8;"></div>
<div class="r" style="left:1505px;top:866px;width:1px;height:24px;background:#c8c8c8;"></div>
<div class="r" style="left:1634px;top:866px;width:1px;height:24px;background:#c8c8c8;"></div>
<div class="r" style="left:1763px;top:866px;width:1px;height:24px;background:#c8c8c8;"></div>
<div class="r" style="left:1093px;top:866px;width:126px;height:23px;background:#64f064;"></div>
<svg class="r" style="left:23px;top:868px;" width="21" height="22" viewBox="0 0 21 22"><defs><radialGradient id="rg" cx="0.35" cy="0.3" r="0.7"><stop offset="0" stop-color="#ff9a6a"/><stop offset="0.5" stop-color="#f04a12"/><stop offset="1" stop-color="#c83008"/></radialGradient></defs><path d="M2.2 3.5 Q2.2 1.8 3.9 1.8 H12 L16.2 6 V16.5 Q16.2 18.2 14.5 18.2 H3.9 Q2.2 18.2 2.2 16.5 Z" fill="#fdfdfd" stroke="#777" stroke-width="1.4"/><path d="M12 1.8 V6 H16.2" fill="#666" stroke="#666" stroke-width="1.2"/><circle cx="15" cy="15" r="4.6" fill="url(#rg)" stroke="#a83010" stroke-width="0.8"/></svg>
<div class="t" style="top:868.05px;font-size:15.7px;line-height:19.7px;color:#000;left:48px;transform-origin:0 50%;transform:scaleX(0.9172);">50520354</div>
<div class="t" style="top:868.05px;font-size:15.7px;line-height:19.7px;color:#000;right:1451.00px;transform-origin:100% 50%;transform:scaleX(0.8917);">2017.04.26 22:22:11</div>
<div class="t" style="top:868.05px;font-size:15.7px;line-height:19.7px;color:#000;right:1322.00px;transform-origin:100% 50%;transform:scaleX(0.9172);">sell</div>
<div class="t" style="top:868.05px;font-size:15.7px;line-height:19.7px;color:#000;right:1219.00px;transform-origin:100% 50%;transform:scaleX(0.9172);">0.07</div>
<div class="t" style="top:868.05px;font-size:15.7px;line-height:19.7px;color:#000;right:1090.00px;transform-origin:100% 50%;transform:scaleX(0.9172);">eurusd</div>
<div class="t" style="top:868.05px;font-size:15.7px;line-height:19.7px;color:#000;right:961.00px;transform-origin:100% 50%;transform:scaleX(0.9172);">1.09064</div>
<div class="t" style="top:868.05px;font-size:15.7px;line-height:19.7px;color:#000;right:832.00px;transform-origin:100% 50%;transform:scaleX(0.9172);">0.00000</div>
<div class="t" style="top:868.05px;font-size:15.7px;line-height:19.7px;color:#000;right:703.00px;transform-origin:100% 50%;transform:scaleX(0.9172);">1.08999</div>
<div class="t" style="top:868.05px;font-size:15.7px;line-height:19.7px;color:#000;right:418.00px;transform-origin:100% 50%;transform:scaleX(0.8917);">2017.04.27 07:59:44</div>
<div class="t" style="top:868.05px;font-size:15.7px;line-height:19.7px;color:#000;right:289.00px;transform-origin:100% 50%;transform:scaleX(0.9172);">1.08999</div>
<div class="t" style="top:868.05px;font-size:15.7px;line-height:19.7px;color:#000;right:160.00px;transform-origin:100% 50%;transform:scaleX(0.9172);">0.37</div>
<div class="t" style="top:868.05px;font-size:15.7px;line-height:19.7px;color:#000;right:10.00px;transform-origin:100% 50%;transform:scaleX(0.9172);">4.17</div>
<div class="r" style="left:21px;top:890px;width:1892px;height:25px;background:#c8c8c8;"></div>
<svg class="r" style="left:29px;top:898px;" width="11" height="11" viewBox="0 0 11 11"><circle cx="5.5" cy="5.5" r="4" fill="#bdbdbd" stroke="#7a7a7a" stroke-width="1.6"/></svg>
<div class="t" style="top:893.00px;font-size:15px;line-height:19px;color:#000;font-weight:bold;letter-spacing:0.147px;left:47.8px;">Zisk/Ztráta: 268.61</div>
<div class="t" style="top:893.00px;font-size:15px;line-height:19px;color:#000;font-weight:bold;letter-spacing:-0.058px;left:191.2px;">Kredit: 0.00</div>
<div class="t" style="top:893.00px;font-size:15px;line-height:19px;color:#000;font-weight:bold;letter-spacing:-0.198px;left:281.6px;">Vklad: 0.00</div>
<div class="t" style="top:893.00px;font-size:15px;line-height:19px;color:#000;font-weight:bold;letter-spacing:-0.032px;left:367.5px;">Výběr: 0.00</div>
<div class="t" style="top:892.75px;font-size:15.5px;line-height:19.5px;color:#000;font-weight:bold;letter-spacing:0.098px;right:11.90px;">268.61</div>
<div class="r" style="left:20px;top:1018px;width:1894px;height:2px;background:#000;"></div>
<div class="r" style="left:20px;top:1020px;width:1px;height:26px;background:#a0a0a0;"></div>
<div class="r" style="left:185px;top:1018px;width:109px;height:25px;background:#fff;box-sizing:border-box;border:2px solid #000;border-top:none;"></div>
<div class="t" style="top:1022.00px;font-size:14px;line-height:18px;color:#6d6d6d;letter-spacing:0.494px;left:36px;">Obchod</div>
<div class="t" style="top:1022.00px;font-size:14px;line-height:18px;color:#6d6d6d;letter-spacing:0.274px;left:114px;">Expozice</div>
<div class="t" style="top:1022.00px;font-size:14px;line-height:18px;color:#6d6d6d;letter-spacing:0.369px;left:307px;">Zprávy</div>
<div class="t" style="top:1026.00px;font-size:13px;line-height:17px;color:#e02020;font-weight:bold;letter-spacing:-0.230px;left:355px;">99</div>
<div class="t" style="top:1022.00px;font-size:14px;line-height:18px;color:#6d6d6d;letter-spacing:0.573px;left:394px;">Alarmy</div>
<div class="t" style="top:1022.00px;font-size:14px;line-height:18px;color:#6d6d6d;letter-spacing:-0.010px;left:466px;">Poštovní schránka</div>
<div class="t" style="top:1026.00px;font-size:13px;line-height:17px;color:#e02020;font-weight:bold;letter-spacing:-0.230px;left:584px;">51</div>
<div class="t" style="top:1022.00px;font-size:14px;line-height:18px;color:#6d6d6d;letter-spacing:0.494px;left:625px;">Obchod</div>
<div class="t" style="top:1026.00px;font-size:13px;line-height:17px;color:#e02020;font-weight:bold;letter-spacing:-0.230px;left:680px;">79</div>
<div class="t" style="top:1022.00px;font-size:14px;line-height:18px;color:#6d6d6d;letter-spacing:0.452px;left:720px;">Knihovna</div>
<div class="t" style="top:1022.00px;font-size:14px;line-height:18px;color:#6d6d6d;letter-spacing:0.552px;left:806px;">Strategie</div>
<div class="t" style="top:1022.00px;font-size:14px;line-height:18px;color:#6d6d6d;letter-spacing:0.685px;left:891px;">Deník</div>
<div class="t" style="top:1022.00px;font-size:14px;line-height:18px;color:#000;letter-spacing:0.322px;left:199px;">Historie účtu</div>
<div class="r" style="left:101px;top:1022px;width:1px;height:18px;background:#6d6d6d;"></div>
<div class="r" style="left:381px;top:1022px;width:1px;height:18px;background:#6d6d6d;"></div>
<div class="r" style="left:453px;top:1022px;width:1px;height:18px;background:#6d6d6d;"></div>
<div class="r" style="left:612px;top:1022px;width:1px;height:18px;background:#6d6d6d;"></div>
<div class="r" style="left:708px;top:1022px;width:1px;height:18px;background:#6d6d6d;"></div>
<div class="r" style="left:794px;top:1022px;width:1px;height:18px;background:#6d6d6d;"></div>
<div class="r" style="left:878px;top:1022px;width:1px;height:18px;background:#6d6d6d;"></div>
<div class="r" style="left:941px;top:1022px;width:1px;height:18px;background:#6d6d6d;"></div>
<div class="r" style="left:1914px;top:288px;width:1px;height:758px;background:#d8d8d8;"></div>
<svg class="r" style="left:1890px;top:952px;" width="30" height="66" viewBox="0 0 30 66"><path d="M1.5 5 L5 1.5 H30 V64 L1.5 45.5 Z" fill="#fff" stroke="#c8ccd0"/></svg>
<svg class="r" style="left:1896px;top:958px;" width="23" height="29" viewBox="0 0 23 29"><defs><linearGradient id="tvg" x1="0" y1="0" x2="1" y2="1"><stop offset="0" stop-color="#3aa0ff"/><stop offset="1" stop-color="#0a5ad8"/></linearGradient></defs><path d="M2 3 Q2 1 4 1.3 L20 3.5 Q22 4 22 6 V25 Q22 27.5 20 27 L4 24 Q2 23.5 2 21.5 Z" fill="url(#tvg)"/><circle cx="12" cy="14" r="7.5" fill="#e8eef4"/><path d="M5.5 14 L9.5 10.5 V12.6 H14.5 V10.5 L18.5 14 L14.5 17.5 V15.4 H9.5 V17.5 Z" fill="#1a78e8"/></svg>
<div class="r" style="left:0px;top:1049px;width:1920px;height:1px;background:#c8c8c8;"></div>
<div class="r" style="left:0px;top:1050px;width:1920px;height:1px;background:#fff;"></div>
<div class="t" style="top:1058.50px;font-size:14px;line-height:18px;color:#000;letter-spacing:0.176px;left:2px;">Pro pomoc, stiskněte F1</div>
<div class="r" style="left:1047px;top:1055px;width:1px;height:23px;background:#a0a0a0;"></div>
<div class="r" style="left:1197px;top:1055px;width:1px;height:23px;background:#a0a0a0;"></div>
<div class="r" style="left:1327px;top:1055px;width:1px;height:23px;background:#a0a0a0;"></div>
<div class="r" style="left:1416px;top:1055px;width:1px;height:23px;background:#a0a0a0;"></div>
<div class="r" style="left:1505px;top:1055px;width:1px;height:23px;background:#a0a0a0;"></div>
<div class="r" style="left:1590px;top:1055px;width:1px;height:23px;background:#a0a0a0;"></div>
<div class="r" style="left:1677px;top:1055px;width:1px;height:23px;background:#a0a0a0;"></div>
<div class="r" style="left:1762px;top:1055px;width:1px;height:23px;background:#a0a0a0;"></div>
<div class="t" style="top:1058.50px;font-size:14px;line-height:18px;color:#000;letter-spacing:0.520px;left:1053px;">Default</div>
<svg class="r" style="left:1767px;top:1058px;" width="32" height="17" viewBox="0 0 32 17"><rect x="0" y="10" width="2.5" height="6" fill="#0a3a5a"/><rect x="0" y="0" width="2.5" height="9" fill="#6a8a1a"/><rect x="4" y="9" width="2.5" height="7" fill="#0a3a5a"/><rect x="4" y="0" width="2.5" height="8" fill="#6a8a1a"/><rect x="8" y="8" width="2.5" height="8" fill="#0a3a5a"/><rect x="8" y="0" width="2.5" height="7" fill="#6a8a1a"/><rect x="12" y="7" width="2.5" height="9" fill="#0a3a5a"/><rect x="12" y="0" width="2.5" height="6" fill="#6a8a1a"/><rect x="16" y="6" width="2.5" height="10" fill="#0a3a5a"/><rect x="16" y="0" width="2.5" height="5" fill="#6a8a1a"/><rect x="20" y="5" width="2.5" height="11" fill="#0a3a5a"/><rect x="20" y="0" width="2.5" height="4" fill="#6a8a1a"/><rect x="24" y="4" width="2.5" height="12" fill="#0a3a5a"/><rect x="24" y="0" width="2.5" height="3" fill="#6a8a1a"/><rect x="28" y="3" width="2.5" height="13" fill="#0a3a5a"/><rect x="28" y="0" width="2.5" height="2" fill="#6a8a1a"/></svg>
<div class="t" style="top:1058.50px;font-size:14px;line-height:18px;color:#000;letter-spacing:0.389px;left:1803px;">1290/3 kb</div>
<div class="r" style="left:0px;top:1077px;width:1920px;height:1px;background:#fafafa;"></div>
<div class="r" style="left:0px;top:1078px;width:1920px;height:2px;background:#1a1a1a;"></div>
<div class="r" style="left:618px;top:1078px;width:61px;height:2px;background:#505050;"></div>
</body></html>
